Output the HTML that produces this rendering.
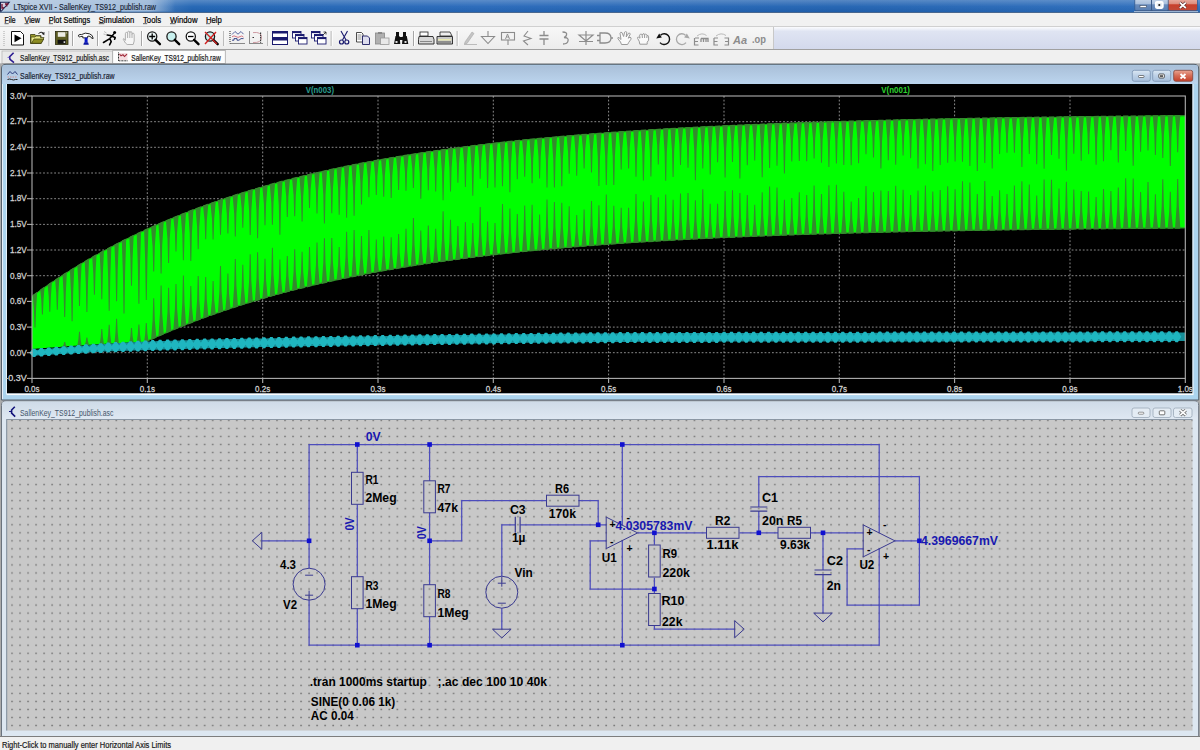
<!DOCTYPE html>
<html><head><meta charset="utf-8"><style>html,body{margin:0;padding:0;width:1200px;height:750px;overflow:hidden;background:#f0f0f0}svg{display:block}</style></head>
<body><svg width="1200" height="750" viewBox="0 0 1200 750" font-family="Liberation Sans, sans-serif">
<defs>
<linearGradient id="tb" x1="0" x2="1" y1="0" y2="0"><stop offset="0" stop-color="#6f98c8"/><stop offset="0.12" stop-color="#4a80c0"/><stop offset="0.16" stop-color="#1e62b2"/><stop offset="0.4" stop-color="#2466b8"/><stop offset="0.7" stop-color="#1e60b0"/><stop offset="1" stop-color="#2a6cbc"/></linearGradient>
<linearGradient id="glow" x1="0" x2="1" y1="0" y2="0"><stop offset="0" stop-color="#c4d4e6" stop-opacity="0.9"/><stop offset="0.85" stop-color="#b8cce2" stop-opacity="0.75"/><stop offset="1" stop-color="#b8cce2" stop-opacity="0"/></linearGradient>
<linearGradient id="tbv" x1="0" x2="0" y1="0" y2="1"><stop offset="0" stop-color="#fff" stop-opacity="0.25"/><stop offset="0.5" stop-color="#fff" stop-opacity="0.05"/><stop offset="1" stop-color="#000" stop-opacity="0.05"/></linearGradient>
<linearGradient id="wt" x1="0" x2="0" y1="0" y2="1"><stop offset="0" stop-color="#a9bfd8"/><stop offset="1" stop-color="#bcd5ee"/></linearGradient>
<linearGradient id="wt2" x1="0" x2="0" y1="0" y2="1"><stop offset="0" stop-color="#cfdbe8"/><stop offset="1" stop-color="#dfe8f2"/></linearGradient>
<linearGradient id="tool" x1="0" x2="0" y1="0" y2="1"><stop offset="0" stop-color="#f7f7f7"/><stop offset="1" stop-color="#ececec"/></linearGradient>
<linearGradient id="toolr" x1="0" x2="0" y1="0" y2="1"><stop offset="0" stop-color="#fbfcfe"/><stop offset="0.2" stop-color="#dfe4f2"/><stop offset="1" stop-color="#d3d9ec"/></linearGradient>
<linearGradient id="redb" x1="0" x2="0" y1="0" y2="1"><stop offset="0" stop-color="#e8a592"/><stop offset="0.5" stop-color="#d56b55"/><stop offset="1" stop-color="#c4402a"/></linearGradient>
<linearGradient id="blueb" x1="0" x2="0" y1="0" y2="1"><stop offset="0" stop-color="#dce8f4"/><stop offset="0.5" stop-color="#bcd0e6"/><stop offset="1" stop-color="#a8c0dc"/></linearGradient>
<pattern id="dots" x="8.285" y="416.385" width="8.03" height="8.03" patternUnits="userSpaceOnUse"><rect x="2.85" y="3.3" width="1.7" height="1.4" fill="#7a7a7a"/></pattern>
<clipPath id="plotclip"><rect x="7" y="84" width="1185.5" height="309.5"/></clipPath>
</defs>
<rect x="0" y="0" width="1200" height="750" fill="#f0f0f0"/>
<rect x="0" y="0" width="1200" height="13" fill="url(#tb)"/>
<rect x="0" y="0" width="1200" height="13" fill="url(#tbv)"/>
<rect x="0" y="0" width="175" height="11.5" fill="url(#glow)"/>
<path d="M0.5,2.3 H9.2 L1.2,11.3 H0.5 Z" fill="#d8d0e0" stroke="#1a2250" stroke-width="1.1"/><path d="M2,4 v4 h2 M5,4 h3.5 M6.8,4 v2.5" stroke="#701030" stroke-width="1.3" fill="none"/>
<text x="13.5" y="9.8" font-size="8.8" fill="#182434" text-anchor="start" textLength="142.5" lengthAdjust="spacingAndGlyphs" stroke="#182434" stroke-width="0.15">LTspice XVII - SallenKey_TS912_publish.raw</text>
<linearGradient id="cb" x1="0" x2="0" y1="0" y2="1"><stop offset="0" stop-color="#c4d4e8"/><stop offset="0.45" stop-color="#a8bedc"/><stop offset="0.5" stop-color="#6a8cbc"/><stop offset="1" stop-color="#5a80b4"/></linearGradient>
<linearGradient id="cr" x1="0" x2="0" y1="0" y2="1"><stop offset="0" stop-color="#eab0a4"/><stop offset="0.45" stop-color="#dc8c7c"/><stop offset="0.5" stop-color="#c8402c"/><stop offset="1" stop-color="#c04a38"/></linearGradient>
<path d="M1134.5,-1 V9 Q1134.5,11 1136.5,11 H1195.7 Q1197.7,11 1197.7,9 V-1 Z" fill="#3a5a88"/>
<rect x="1135.2" y="-1" width="15.8" height="11.3" rx="1" fill="url(#cb)"/>
<rect x="1152" y="-1" width="15.8" height="11.3" rx="1" fill="url(#cb)"/>
<rect x="1168.6" y="-1" width="28.4" height="11.3" rx="1" fill="url(#cr)"/>
<rect x="1140" y="5.6" width="6.2" height="2" fill="#fff" stroke="#2a3a50" stroke-width="0.5"/>
<rect x="1155.8" y="2" width="7" height="6" rx="1.2" fill="#e8eef4" stroke="#fff" stroke-width="1.8"/><circle cx="1159.3" cy="5" r="1.1" fill="#222"/>
<path d="M1179.8,2.6 L1185.8,8 M1185.8,2.6 L1179.8,8" stroke="#4a2020" stroke-width="3"/><path d="M1179.8,2.6 L1185.8,8 M1185.8,2.6 L1179.8,8" stroke="#fff" stroke-width="1.8"/>
<rect x="1134" y="11" width="64" height="1.3" fill="#9ab4d4"/>
<rect x="0" y="12.3" width="1200" height="0.9" fill="#5a6c84"/>
<rect x="0" y="13" width="1200" height="13" fill="#f1f1f1"/>
<text x="4.5" y="22.6" font-size="8.6" fill="#000" text-anchor="start" textLength="11.0" lengthAdjust="spacingAndGlyphs" stroke="#000" stroke-width="0.2">File</text>
<rect x="4.5" y="23.5" width="4.2" height="0.6" fill="#000"/>
<text x="24.5" y="22.6" font-size="8.6" fill="#000" text-anchor="start" textLength="15.5" lengthAdjust="spacingAndGlyphs" stroke="#000" stroke-width="0.2">View</text>
<rect x="24.5" y="23.5" width="4.2" height="0.6" fill="#000"/>
<text x="48.8" y="22.6" font-size="8.6" fill="#000" text-anchor="start" textLength="41.3" lengthAdjust="spacingAndGlyphs" stroke="#000" stroke-width="0.2">Plot Settings</text>
<rect x="48.8" y="23.5" width="4.2" height="0.6" fill="#000"/>
<text x="98.8" y="22.6" font-size="8.6" fill="#000" text-anchor="start" textLength="35.5" lengthAdjust="spacingAndGlyphs" stroke="#000" stroke-width="0.2">Simulation</text>
<rect x="98.8" y="23.5" width="5.5" height="0.6" fill="#000"/>
<text x="143" y="22.6" font-size="8.6" fill="#000" text-anchor="start" textLength="18.0" lengthAdjust="spacingAndGlyphs" stroke="#000" stroke-width="0.2">Tools</text>
<rect x="143" y="23.5" width="4.2" height="0.6" fill="#000"/>
<text x="170" y="22.6" font-size="8.6" fill="#000" text-anchor="start" textLength="27.5" lengthAdjust="spacingAndGlyphs" stroke="#000" stroke-width="0.2">Window</text>
<rect x="170" y="23.5" width="5.5" height="0.6" fill="#000"/>
<text x="206" y="22.6" font-size="8.6" fill="#000" text-anchor="start" textLength="15.8" lengthAdjust="spacingAndGlyphs" stroke="#000" stroke-width="0.2">Help</text>
<rect x="206" y="23.5" width="4.2" height="0.6" fill="#000"/>
<rect x="0" y="26" width="1200" height="0.8" fill="#c8c8c8"/>
<rect x="0" y="27" width="774" height="22" fill="url(#tool)"/>
<rect x="774" y="27" width="426" height="22" fill="url(#toolr)"/>
<rect x="773" y="27" width="1" height="22" fill="#c8c8c8"/>
<rect x="0" y="49" width="1200" height="1" fill="#a0a0a0"/>
<rect x="3.5" y="31" width="1" height="1" fill="#a8a8a8"/>
<rect x="3.5" y="33" width="1" height="1" fill="#a8a8a8"/>
<rect x="3.5" y="35" width="1" height="1" fill="#a8a8a8"/>
<rect x="3.5" y="37" width="1" height="1" fill="#a8a8a8"/>
<rect x="3.5" y="39" width="1" height="1" fill="#a8a8a8"/>
<rect x="3.5" y="41" width="1" height="1" fill="#a8a8a8"/>
<rect x="3.5" y="43" width="1" height="1" fill="#a8a8a8"/>
<rect x="3.5" y="45" width="1" height="1" fill="#a8a8a8"/>
<rect x="48.5" y="31" width="1" height="15" fill="#a6a6a6"/><rect x="49.5" y="31" width="1" height="15" fill="#fff"/>
<rect x="72" y="31" width="1" height="15" fill="#a6a6a6"/><rect x="73" y="31" width="1" height="15" fill="#fff"/>
<rect x="97" y="31" width="1" height="15" fill="#a6a6a6"/><rect x="98" y="31" width="1" height="15" fill="#fff"/>
<rect x="141" y="31" width="1" height="15" fill="#a6a6a6"/><rect x="142" y="31" width="1" height="15" fill="#fff"/>
<rect x="223.3" y="31" width="1" height="15" fill="#a6a6a6"/><rect x="224.3" y="31" width="1" height="15" fill="#fff"/>
<rect x="267.3" y="31" width="1" height="15" fill="#a6a6a6"/><rect x="268.3" y="31" width="1" height="15" fill="#fff"/>
<rect x="330.7" y="31" width="1" height="15" fill="#a6a6a6"/><rect x="331.7" y="31" width="1" height="15" fill="#fff"/>
<rect x="413" y="31" width="1" height="15" fill="#a6a6a6"/><rect x="414" y="31" width="1" height="15" fill="#fff"/>
<rect x="456.7" y="31" width="1" height="15" fill="#a6a6a6"/><rect x="457.7" y="31" width="1" height="15" fill="#fff"/>
<path d="M11.5,31.5 h9 l3,3 v10.5 h-12 z" fill="#fff" stroke="#111" stroke-width="1"/><path d="M14.5,34.5 L21.5,38.3 L14.5,42.3 Z" fill="#000"/>
<path d="M30.5,34.5 h4.5 l1,1.2 h5 v7.8 h-10.5 z" fill="#9a9a2a" stroke="#3a3a10" stroke-width="0.8"/><path d="M31,37 h4 l1,-1 h4.5 v1.5 h3.5 l-2.8,5.8 h-10.2 z" fill="#e8e888" stroke="#3a3a10" stroke-width="0.7"/><path d="M31.5,43.3 l2.5,-4.3 h9.8 l-2.6,4.3 z" fill="#8c8c22" stroke="#3a3a10" stroke-width="0.7"/><path d="M38.5,33.5 q2.5,-2.5 5,-0.5" fill="none" stroke="#222" stroke-width="1"/><path d="M44.5,32 l-0.2,3.2 l-2.6,-1.4 z" fill="#222"/>
<rect x="55.5" y="31.5" width="12.5" height="13" fill="#5e5e24" stroke="#2a2a10" stroke-width="0.8"/><rect x="57.8" y="32.2" width="7.6" height="4.6" fill="#ecece4"/><rect x="57.6" y="39.8" width="8.2" height="4" fill="#111"/><rect x="63.6" y="41.3" width="1.6" height="1.6" fill="#eee"/><rect x="66.2" y="32.4" width="1" height="1" fill="#ddd"/>
<path d="M78.5,35.2 q1.5,-1.2 3,-0.6 q3.5,-2.5 8,-0.8 q3.5,1.3 3.7,4.6 l-1.4,0 q-0.6,-2 -2.8,-2.3 l-1.4,0.2 l0,1.6 l-4.8,0 l0,-1.6 q-2.5,0.3 -3.6,0.6 q-1.2,-0.5 -0.7,-1.7 z" fill="#fff" stroke="#111" stroke-width="0.9"/><rect x="84.6" y="37.6" width="3" height="5.2" fill="#0a18c8"/><path d="M84,42.6 h4.2 l0.6,2.2 h-5.4 z" fill="#0a14a0"/>
<circle cx="114.6" cy="32.6" r="1.5" fill="#000"/><path d="M113.6,34.2 L109.8,38.6 L103.5,42.5 M109.8,38.6 L111.2,41.6 L109.6,44.8 M111.8,36.2 L115.2,37.6 L114.6,39.2 M111.6,35.8 L107.2,35" fill="none" stroke="#000" stroke-width="1.6" stroke-linecap="round" stroke-linejoin="round"/><path d="M104,31.5 l2.5,1.5 M103.5,34 l2.2,0.6" stroke="#999" stroke-width="0.6"/>
<path d="M127.2,44.5 H133.2 L134.2,41 V34.6 Q134.2,33.2 133.1,33.2 Q132,33.2 132,34.6 V33 Q132,31.6 130.9,31.6 Q129.8,31.6 129.8,33 V32.6 Q129.8,31.2 128.7,31.2 Q127.6,31.2 127.6,32.6 V33.6 Q127.6,32.4 126.5,32.4 Q125.4,32.4 125.4,33.6 V40.4 L124.4,39 Q123.4,38 123.2,39.2 L125.4,43 Z M127.6,33.6 V38 M129.8,33 V38 M132,34.6 V38" fill="#f6f6f6" stroke="#a8a8a8" stroke-width="0.9"/>
<circle cx="152.2" cy="36.5" r="4.6" fill="#eef8f8" stroke="#1a1a1a" stroke-width="1.3"/><path d="M155.5,39.8 L159.89999999999998,44.2" stroke="#000" stroke-width="2.4" stroke-linecap="round"/><path d="M149.2,36.5 h6 M152.2,33.5 v6" stroke="#000" stroke-width="1.3"/>
<circle cx="171.5" cy="36.5" r="4.6" fill="#c8f0ee" stroke="#1a1a1a" stroke-width="1.3"/><path d="M174.8,39.8 L179.2,44.2" stroke="#000" stroke-width="2.4" stroke-linecap="round"/>
<circle cx="190.8" cy="36.5" r="4.6" fill="#fff" stroke="#1a1a1a" stroke-width="1.3"/><path d="M194.10000000000002,39.8 L198.5,44.2" stroke="#000" stroke-width="2.4" stroke-linecap="round"/><path d="M188,36.5 h5.5" stroke="#000" stroke-width="1.3"/>
<circle cx="210.0" cy="36.5" r="4.6" fill="#c8f0ee" stroke="#1a1a1a" stroke-width="1.3"/><path d="M213.3,39.8 L217.7,44.2" stroke="#000" stroke-width="2.4" stroke-linecap="round"/><path d="M205,32 L217,44 M216,32 L205,44" stroke="#d02020" stroke-width="1.4"/>
<path d="M230,31 V43.5 H244.5" fill="none" stroke="#222" stroke-width="1" stroke-dasharray="1,1"/><path d="M232,34.5 L235,31.5 L238,34.2 L241,31.5 L243.5,34.2" fill="none" stroke="#4a5a98" stroke-width="0.9"/><path d="M232,36.8 Q234,35 236,36.6 T240,36.6 T243.5,37.2" fill="none" stroke="#d87a86" stroke-width="1"/><path d="M232,40.2 H234 V38.6 H237 V40.2 H239 L241,38.6 H243.5" fill="none" stroke="#2a3a80" stroke-width="0.9"/>
<path d="M249.5,31.5 V43.5 H263.5" fill="none" stroke="#222" stroke-width="1" stroke-dasharray="1,1"/><path d="M253,32.6 Q261.5,31.5 261.5,37.5 Q261.5,43 253,42.5" fill="none" stroke="#c89098" stroke-width="0.9"/><path d="M260.6,32.5 V42.8" stroke="#333" stroke-width="1.1" stroke-dasharray="1.5,0.8"/><path d="M252.5,37.5 h1.5" stroke="#333" stroke-width="1"/>
<rect x="272.5" y="31.5" width="15" height="6" fill="#fff" stroke="#1a1a6e" stroke-width="1"/><rect x="272.5" y="31.5" width="15" height="2" fill="#1a1a6e"/><rect x="272.5" y="38.5" width="15" height="6" fill="#fff" stroke="#1a1a6e" stroke-width="1"/><rect x="272.5" y="38.5" width="15" height="2" fill="#1a1a6e"/>
<rect x="292.5" y="31.5" width="8.5" height="6.5" fill="#fff" stroke="#1a1a6e" stroke-width="0.9"/><rect x="292.5" y="31.5" width="8.5" height="1.6" fill="#1a1a6e"/><rect x="295.5" y="34.5" width="8.5" height="6.5" fill="#fff" stroke="#1a1a6e" stroke-width="0.9"/><rect x="295.5" y="34.5" width="8.5" height="1.6" fill="#1a1a6e"/><rect x="298.5" y="37.5" width="8.5" height="6.5" fill="#fff" stroke="#1a1a6e" stroke-width="0.9"/><rect x="298.5" y="37.5" width="8.5" height="1.6" fill="#1a1a6e"/>
<rect x="311.5" y="31.5" width="8.5" height="6.5" fill="#fff" stroke="#1a1a6e" stroke-width="0.9"/><rect x="311.5" y="31.5" width="8.5" height="1.6" fill="#1a1a6e"/><rect x="314.5" y="34.5" width="8.5" height="6.5" fill="#fff" stroke="#1a1a6e" stroke-width="0.9"/><rect x="314.5" y="34.5" width="8.5" height="1.6" fill="#1a1a6e"/><rect x="317.5" y="37.5" width="8.5" height="6.5" fill="#fff" stroke="#1a1a6e" stroke-width="0.9"/><rect x="317.5" y="37.5" width="8.5" height="1.6" fill="#1a1a6e"/><path d="M323,35 l3,-3 M323.5,32 h2.5 v2.5" fill="none" stroke="#222" stroke-width="0.8"/>
<path d="M341,31 L346,40 M347.5,31 L342.5,40" stroke="#1a1a6e" stroke-width="1.1"/><circle cx="341.5" cy="42" r="2" fill="none" stroke="#1a1a6e" stroke-width="1.2"/><circle cx="346.8" cy="42" r="2" fill="none" stroke="#1a1a6e" stroke-width="1.2"/>
<path d="M356.5,32.5 h5 l1.5,1.5 v8 h-6.5 z" fill="#fff" stroke="#222" stroke-width="0.8"/><path d="M357.5,35 h4 M357.5,37 h4 M357.5,39 h4" stroke="#444" stroke-width="0.6"/><path d="M362.5,36 h5 l2,2 v6.5 h-7 z" fill="#dde" stroke="#1a1a5e" stroke-width="0.9"/>
<rect x="375.5" y="33" width="9" height="11" fill="#b0b0b0" stroke="#888" stroke-width="0.8"/><rect x="378" y="32" width="4" height="2" fill="#888"/><rect x="380.5" y="38" width="8.5" height="6.5" fill="#e8e8e8" stroke="#999" stroke-width="0.8"/>
<path d="M394,44 l1.5,-8 h4 l0.8,8 z M402,44 l0.8,-8 h4 l1.5,8 z" fill="#111"/><rect x="396" y="32" width="3" height="4" fill="#111"/><rect x="403" y="32" width="3" height="4" fill="#111"/><rect x="399" y="37" width="4" height="3" fill="#111"/><rect x="395.5" y="41" width="2" height="2" fill="#ddd"/><rect x="404.5" y="41" width="2" height="2" fill="#ddd"/>
<rect x="420" y="32" width="8" height="4" fill="#fff" stroke="#222" stroke-width="0.8"/><path d="M419,36.5 h14 l1,3 v4.5 h-15.5 v-4.5 z" fill="#d8d8d8" stroke="#222" stroke-width="0.9"/><rect x="420" y="41" width="12" height="1" fill="#888"/>
<path d="M440,32 h10 l2,4 h-12 z" fill="#eee" stroke="#222" stroke-width="0.8"/><path d="M437,36.5 h15.5 v7.5 h-15.5 z" fill="#c8c8c8" stroke="#222" stroke-width="0.9"/><rect x="438" y="39" width="13" height="1.5" fill="#e8e8b0"/><rect x="438" y="41.5" width="13" height="1" fill="#555"/>
<path d="M465,42 L472,32 L474,33.5 L467,43.5 L464.5,44 z" fill="#c4c4c4" stroke="#aaa" stroke-width="0.6"/><path d="M464,44.5 h13" stroke="#bbb" stroke-width="1"/>
<path d="M488,31 v5 M481.5,36.5 h13 l-6.5,7 z" fill="none" stroke="#8c8c8c" stroke-width="1.1"/>
<rect x="501.5" y="32.5" width="13" height="7.5" fill="none" stroke="#8c8c8c" stroke-width="1.1"/><path d="M508,40 v5" stroke="#8c8c8c" stroke-width="1.1"/><path d="M505.5,39 l2,-5 l2,5 M506.3,37 h2.8" fill="none" stroke="#8c8c8c" stroke-width="0.9"/>
<path d="M528,31 L524,36 L531,38.5 L523.5,41 L528,45" fill="none" stroke="#8c8c8c" stroke-width="1.1"/>
<path d="M544,31 v4.5 M539.5,35.5 h9 M539.5,39 h9 M544,39 v6" fill="none" stroke="#8c8c8c" stroke-width="1.3"/>
<path d="M562.5,32 q5,0 4,3 q-0.5,2 -2.5,2.5 q5,0 4,3.5 q-0.5,3 -5,3" fill="none" stroke="#8c8c8c" stroke-width="1.3"/>
<path d="M586,31 v14 M579,35 h14 l-7,6 z M579,41.5 h14" fill="none" stroke="#8c8c8c" stroke-width="1.2"/>
<path d="M600,33 h5 q6,0 6,5 q0,5 -6,5 h-5 z M597,35.5 h3 M597,40.5 h3 M611,38 h2" fill="none" stroke="#8c8c8c" stroke-width="1.3"/>
<path d="M621.5,44.5 L620.5,42 L618,38.8 Q617.3,37.2 619,37.6 L621,39.5 L620,33.2 Q620.6,31.6 622,32.6 L623.6,36.5 L624.6,32.2 Q625.6,31 626.8,32.2 L626.2,37 L628.6,33.2 Q630.2,32.6 630.2,34.2 L628.2,38.2 L630,37.2 Q631.6,37.6 631,39.2 L628.6,42.6 L627.6,44.5 Z" fill="#fafafa" stroke="#9a9a9a" stroke-width="1"/>
<path d="M639.8,44.2 L639.2,41.2 L637.6,38.4 Q637.2,36.8 638.6,37.2 L640,38.2 L639.6,35.2 Q640.2,33.6 641.6,34.2 L642.2,35.2 Q642.8,33.2 644.2,33.8 L644.6,34.8 Q645.6,33.6 646.6,34.6 L647,35.6 Q648.6,35.2 648.6,36.8 L648.6,40.2 L647.2,42.2 L647.2,44.2 Z M642.2,35.2 L642.4,38 M644.6,34.8 L644.6,38 M647,35.6 L646.8,38" fill="#fafafa" stroke="#9a9a9a" stroke-width="1"/>
<path d="M660.5,35.2 A5.4,5.4 0 1 1 660,42.6" fill="none" stroke="#111" stroke-width="1.4"/><path d="M656.2,38.6 L659.2,33.6 L661.8,37.4 Z" fill="#111"/>
<path d="M685.5,35.2 A5.4,5.4 0 1 0 686,42.6" fill="none" stroke="#a8a8a8" stroke-width="1.3"/><path d="M689.8,38.6 L686.8,33.6 L684.2,37.4 Z" fill="#a8a8a8"/>
<path d="M695,38 h4 M694.5,38 v7 h4 M694.5,41.5 h3.5" fill="none" stroke="#8c8c8c" stroke-width="1.2"/><path d="M701,38.5 h7 v3.5 M703.5,38.5 v3.5 M706,38.5 v3.5 M701,38.5 v3.5" fill="none" stroke="#8c8c8c" stroke-width="1.3"/><path d="M697,36 q5,-4 9.5,-0.5" fill="none" stroke="#aaa" stroke-width="0.8"/>
<path d="M714,38 h4 M714,38 v7 h4 M714,41.5 h3.5 M724.5,38 h4 v7 h-4 M725,41.5 h3.5" fill="none" stroke="#8c8c8c" stroke-width="1.2"/><path d="M716,36 q5,-4 10,-0.5" fill="none" stroke="#aaa" stroke-width="0.8"/>
<text x="733" y="44" font-size="10.5" font-weight="bold" fill="#8c8c8c" text-anchor="start" textLength="14" lengthAdjust="spacingAndGlyphs" font-style="italic">Aa</text>
<text x="752" y="42.5" font-size="10" font-weight="bold" fill="#8c8c8c" text-anchor="start" textLength="14" lengthAdjust="spacingAndGlyphs" >.op</text>
<rect x="0" y="50" width="1200" height="14" fill="#f0f0f0"/>
<rect x="2" y="51" width="110.5" height="12.5" fill="#e9e9e9" stroke="#b8b8b8" stroke-width="0.8"/>
<rect x="112.7" y="50.5" width="112.6" height="13" fill="#fdfdfd" stroke="#a8a8a8" stroke-width="0.8"/>
<path d="M13.6,52.8 L9.6,56.8 L10,59.4 L14,62.6" fill="none" stroke="#2a1a90" stroke-width="1.6"/><path d="M7.5,57.5 h2" stroke="#6a5ac8" stroke-width="0.8"/>
<text x="20" y="60.6" font-size="8.6" fill="#1a1a1a" text-anchor="start" textLength="89" lengthAdjust="spacingAndGlyphs" stroke="#1a1a1a" stroke-width="0.2">SallenKey_TS912_publish.asc</text>
<rect x="119" y="53" width="8.5" height="7" fill="#f4dce0"/><path d="M118.5,52.5 V60.8 H127.5" fill="none" stroke="#111" stroke-width="1" stroke-dasharray="0.9,0.6"/><path d="M119.5,54 L121,55.8 L123,54.8 L124.5,56.5 L127,54.2" fill="none" stroke="#a02838" stroke-width="1.1"/>
<text x="131.3" y="60.6" font-size="8.6" fill="#1a1a1a" text-anchor="start" textLength="89.4" lengthAdjust="spacingAndGlyphs" stroke="#1a1a1a" stroke-width="0.2">SallenKey_TS912_publish.raw</text>
<rect x="0" y="63.6" width="1200" height="1" fill="#7a7a7a"/>
<rect x="0" y="64" width="1200" height="673" fill="#ababab"/>
<path d="M1.5,400 V69 Q1.5,64.3 6,64.3 H1194 Q1198.7,64.3 1198.7,69 V400 Z" fill="#acd4ee" stroke="#56606c" stroke-width="1"/>
<rect x="2.5" y="65.3" width="1195.2" height="18.5" fill="url(#wt)"/>
<path d="M2.5,84 V399" stroke="#e6eef8" stroke-width="1"/>
<path d="M7.5,74.5 l2.5,-3 l2.5,2.5 l2.5,-2.5 l2.5,3" fill="none" stroke="#2a3a7a" stroke-width="1"/><path d="M7.5,77 h10" stroke="#d09090" stroke-width="1" stroke-dasharray="1.5,1"/><path d="M7.5,79.5 q2,-1 4,0 q2,1 4,0 l2,0" fill="none" stroke="#222" stroke-width="1"/>
<text x="20" y="79.2" font-size="8.6" fill="#1a2434" text-anchor="start" textLength="94.5" lengthAdjust="spacingAndGlyphs" stroke="#1a2434" stroke-width="0.2">SallenKey_TS912_publish.raw</text>
<rect x="1132.3" y="70.3" width="18" height="11" rx="2" fill="url(#blueb)" stroke="#7890b0" stroke-width="0.8"/>
<rect x="1152.7" y="70.3" width="18" height="11" rx="2" fill="url(#blueb)" stroke="#7890b0" stroke-width="0.8"/>
<rect x="1173.7" y="70.3" width="19" height="11" rx="2" fill="url(#redb)" stroke="#80423a" stroke-width="0.8"/>
<rect x="1138.5" y="75.5" width="5.5" height="2" rx="0.8" fill="#fff" stroke="#333" stroke-width="0.6"/>
<rect x="1158.8" y="74" width="5.5" height="4" rx="0.8" fill="#fff" stroke="#333" stroke-width="0.8"/><rect x="1160" y="75.3" width="3" height="1.5" fill="#333"/>
<path d="M1180.5,74 l5,4.5 M1185.5,74 l-5,4.5" stroke="#fff" stroke-width="1.8"/>
<rect x="7" y="84" width="1185.5" height="309.5" fill="#000"/>
<rect x="6.5" y="393.5" width="1187" height="1.6" fill="#fbfcfd"/>
<rect x="1192.5" y="84" width="1" height="310" fill="#f4f8fc"/>
<rect x="6.2" y="84" width="0.8" height="310" fill="#f4f8fc"/>
<g>
<path d="M32.0,352.7 H1185.3" stroke="#8a8a8a" stroke-width="1" stroke-dasharray="1.8,1.9"/>
<path d="M32.0,327.1 H1185.3" stroke="#8a8a8a" stroke-width="1" stroke-dasharray="1.8,1.9"/>
<path d="M32.0,301.4 H1185.3" stroke="#8a8a8a" stroke-width="1" stroke-dasharray="1.8,1.9"/>
<path d="M32.0,275.7 H1185.3" stroke="#8a8a8a" stroke-width="1" stroke-dasharray="1.8,1.9"/>
<path d="M32.0,250.0 H1185.3" stroke="#8a8a8a" stroke-width="1" stroke-dasharray="1.8,1.9"/>
<path d="M32.0,224.4 H1185.3" stroke="#8a8a8a" stroke-width="1" stroke-dasharray="1.8,1.9"/>
<path d="M32.0,198.7 H1185.3" stroke="#8a8a8a" stroke-width="1" stroke-dasharray="1.8,1.9"/>
<path d="M32.0,173.0 H1185.3" stroke="#8a8a8a" stroke-width="1" stroke-dasharray="1.8,1.9"/>
<path d="M32.0,147.3 H1185.3" stroke="#8a8a8a" stroke-width="1" stroke-dasharray="1.8,1.9"/>
<path d="M32.0,121.7 H1185.3" stroke="#8a8a8a" stroke-width="1" stroke-dasharray="1.8,1.9"/>
<path d="M147.3,96.0 V378.4" stroke="#8a8a8a" stroke-width="1" stroke-dasharray="1.8,1.9"/>
<path d="M262.7,96.0 V378.4" stroke="#8a8a8a" stroke-width="1" stroke-dasharray="1.8,1.9"/>
<path d="M378.0,96.0 V378.4" stroke="#8a8a8a" stroke-width="1" stroke-dasharray="1.8,1.9"/>
<path d="M493.3,96.0 V378.4" stroke="#8a8a8a" stroke-width="1" stroke-dasharray="1.8,1.9"/>
<path d="M608.6,96.0 V378.4" stroke="#8a8a8a" stroke-width="1" stroke-dasharray="1.8,1.9"/>
<path d="M724.0,96.0 V378.4" stroke="#8a8a8a" stroke-width="1" stroke-dasharray="1.8,1.9"/>
<path d="M839.3,96.0 V378.4" stroke="#8a8a8a" stroke-width="1" stroke-dasharray="1.8,1.9"/>
<path d="M954.6,96.0 V378.4" stroke="#8a8a8a" stroke-width="1" stroke-dasharray="1.8,1.9"/>
<path d="M1070.0,96.0 V378.4" stroke="#8a8a8a" stroke-width="1" stroke-dasharray="1.8,1.9"/>
</g>
<polygon points="32.0,296.0 33.0,295.2 34.0,294.5 35.0,293.8 36.0,293.1 37.0,292.4 38.0,291.7 39.0,290.9 40.0,290.2 41.0,289.5 42.0,288.8 43.0,288.1 44.0,287.4 45.0,286.8 46.0,286.1 47.0,285.4 48.0,284.7 49.0,284.0 50.0,283.3 51.0,282.7 52.0,282.0 53.0,281.3 54.0,280.7 55.0,280.0 56.0,279.3 57.0,278.7 58.0,278.0 59.0,277.4 60.0,276.7 61.0,276.1 62.0,275.4 63.0,274.8 64.0,274.1 65.0,273.5 66.0,272.9 67.0,272.2 68.0,271.6 69.0,271.0 70.0,270.3 71.0,269.7 72.0,269.1 73.0,268.5 74.0,267.9 75.0,267.3 76.0,266.6 77.0,266.0 78.0,265.4 79.0,264.8 80.0,264.2 81.0,263.6 82.0,263.0 83.0,262.4 84.0,261.8 85.0,261.3 86.0,260.7 87.0,260.1 88.0,259.5 89.0,258.9 90.0,258.3 91.0,257.8 92.0,257.2 93.0,256.6 94.0,256.1 95.0,255.5 96.0,254.9 97.0,254.4 98.0,253.8 99.0,253.3 100.0,252.7 101.0,252.2 102.0,251.6 103.0,251.1 104.0,250.5 105.0,250.0 106.0,249.4 107.0,248.9 108.0,248.3 109.0,247.8 110.0,247.3 111.0,246.8 112.0,246.2 113.0,245.7 114.0,245.2 115.0,244.6 116.0,244.1 117.0,243.6 118.0,243.1 119.0,242.6 120.0,242.1 121.0,241.6 122.0,241.1 123.0,240.5 124.0,240.0 125.0,239.5 126.0,239.0 127.0,238.5 128.0,238.1 129.0,237.6 130.0,237.1 131.0,236.6 132.0,236.1 133.0,235.6 134.0,235.1 135.0,234.6 136.0,234.2 137.0,233.7 138.0,233.2 139.0,232.7 140.0,232.3 141.0,231.8 142.0,231.3 143.0,230.9 144.0,230.4 145.0,229.9 146.0,229.5 147.0,229.0 148.0,228.6 149.0,228.1 150.0,227.6 151.0,227.2 152.0,226.7 153.0,226.3 154.0,225.8 155.0,225.4 156.0,225.0 157.0,224.5 158.0,224.1 159.0,223.6 160.0,223.2 161.0,222.8 162.0,222.3 163.0,221.9 164.0,221.5 165.0,221.1 166.0,220.6 167.0,220.2 168.0,219.8 169.0,219.4 170.0,218.9 171.0,218.5 172.0,218.1 173.0,217.7 174.0,217.3 175.0,216.9 176.0,216.5 177.0,216.1 178.0,215.7 179.0,215.2 180.0,214.8 181.0,214.4 182.0,214.0 183.0,213.7 184.0,213.3 185.0,212.9 186.0,212.5 187.0,212.1 188.0,211.7 189.0,211.3 190.0,210.9 191.0,210.5 192.0,210.1 193.0,209.8 194.0,209.4 195.0,209.0 196.0,208.6 197.0,208.3 198.0,207.9 199.0,207.5 200.0,207.1 201.0,206.8 202.0,206.4 203.0,206.0 204.0,205.7 205.0,205.3 206.0,204.9 207.0,204.6 208.0,204.2 209.0,203.9 210.0,203.5 211.0,203.1 212.0,202.8 213.0,202.4 214.0,202.1 215.0,201.7 216.0,201.4 217.0,201.0 218.0,200.7 219.0,200.4 220.0,200.0 221.0,199.7 222.0,199.3 223.0,199.0 224.0,198.7 225.0,198.3 226.0,198.0 227.0,197.7 228.0,197.3 229.0,197.0 230.0,196.7 231.0,196.3 232.0,196.0 233.0,195.7 234.0,195.4 235.0,195.0 236.0,194.7 237.0,194.4 238.0,194.1 239.0,193.8 240.0,193.4 241.0,193.1 242.0,192.8 243.0,192.5 244.0,192.2 245.0,191.9 246.0,191.6 247.0,191.3 248.0,191.0 249.0,190.7 250.0,190.4 251.0,190.1 252.0,189.8 253.0,189.4 254.0,189.2 255.0,188.9 256.0,188.6 257.0,188.3 258.0,188.0 259.0,187.7 260.0,187.4 261.0,187.1 262.0,186.8 263.0,186.5 264.0,186.2 265.0,185.9 266.0,185.7 267.0,185.4 268.0,185.1 269.0,184.8 270.0,184.5 271.0,184.2 272.0,184.0 273.0,183.7 274.0,183.4 275.0,183.1 276.0,182.9 277.0,182.6 278.0,182.3 279.0,182.1 280.0,181.8 281.0,181.5 282.0,181.2 283.0,181.0 284.0,180.7 285.0,180.5 286.0,180.2 287.0,179.9 288.0,179.7 289.0,179.4 290.0,179.1 291.0,178.9 292.0,178.6 293.0,178.4 294.0,178.1 295.0,177.9 296.0,177.6 297.0,177.4 298.0,177.1 299.0,176.9 300.0,176.6 301.0,176.4 302.0,176.1 303.0,175.9 304.0,175.6 305.0,175.4 306.0,175.1 307.0,174.9 308.0,174.7 309.0,174.4 310.0,174.2 311.0,173.9 312.0,173.7 313.0,173.5 314.0,173.2 315.0,173.0 316.0,172.8 317.0,172.5 318.0,172.3 319.0,172.1 320.0,171.8 321.0,171.6 322.0,171.4 323.0,171.2 324.0,170.9 325.0,170.7 326.0,170.5 327.0,170.3 328.0,170.0 329.0,169.8 330.0,169.6 331.0,169.4 332.0,169.2 333.0,168.9 334.0,168.7 335.0,168.5 336.0,168.3 337.0,168.1 338.0,167.9 339.0,167.7 340.0,167.4 341.0,167.2 342.0,167.0 343.0,166.8 344.0,166.6 345.0,166.4 346.0,166.2 347.0,166.0 348.0,165.8 349.0,165.6 350.0,165.4 351.0,165.2 352.0,165.0 353.0,164.8 354.0,164.6 355.0,164.4 356.0,164.2 357.0,164.0 358.0,163.8 359.0,163.6 360.0,163.4 361.0,163.2 362.0,163.0 363.0,162.8 364.0,162.6 365.0,162.4 366.0,162.2 367.0,162.0 368.0,161.8 369.0,161.7 370.0,161.5 371.0,161.3 372.0,161.1 373.0,160.9 374.0,160.7 375.0,160.5 376.0,160.3 377.0,160.2 378.0,160.0 379.0,159.8 380.0,159.6 381.0,159.4 382.0,159.3 383.0,159.1 384.0,158.9 385.0,158.7 386.0,158.6 387.0,158.4 388.0,158.2 389.0,158.0 390.0,157.9 391.0,157.7 392.0,157.5 393.0,157.3 394.0,157.2 395.0,157.0 396.0,156.8 397.0,156.7 398.0,156.5 399.0,156.3 400.0,156.2 401.0,156.0 402.0,155.8 403.0,155.7 404.0,155.5 405.0,155.3 406.0,155.2 407.0,155.0 408.0,154.8 409.0,154.7 410.0,154.5 411.0,154.4 412.0,154.2 413.0,154.0 414.0,153.9 415.0,153.7 416.0,153.6 417.0,153.4 418.0,153.3 419.0,153.1 420.0,153.0 421.0,152.8 422.0,152.6 423.0,152.5 424.0,152.3 425.0,152.2 426.0,152.0 427.0,151.9 428.0,151.7 429.0,151.6 430.0,151.4 431.0,151.3 432.0,151.2 433.0,151.0 434.0,150.9 435.0,150.7 436.0,150.6 437.0,150.4 438.0,150.3 439.0,150.1 440.0,150.0 441.0,149.9 442.0,149.7 443.0,149.6 444.0,149.4 445.0,149.3 446.0,149.2 447.0,149.0 448.0,148.9 449.0,148.7 450.0,148.6 451.0,148.5 452.0,148.3 453.0,148.2 454.0,148.1 455.0,147.9 456.0,147.8 457.0,147.7 458.0,147.5 459.0,147.4 460.0,147.3 461.0,147.1 462.0,147.0 463.0,146.9 464.0,146.7 465.0,146.6 466.0,146.5 467.0,146.4 468.0,146.2 469.0,146.1 470.0,146.0 471.0,145.9 472.0,145.7 473.0,145.6 474.0,145.5 475.0,145.4 476.0,145.2 477.0,145.1 478.0,145.0 479.0,144.9 480.0,144.7 481.0,144.6 482.0,144.5 483.0,144.4 484.0,144.3 485.0,144.1 486.0,144.0 487.0,143.9 488.0,143.8 489.0,143.7 490.0,143.6 491.0,143.4 492.0,143.3 493.0,143.2 494.0,143.1 495.0,143.0 496.0,142.9 497.0,142.8 498.0,142.6 499.0,142.5 500.0,142.4 501.0,142.3 502.0,142.2 503.0,142.1 504.0,142.0 505.0,141.9 506.0,141.7 507.0,141.6 508.0,141.5 509.0,141.4 510.0,141.3 511.0,141.2 512.0,141.1 513.0,141.0 514.0,140.9 515.0,140.8 516.0,140.7 517.0,140.6 518.0,140.5 519.0,140.4 520.0,140.3 521.0,140.2 522.0,140.1 523.0,140.0 524.0,139.8 525.0,139.7 526.0,139.6 527.0,139.5 528.0,139.4 529.0,139.3 530.0,139.2 531.0,139.1 532.0,139.0 533.0,138.9 534.0,138.9 535.0,138.8 536.0,138.7 537.0,138.6 538.0,138.5 539.0,138.4 540.0,138.3 541.0,138.2 542.0,138.1 543.0,138.0 544.0,137.9 545.0,137.8 546.0,137.7 547.0,137.6 548.0,137.5 549.0,137.4 550.0,137.3 551.0,137.2 552.0,137.2 553.0,137.1 554.0,137.0 555.0,136.9 556.0,136.8 557.0,136.7 558.0,136.6 559.0,136.5 560.0,136.4 561.0,136.3 562.0,136.3 563.0,136.2 564.0,136.1 565.0,136.0 566.0,135.9 567.0,135.8 568.0,135.7 569.0,135.7 570.0,135.6 571.0,135.5 572.0,135.4 573.0,135.3 574.0,135.2 575.0,135.1 576.0,135.1 577.0,135.0 578.0,134.9 579.0,134.8 580.0,134.7 581.0,134.7 582.0,134.6 583.0,134.5 584.0,134.4 585.0,134.3 586.0,134.2 587.0,134.2 588.0,134.1 589.0,134.0 590.0,133.9 591.0,133.9 592.0,133.8 593.0,133.7 594.0,133.6 595.0,133.5 596.0,133.5 597.0,133.4 598.0,133.3 599.0,133.2 600.0,133.2 601.0,133.1 602.0,133.0 603.0,132.9 604.0,132.9 605.0,132.8 606.0,132.7 607.0,132.6 608.0,132.6 609.0,132.5 610.0,132.4 611.0,132.3 612.0,132.3 613.0,132.2 614.0,132.1 615.0,132.1 616.0,132.0 617.0,131.9 618.0,131.8 619.0,131.8 620.0,131.7 621.0,131.6 622.0,131.6 623.0,131.5 624.0,131.4 625.0,131.4 626.0,131.3 627.0,131.2 628.0,131.2 629.0,131.1 630.0,131.0 631.0,131.0 632.0,130.9 633.0,130.8 634.0,130.8 635.0,130.7 636.0,130.6 637.0,130.6 638.0,130.5 639.0,130.4 640.0,130.4 641.0,130.3 642.0,130.2 643.0,130.2 644.0,130.1 645.0,130.0 646.0,130.0 647.0,129.9 648.0,129.9 649.0,129.8 650.0,129.7 651.0,129.7 652.0,129.6 653.0,129.5 654.0,129.5 655.0,129.4 656.0,129.4 657.0,129.3 658.0,129.2 659.0,129.2 660.0,129.1 661.0,129.1 662.0,129.0 663.0,128.9 664.0,128.9 665.0,128.8 666.0,128.8 667.0,128.7 668.0,128.7 669.0,128.6 670.0,128.5 671.0,128.5 672.0,128.4 673.0,128.4 674.0,128.3 675.0,128.3 676.0,128.2 677.0,128.1 678.0,128.1 679.0,128.0 680.0,128.0 681.0,127.9 682.0,127.9 683.0,127.8 684.0,127.8 685.0,127.7 686.0,127.6 687.0,127.6 688.0,127.5 689.0,127.5 690.0,127.4 691.0,127.4 692.0,127.3 693.0,127.3 694.0,127.2 695.0,127.2 696.0,127.1 697.0,127.1 698.0,127.0 699.0,127.0 700.0,126.9 701.0,126.9 702.0,126.8 703.0,126.8 704.0,126.7 705.0,126.7 706.0,126.6 707.0,126.6 708.0,126.5 709.0,126.5 710.0,126.4 711.0,126.4 712.0,126.3 713.0,126.3 714.0,126.2 715.0,126.2 716.0,126.1 717.0,126.1 718.0,126.0 719.0,126.0 720.0,125.9 721.0,125.9 722.0,125.8 723.0,125.8 724.0,125.7 725.0,125.7 726.0,125.6 727.0,125.6 728.0,125.6 729.0,125.5 730.0,125.5 731.0,125.4 732.0,125.4 733.0,125.3 734.0,125.3 735.0,125.2 736.0,125.2 737.0,125.1 738.0,125.1 739.0,125.1 740.0,125.0 741.0,125.0 742.0,124.9 743.0,124.9 744.0,124.8 745.0,124.8 746.0,124.8 747.0,124.7 748.0,124.7 749.0,124.6 750.0,124.6 751.0,124.5 752.0,124.5 753.0,124.5 754.0,124.4 755.0,124.4 756.0,124.3 757.0,124.3 758.0,124.3 759.0,124.2 760.0,124.2 761.0,124.1 762.0,124.1 763.0,124.0 764.0,124.0 765.0,124.0 766.0,123.9 767.0,123.9 768.0,123.8 769.0,123.8 770.0,123.8 771.0,123.7 772.0,123.7 773.0,123.7 774.0,123.6 775.0,123.6 776.0,123.5 777.0,123.5 778.0,123.5 779.0,123.4 780.0,123.4 781.0,123.4 782.0,123.3 783.0,123.3 784.0,123.2 785.0,123.2 786.0,123.2 787.0,123.1 788.0,123.1 789.0,123.1 790.0,123.0 791.0,123.0 792.0,122.9 793.0,122.9 794.0,122.9 795.0,122.8 796.0,122.8 797.0,122.8 798.0,122.7 799.0,122.7 800.0,122.7 801.0,122.6 802.0,122.6 803.0,122.6 804.0,122.5 805.0,122.5 806.0,122.5 807.0,122.4 808.0,122.4 809.0,122.4 810.0,122.3 811.0,122.3 812.0,122.3 813.0,122.2 814.0,122.2 815.0,122.2 816.0,122.1 817.0,122.1 818.0,122.1 819.0,122.0 820.0,122.0 821.0,122.0 822.0,121.9 823.0,121.9 824.0,121.9 825.0,121.8 826.0,121.8 827.0,121.8 828.0,121.7 829.0,121.7 830.0,121.7 831.0,121.6 832.0,121.6 833.0,121.6 834.0,121.6 835.0,121.5 836.0,121.5 837.0,121.5 838.0,121.4 839.0,121.4 840.0,121.4 841.0,121.3 842.0,121.3 843.0,121.3 844.0,121.2 845.0,121.2 846.0,121.2 847.0,121.2 848.0,121.1 849.0,121.1 850.0,121.1 851.0,121.0 852.0,121.0 853.0,121.0 854.0,121.0 855.0,120.9 856.0,120.9 857.0,120.9 858.0,120.8 859.0,120.8 860.0,120.8 861.0,120.8 862.0,120.7 863.0,120.7 864.0,120.7 865.0,120.7 866.0,120.6 867.0,120.6 868.0,120.6 869.0,120.5 870.0,120.5 871.0,120.5 872.0,120.5 873.0,120.4 874.0,120.4 875.0,120.4 876.0,120.4 877.0,120.3 878.0,120.3 879.0,120.3 880.0,120.3 881.0,120.2 882.0,120.2 883.0,120.2 884.0,120.2 885.0,120.1 886.0,120.1 887.0,120.1 888.0,120.1 889.0,120.0 890.0,120.0 891.0,120.0 892.0,120.0 893.0,119.9 894.0,119.9 895.0,119.9 896.0,119.9 897.0,119.8 898.0,119.8 899.0,119.8 900.0,119.8 901.0,119.7 902.0,119.7 903.0,119.7 904.0,119.7 905.0,119.6 906.0,119.6 907.0,119.6 908.0,119.6 909.0,119.5 910.0,119.5 911.0,119.5 912.0,119.5 913.0,119.5 914.0,119.4 915.0,119.4 916.0,119.4 917.0,119.4 918.0,119.3 919.0,119.3 920.0,119.3 921.0,119.3 922.0,119.2 923.0,119.2 924.0,119.2 925.0,119.2 926.0,119.2 927.0,119.1 928.0,119.1 929.0,119.1 930.0,119.1 931.0,119.1 932.0,119.0 933.0,119.0 934.0,119.0 935.0,119.0 936.0,118.9 937.0,118.9 938.0,118.9 939.0,118.9 940.0,118.9 941.0,118.8 942.0,118.8 943.0,118.8 944.0,118.8 945.0,118.8 946.0,118.7 947.0,118.7 948.0,118.7 949.0,118.7 950.0,118.7 951.0,118.6 952.0,118.6 953.0,118.6 954.0,118.6 955.0,118.6 956.0,118.5 957.0,118.5 958.0,118.5 959.0,118.5 960.0,118.5 961.0,118.4 962.0,118.4 963.0,118.4 964.0,118.4 965.0,118.4 966.0,118.3 967.0,118.3 968.0,118.3 969.0,118.3 970.0,118.3 971.0,118.3 972.0,118.2 973.0,118.2 974.0,118.2 975.0,118.2 976.0,118.2 977.0,118.1 978.0,118.1 979.0,118.1 980.0,118.1 981.0,118.1 982.0,118.1 983.0,118.0 984.0,118.0 985.0,118.0 986.0,118.0 987.0,118.0 988.0,117.9 989.0,117.9 990.0,117.9 991.0,117.9 992.0,117.9 993.0,117.9 994.0,117.8 995.0,117.8 996.0,117.8 997.0,117.8 998.0,117.8 999.0,117.8 1000.0,117.7 1001.0,117.7 1002.0,117.7 1003.0,117.7 1004.0,117.7 1005.0,117.7 1006.0,117.6 1007.0,117.6 1008.0,117.6 1009.0,117.6 1010.0,117.6 1011.0,117.6 1012.0,117.5 1013.0,117.5 1014.0,117.5 1015.0,117.5 1016.0,117.5 1017.0,117.5 1018.0,117.5 1019.0,117.4 1020.0,117.4 1021.0,117.4 1022.0,117.4 1023.0,117.4 1024.0,117.4 1025.0,117.3 1026.0,117.3 1027.0,117.3 1028.0,117.3 1029.0,117.3 1030.0,117.3 1031.0,117.3 1032.0,117.2 1033.0,117.2 1034.0,117.2 1035.0,117.2 1036.0,117.2 1037.0,117.2 1038.0,117.1 1039.0,117.1 1040.0,117.1 1041.0,117.1 1042.0,117.1 1043.0,117.1 1044.0,117.1 1045.0,117.0 1046.0,117.0 1047.0,117.0 1048.0,117.0 1049.0,117.0 1050.0,117.0 1051.0,117.0 1052.0,116.9 1053.0,116.9 1054.0,116.9 1055.0,116.9 1056.0,116.9 1057.0,116.9 1058.0,116.9 1059.0,116.9 1060.0,116.8 1061.0,116.8 1062.0,116.8 1063.0,116.8 1064.0,116.8 1065.0,116.8 1066.0,116.8 1067.0,116.7 1068.0,116.7 1069.0,116.7 1070.0,116.7 1071.0,116.7 1072.0,116.7 1073.0,116.7 1074.0,116.7 1075.0,116.6 1076.0,116.6 1077.0,116.6 1078.0,116.6 1079.0,116.6 1080.0,116.6 1081.0,116.6 1082.0,116.5 1083.0,116.5 1084.0,116.5 1085.0,116.5 1086.0,116.5 1087.0,116.5 1088.0,116.5 1089.0,116.5 1090.0,116.5 1091.0,116.4 1092.0,116.4 1093.0,116.4 1094.0,116.4 1095.0,116.4 1096.0,116.4 1097.0,116.4 1098.0,116.4 1099.0,116.3 1100.0,116.3 1101.0,116.3 1102.0,116.3 1103.0,116.3 1104.0,116.3 1105.0,116.3 1106.0,116.3 1107.0,116.2 1108.0,116.2 1109.0,116.2 1110.0,116.2 1111.0,116.2 1112.0,116.2 1113.0,116.2 1114.0,116.2 1115.0,116.2 1116.0,116.1 1117.0,116.1 1118.0,116.1 1119.0,116.1 1120.0,116.1 1121.0,116.1 1122.0,116.1 1123.0,116.1 1124.0,116.1 1125.0,116.0 1126.0,116.0 1127.0,116.0 1128.0,116.0 1129.0,116.0 1130.0,116.0 1131.0,116.0 1132.0,116.0 1133.0,116.0 1134.0,115.9 1135.0,115.9 1136.0,115.9 1137.0,115.9 1138.0,115.9 1139.0,115.9 1140.0,115.9 1141.0,115.9 1142.0,115.9 1143.0,115.9 1144.0,115.8 1145.0,115.8 1146.0,115.8 1147.0,115.8 1148.0,115.8 1149.0,115.8 1150.0,115.8 1151.0,115.8 1152.0,115.8 1153.0,115.8 1154.0,115.7 1155.0,115.7 1156.0,115.7 1157.0,115.7 1158.0,115.7 1159.0,115.7 1160.0,115.7 1161.0,115.7 1162.0,115.7 1163.0,115.7 1164.0,115.6 1165.0,115.6 1166.0,115.6 1167.0,115.6 1168.0,115.6 1169.0,115.6 1170.0,115.6 1171.0,115.6 1172.0,115.6 1173.0,115.6 1174.0,115.5 1175.0,115.5 1176.0,115.5 1177.0,115.5 1178.0,115.5 1179.0,115.5 1180.0,115.5 1181.0,115.5 1182.0,115.5 1183.0,115.5 1184.0,115.5 1185.0,115.4 1185.3,115.4 1185.3,228.1 1185.0,228.1 1184.0,228.2 1183.0,228.2 1182.0,228.2 1181.0,228.2 1180.0,228.2 1179.0,228.2 1178.0,228.2 1177.0,228.2 1176.0,228.2 1175.0,228.2 1174.0,228.2 1173.0,228.2 1172.0,228.2 1171.0,228.2 1170.0,228.3 1169.0,228.3 1168.0,228.3 1167.0,228.3 1166.0,228.3 1165.0,228.3 1164.0,228.3 1163.0,228.3 1162.0,228.3 1161.0,228.3 1160.0,228.3 1159.0,228.3 1158.0,228.3 1157.0,228.4 1156.0,228.4 1155.0,228.4 1154.0,228.4 1153.0,228.4 1152.0,228.4 1151.0,228.4 1150.0,228.4 1149.0,228.4 1148.0,228.4 1147.0,228.4 1146.0,228.4 1145.0,228.5 1144.0,228.5 1143.0,228.5 1142.0,228.5 1141.0,228.5 1140.0,228.5 1139.0,228.5 1138.0,228.5 1137.0,228.5 1136.0,228.5 1135.0,228.5 1134.0,228.5 1133.0,228.6 1132.0,228.6 1131.0,228.6 1130.0,228.6 1129.0,228.6 1128.0,228.6 1127.0,228.6 1126.0,228.6 1125.0,228.6 1124.0,228.6 1123.0,228.6 1122.0,228.7 1121.0,228.7 1120.0,228.7 1119.0,228.7 1118.0,228.7 1117.0,228.7 1116.0,228.7 1115.0,228.7 1114.0,228.7 1113.0,228.7 1112.0,228.7 1111.0,228.8 1110.0,228.8 1109.0,228.8 1108.0,228.8 1107.0,228.8 1106.0,228.8 1105.0,228.8 1104.0,228.8 1103.0,228.8 1102.0,228.8 1101.0,228.9 1100.0,228.9 1099.0,228.9 1098.0,228.9 1097.0,228.9 1096.0,228.9 1095.0,228.9 1094.0,228.9 1093.0,228.9 1092.0,228.9 1091.0,229.0 1090.0,229.0 1089.0,229.0 1088.0,229.0 1087.0,229.0 1086.0,229.0 1085.0,229.0 1084.0,229.0 1083.0,229.0 1082.0,229.1 1081.0,229.1 1080.0,229.1 1079.0,229.1 1078.0,229.1 1077.0,229.1 1076.0,229.1 1075.0,229.1 1074.0,229.1 1073.0,229.2 1072.0,229.2 1071.0,229.2 1070.0,229.2 1069.0,229.2 1068.0,229.2 1067.0,229.2 1066.0,229.2 1065.0,229.2 1064.0,229.3 1063.0,229.3 1062.0,229.3 1061.0,229.3 1060.0,229.3 1059.0,229.3 1058.0,229.3 1057.0,229.3 1056.0,229.3 1055.0,229.4 1054.0,229.4 1053.0,229.4 1052.0,229.4 1051.0,229.4 1050.0,229.4 1049.0,229.4 1048.0,229.4 1047.0,229.5 1046.0,229.5 1045.0,229.5 1044.0,229.5 1043.0,229.5 1042.0,229.5 1041.0,229.5 1040.0,229.5 1039.0,229.6 1038.0,229.6 1037.0,229.6 1036.0,229.6 1035.0,229.6 1034.0,229.6 1033.0,229.6 1032.0,229.6 1031.0,229.7 1030.0,229.7 1029.0,229.7 1028.0,229.7 1027.0,229.7 1026.0,229.7 1025.0,229.7 1024.0,229.8 1023.0,229.8 1022.0,229.8 1021.0,229.8 1020.0,229.8 1019.0,229.8 1018.0,229.8 1017.0,229.9 1016.0,229.9 1015.0,229.9 1014.0,229.9 1013.0,229.9 1012.0,229.9 1011.0,229.9 1010.0,230.0 1009.0,230.0 1008.0,230.0 1007.0,230.0 1006.0,230.0 1005.0,230.0 1004.0,230.0 1003.0,230.1 1002.0,230.1 1001.0,230.1 1000.0,230.1 999.0,230.1 998.0,230.1 997.0,230.1 996.0,230.2 995.0,230.2 994.0,230.2 993.0,230.2 992.0,230.2 991.0,230.2 990.0,230.2 989.0,230.3 988.0,230.3 987.0,230.3 986.0,230.3 985.0,230.3 984.0,230.3 983.0,230.4 982.0,230.4 981.0,230.4 980.0,230.4 979.0,230.4 978.0,230.4 977.0,230.5 976.0,230.5 975.0,230.5 974.0,230.5 973.0,230.5 972.0,230.5 971.0,230.6 970.0,230.6 969.0,230.6 968.0,230.6 967.0,230.6 966.0,230.6 965.0,230.7 964.0,230.7 963.0,230.7 962.0,230.7 961.0,230.7 960.0,230.7 959.0,230.8 958.0,230.8 957.0,230.8 956.0,230.8 955.0,230.8 954.0,230.9 953.0,230.9 952.0,230.9 951.0,230.9 950.0,230.9 949.0,230.9 948.0,231.0 947.0,231.0 946.0,231.0 945.0,231.0 944.0,231.0 943.0,231.1 942.0,231.1 941.0,231.1 940.0,231.1 939.0,231.1 938.0,231.1 937.0,231.2 936.0,231.2 935.0,231.2 934.0,231.2 933.0,231.2 932.0,231.3 931.0,231.3 930.0,231.3 929.0,231.3 928.0,231.3 927.0,231.4 926.0,231.4 925.0,231.4 924.0,231.4 923.0,231.4 922.0,231.5 921.0,231.5 920.0,231.5 919.0,231.5 918.0,231.5 917.0,231.6 916.0,231.6 915.0,231.6 914.0,231.6 913.0,231.7 912.0,231.7 911.0,231.7 910.0,231.7 909.0,231.7 908.0,231.8 907.0,231.8 906.0,231.8 905.0,231.8 904.0,231.8 903.0,231.9 902.0,231.9 901.0,231.9 900.0,231.9 899.0,232.0 898.0,232.0 897.0,232.0 896.0,232.0 895.0,232.1 894.0,232.1 893.0,232.1 892.0,232.1 891.0,232.1 890.0,232.2 889.0,232.2 888.0,232.2 887.0,232.2 886.0,232.3 885.0,232.3 884.0,232.3 883.0,232.3 882.0,232.4 881.0,232.4 880.0,232.4 879.0,232.4 878.0,232.5 877.0,232.5 876.0,232.5 875.0,232.5 874.0,232.6 873.0,232.6 872.0,232.6 871.0,232.6 870.0,232.7 869.0,232.7 868.0,232.7 867.0,232.7 866.0,232.8 865.0,232.8 864.0,232.8 863.0,232.8 862.0,232.9 861.0,232.9 860.0,232.9 859.0,232.9 858.0,233.0 857.0,233.0 856.0,233.0 855.0,233.0 854.0,233.1 853.0,233.1 852.0,233.1 851.0,233.1 850.0,233.2 849.0,233.2 848.0,233.2 847.0,233.3 846.0,233.3 845.0,233.3 844.0,233.3 843.0,233.4 842.0,233.4 841.0,233.4 840.0,233.5 839.0,233.5 838.0,233.5 837.0,233.5 836.0,233.6 835.0,233.6 834.0,233.6 833.0,233.7 832.0,233.7 831.0,233.7 830.0,233.7 829.0,233.8 828.0,233.8 827.0,233.8 826.0,233.9 825.0,233.9 824.0,233.9 823.0,234.0 822.0,234.0 821.0,234.0 820.0,234.0 819.0,234.1 818.0,234.1 817.0,234.1 816.0,234.2 815.0,234.2 814.0,234.2 813.0,234.3 812.0,234.3 811.0,234.3 810.0,234.4 809.0,234.4 808.0,234.4 807.0,234.5 806.0,234.5 805.0,234.5 804.0,234.6 803.0,234.6 802.0,234.6 801.0,234.7 800.0,234.7 799.0,234.7 798.0,234.8 797.0,234.8 796.0,234.8 795.0,234.9 794.0,234.9 793.0,234.9 792.0,235.0 791.0,235.0 790.0,235.0 789.0,235.1 788.0,235.1 787.0,235.1 786.0,235.2 785.0,235.2 784.0,235.2 783.0,235.3 782.0,235.3 781.0,235.4 780.0,235.4 779.0,235.4 778.0,235.5 777.0,235.5 776.0,235.5 775.0,235.6 774.0,235.6 773.0,235.6 772.0,235.7 771.0,235.7 770.0,235.8 769.0,235.8 768.0,235.8 767.0,235.9 766.0,235.9 765.0,235.9 764.0,236.0 763.0,236.0 762.0,236.1 761.0,236.1 760.0,236.1 759.0,236.2 758.0,236.2 757.0,236.3 756.0,236.3 755.0,236.3 754.0,236.4 753.0,236.4 752.0,236.5 751.0,236.5 750.0,236.5 749.0,236.6 748.0,236.6 747.0,236.7 746.0,236.7 745.0,236.7 744.0,236.8 743.0,236.8 742.0,236.9 741.0,236.9 740.0,237.0 739.0,237.0 738.0,237.0 737.0,237.1 736.0,237.1 735.0,237.2 734.0,237.2 733.0,237.3 732.0,237.3 731.0,237.4 730.0,237.4 729.0,237.4 728.0,237.5 727.0,237.5 726.0,237.6 725.0,237.6 724.0,237.7 723.0,237.7 722.0,237.8 721.0,237.8 720.0,237.8 719.0,237.9 718.0,237.9 717.0,238.0 716.0,238.0 715.0,238.1 714.0,238.1 713.0,238.2 712.0,238.2 711.0,238.3 710.0,238.3 709.0,238.4 708.0,238.4 707.0,238.5 706.0,238.5 705.0,238.6 704.0,238.6 703.0,238.7 702.0,238.7 701.0,238.8 700.0,238.8 699.0,238.9 698.0,238.9 697.0,239.0 696.0,239.0 695.0,239.1 694.0,239.1 693.0,239.2 692.0,239.2 691.0,239.3 690.0,239.3 689.0,239.4 688.0,239.4 687.0,239.5 686.0,239.5 685.0,239.6 684.0,239.6 683.0,239.7 682.0,239.7 681.0,239.8 680.0,239.9 679.0,239.9 678.0,240.0 677.0,240.0 676.0,240.1 675.0,240.1 674.0,240.2 673.0,240.2 672.0,240.3 671.0,240.3 670.0,240.4 669.0,240.5 668.0,240.5 667.0,240.6 666.0,240.6 665.0,240.7 664.0,240.7 663.0,240.8 662.0,240.9 661.0,240.9 660.0,241.0 659.0,241.0 658.0,241.1 657.0,241.2 656.0,241.2 655.0,241.3 654.0,241.3 653.0,241.4 652.0,241.5 651.0,241.5 650.0,241.6 649.0,241.6 648.0,241.7 647.0,241.8 646.0,241.8 645.0,241.9 644.0,242.0 643.0,242.0 642.0,242.1 641.0,242.1 640.0,242.2 639.0,242.3 638.0,242.3 637.0,242.4 636.0,242.5 635.0,242.5 634.0,242.6 633.0,242.7 632.0,242.7 631.0,242.8 630.0,242.9 629.0,242.9 628.0,243.0 627.0,243.1 626.0,243.1 625.0,243.2 624.0,243.3 623.0,243.3 622.0,243.4 621.0,243.5 620.0,243.5 619.0,243.6 618.0,243.7 617.0,243.7 616.0,243.8 615.0,243.9 614.0,244.0 613.0,244.0 612.0,244.1 611.0,244.2 610.0,244.2 609.0,244.3 608.0,244.4 607.0,244.5 606.0,244.5 605.0,244.6 604.0,244.7 603.0,244.7 602.0,244.8 601.0,244.9 600.0,245.0 599.0,245.0 598.0,245.1 597.0,245.2 596.0,245.3 595.0,245.3 594.0,245.4 593.0,245.5 592.0,245.6 591.0,245.7 590.0,245.7 589.0,245.8 588.0,245.9 587.0,246.0 586.0,246.0 585.0,246.1 584.0,246.2 583.0,246.3 582.0,246.4 581.0,246.4 580.0,246.5 579.0,246.6 578.0,246.7 577.0,246.8 576.0,246.9 575.0,246.9 574.0,247.0 573.0,247.1 572.0,247.2 571.0,247.3 570.0,247.4 569.0,247.4 568.0,247.5 567.0,247.6 566.0,247.7 565.0,247.8 564.0,247.9 563.0,248.0 562.0,248.0 561.0,248.1 560.0,248.2 559.0,248.3 558.0,248.4 557.0,248.5 556.0,248.6 555.0,248.7 554.0,248.8 553.0,248.8 552.0,248.9 551.0,249.0 550.0,249.1 549.0,249.2 548.0,249.3 547.0,249.4 546.0,249.5 545.0,249.6 544.0,249.7 543.0,249.8 542.0,249.9 541.0,250.0 540.0,250.0 539.0,250.1 538.0,250.2 537.0,250.3 536.0,250.4 535.0,250.5 534.0,250.6 533.0,250.7 532.0,250.8 531.0,250.9 530.0,251.0 529.0,251.1 528.0,251.2 527.0,251.3 526.0,251.4 525.0,251.5 524.0,251.6 523.0,251.7 522.0,251.8 521.0,251.9 520.0,252.0 519.0,252.1 518.0,252.2 517.0,252.3 516.0,252.4 515.0,252.6 514.0,252.7 513.0,252.8 512.0,252.9 511.0,253.0 510.0,253.1 509.0,253.2 508.0,253.3 507.0,253.4 506.0,253.5 505.0,253.6 504.0,253.7 503.0,253.8 502.0,254.0 501.0,254.1 500.0,254.2 499.0,254.3 498.0,254.4 497.0,254.5 496.0,254.6 495.0,254.7 494.0,254.9 493.0,255.0 492.0,255.1 491.0,255.2 490.0,255.3 489.0,255.4 488.0,255.6 487.0,255.7 486.0,255.8 485.0,255.9 484.0,256.0 483.0,256.2 482.0,256.3 481.0,256.4 480.0,256.5 479.0,256.6 478.0,256.8 477.0,256.9 476.0,257.0 475.0,257.1 474.0,257.2 473.0,257.4 472.0,257.5 471.0,257.6 470.0,257.8 469.0,257.9 468.0,258.0 467.0,258.1 466.0,258.3 465.0,258.4 464.0,258.5 463.0,258.6 462.0,258.8 461.0,258.9 460.0,259.0 459.0,259.2 458.0,259.3 457.0,259.4 456.0,259.6 455.0,259.7 454.0,259.8 453.0,260.0 452.0,260.1 451.0,260.2 450.0,260.4 449.0,260.5 448.0,260.7 447.0,260.8 446.0,260.9 445.0,261.1 444.0,261.2 443.0,261.4 442.0,261.5 441.0,261.6 440.0,261.8 439.0,261.9 438.0,262.1 437.0,262.2 436.0,262.4 435.0,262.5 434.0,262.6 433.0,262.8 432.0,262.9 431.0,263.1 430.0,263.2 429.0,263.4 428.0,263.5 427.0,263.7 426.0,263.8 425.0,264.0 424.0,264.1 423.0,264.3 422.0,264.4 421.0,264.6 420.0,264.7 419.0,264.9 418.0,265.1 417.0,265.2 416.0,265.4 415.0,265.5 414.0,265.7 413.0,265.8 412.0,266.0 411.0,266.2 410.0,266.3 409.0,266.5 408.0,266.6 407.0,266.8 406.0,267.0 405.0,267.1 404.0,267.3 403.0,267.5 402.0,267.6 401.0,267.8 400.0,268.0 399.0,268.1 398.0,268.3 397.0,268.5 396.0,268.6 395.0,268.8 394.0,269.0 393.0,269.2 392.0,269.3 391.0,269.5 390.0,269.7 389.0,269.8 388.0,270.0 387.0,270.2 386.0,270.4 385.0,270.6 384.0,270.7 383.0,270.9 382.0,271.1 381.0,271.3 380.0,271.4 379.0,271.6 378.0,271.8 377.0,272.0 376.0,272.2 375.0,272.4 374.0,272.6 373.0,272.7 372.0,272.9 371.0,273.1 370.0,273.3 369.0,273.5 368.0,273.7 367.0,273.9 366.0,274.1 365.0,274.3 364.0,274.4 363.0,274.6 362.0,274.8 361.0,275.0 360.0,275.2 359.0,275.4 358.0,275.6 357.0,275.8 356.0,276.0 355.0,276.2 354.0,276.4 353.0,276.6 352.0,276.8 351.0,277.0 350.0,277.2 349.0,277.4 348.0,277.6 347.0,277.9 346.0,278.1 345.0,278.3 344.0,278.5 343.0,278.7 342.0,278.9 341.0,279.1 340.0,279.3 339.0,279.5 338.0,279.8 337.0,280.0 336.0,280.2 335.0,280.4 334.0,280.6 333.0,280.8 332.0,281.1 331.0,281.3 330.0,281.5 329.0,281.7 328.0,281.9 327.0,282.2 326.0,282.4 325.0,282.6 324.0,282.8 323.0,283.1 322.0,283.3 321.0,283.5 320.0,283.8 319.0,284.0 318.0,284.2 317.0,284.5 316.0,284.7 315.0,284.9 314.0,285.2 313.0,285.4 312.0,285.6 311.0,285.9 310.0,286.1 309.0,286.4 308.0,286.6 307.0,286.8 306.0,287.1 305.0,287.3 304.0,287.6 303.0,287.8 302.0,288.1 301.0,288.3 300.0,288.6 299.0,288.8 298.0,289.1 297.0,289.3 296.0,289.6 295.0,289.8 294.0,290.1 293.0,290.4 292.0,290.6 291.0,290.9 290.0,291.1 289.0,291.4 288.0,291.7 287.0,291.9 286.0,292.2 285.0,292.4 284.0,292.7 283.0,293.0 282.0,293.2 281.0,293.5 280.0,293.8 279.0,294.1 278.0,294.3 277.0,294.6 276.0,294.9 275.0,295.2 274.0,295.4 273.0,295.7 272.0,296.0 271.0,296.3 270.0,296.6 269.0,296.8 268.0,297.1 267.0,297.4 266.0,297.7 265.0,298.0 264.0,298.3 263.0,298.6 262.0,298.9 261.0,299.1 260.0,299.4 259.0,299.7 258.0,300.0 257.0,300.3 256.0,300.6 255.0,300.9 254.0,301.2 253.0,301.5 252.0,301.8 251.0,302.1 250.0,302.4 249.0,302.8 248.0,303.1 247.0,303.4 246.0,303.7 245.0,304.0 244.0,304.3 243.0,304.6 242.0,304.9 241.0,305.3 240.0,305.6 239.0,305.9 238.0,306.2 237.0,306.5 236.0,306.9 235.0,307.2 234.0,307.5 233.0,307.8 232.0,308.2 231.0,308.5 230.0,308.8 229.0,309.2 228.0,309.5 227.0,309.8 226.0,310.2 225.0,310.5 224.0,310.8 223.0,311.2 222.0,311.5 221.0,311.9 220.0,312.2 219.0,312.6 218.0,312.9 217.0,313.3 216.0,313.6 215.0,314.0 214.0,314.3 213.0,314.7 212.0,315.0 211.0,315.4 210.0,315.7 209.0,316.1 208.0,316.5 207.0,316.8 206.0,317.2 205.0,317.6 204.0,317.9 203.0,318.3 202.0,318.7 201.0,319.0 200.0,319.4 199.0,319.8 198.0,320.2 197.0,320.5 196.0,320.9 195.0,321.3 194.0,321.7 193.0,322.1 192.0,322.5 191.0,322.8 190.0,323.2 189.0,323.6 188.0,324.0 187.0,324.4 186.0,324.8 185.0,325.2 184.0,325.6 183.0,326.0 182.0,326.4 181.0,326.8 180.0,327.2 179.0,327.6 178.0,328.0 177.0,328.4 176.0,328.8 175.0,329.3 174.0,329.7 173.0,330.1 172.0,330.5 171.0,330.9 170.0,331.3 169.0,331.8 168.0,332.2 167.0,332.6 166.0,333.1 165.0,333.5 164.0,333.9 163.0,334.3 162.0,334.8 161.0,335.2 160.0,335.7 159.0,336.1 158.0,336.5 157.0,337.0 156.0,337.4 155.0,337.9 154.0,338.3 153.0,338.8 152.0,339.2 151.0,339.7 150.0,340.1 149.0,340.6 148.0,341.1 147.0,341.8 146.0,341.8 145.0,341.9 144.0,341.9 143.0,342.0 142.0,342.0 141.0,342.0 140.0,342.1 139.0,342.1 138.0,342.2 137.0,342.2 136.0,342.2 135.0,342.3 134.0,342.3 133.0,342.4 132.0,342.4 131.0,342.5 130.0,342.5 129.0,342.6 128.0,342.6 127.0,342.6 126.0,342.7 125.0,342.7 124.0,342.8 123.0,342.8 122.0,342.9 121.0,342.9 120.0,343.0 119.0,343.0 118.0,343.1 117.0,343.2 116.0,343.2 115.0,343.3 114.0,343.3 113.0,343.4 112.0,343.4 111.0,343.5 110.0,343.5 109.0,343.6 108.0,343.7 107.0,343.7 106.0,343.8 105.0,343.8 104.0,343.9 103.0,343.9 102.0,344.0 101.0,344.1 100.0,344.1 99.0,344.2 98.0,344.2 97.0,344.3 96.0,344.4 95.0,344.4 94.0,344.5 93.0,344.6 92.0,344.6 91.0,344.7 90.0,344.8 89.0,344.8 88.0,344.9 87.0,345.0 86.0,345.0 85.0,345.1 84.0,345.2 83.0,345.2 82.0,345.3 81.0,345.4 80.0,345.4 79.0,345.5 78.0,345.6 77.0,345.6 76.0,345.7 75.0,345.8 74.0,345.8 73.0,345.9 72.0,346.0 71.0,346.1 70.0,346.1 69.0,346.2 68.0,346.3 67.0,346.3 66.0,346.4 65.0,346.5 64.0,346.6 63.0,346.6 62.0,346.7 61.0,346.8 60.0,346.9 59.0,346.9 58.0,347.0 57.0,347.1 56.0,347.1 55.0,347.2 54.0,347.3 53.0,347.4 52.0,347.5 51.0,347.5 50.0,347.6 49.0,347.7 48.0,347.8 47.0,347.8 46.0,347.9 45.0,348.0 44.0,348.1 43.0,348.1 42.0,348.2 41.0,348.3 40.0,348.4 39.0,348.5 38.0,348.5 37.0,348.6 36.0,348.7 35.0,348.8 34.0,348.8 33.0,348.9 32.0,349.0" fill="#00ff00"/>
<path d="M32.8,294.9 L37.2,291.7 L36.1,309.0 L35.5,327.6 L34.5,327.6 L33.9,309.0 Z M40.2,289.6 L44.6,286.5 L43.5,300.3 L42.9,314.6 L41.9,314.6 L41.3,300.3 Z M47.6,284.4 L52.0,281.5 L50.9,296.2 L50.3,311.7 L49.3,311.7 L48.7,296.2 Z M55.1,279.5 L59.5,276.6 L58.4,292.6 L57.8,309.8 L56.8,309.8 L56.2,292.6 Z M62.5,274.6 L66.9,271.8 L65.8,293.1 L65.2,316.9 L64.2,316.9 L63.6,293.1 Z M62.5,347.2 L66.9,346.8 L65.8,344.5 L65.2,342.0 L64.2,342.0 L63.6,344.5 Z M69.9,269.9 L74.3,267.2 L73.2,292.5 L72.6,321.2 L71.6,321.2 L71.0,292.5 Z M77.3,265.3 L81.7,262.7 L80.6,283.2 L80.0,306.0 L79.0,306.0 L78.4,283.2 Z M77.3,346.1 L81.7,345.8 L80.6,339.3 L80.0,331.7 L79.0,331.7 L78.4,339.3 Z M84.7,260.9 L89.1,258.3 L88.0,283.5 L87.4,312.0 L86.4,312.0 L85.8,283.5 Z M84.7,345.6 L89.1,345.3 L88.0,341.6 L87.4,337.6 L86.4,337.6 L85.8,341.6 Z M92.2,256.6 L96.6,254.1 L95.5,273.3 L94.9,294.7 L93.9,294.7 L93.3,273.3 Z M99.6,252.4 L104.0,250.0 L102.9,273.1 L102.3,299.2 L101.3,299.2 L100.7,273.1 Z M99.6,344.7 L104.0,344.4 L102.9,337.2 L102.3,328.9 L101.3,328.9 L100.7,337.2 Z M107.0,248.4 L111.4,246.0 L110.3,276.1 L109.7,310.8 L108.7,310.8 L108.1,276.1 Z M107.0,344.2 L111.4,344.0 L110.3,335.1 L109.7,324.8 L108.7,324.8 L108.1,335.1 Z M114.4,244.5 L118.8,242.2 L117.7,269.6 L117.1,301.2 L116.1,301.2 L115.5,269.6 Z M114.4,343.8 L118.8,343.6 L117.7,332.2 L117.1,318.8 L116.1,318.8 L115.5,332.2 Z M121.8,240.6 L126.2,238.4 L125.1,273.0 L124.5,313.4 L123.5,313.4 L122.9,273.0 Z M129.3,236.9 L133.7,234.8 L132.6,258.6 L132.0,285.7 L131.0,285.7 L130.4,258.6 Z M129.3,343.0 L133.7,342.8 L132.6,335.9 L132.0,327.9 L131.0,327.9 L130.4,335.9 Z M136.7,233.3 L141.1,231.3 L140.0,264.7 L139.4,303.8 L138.4,303.8 L137.8,264.7 Z M136.7,342.7 L141.1,342.5 L140.0,334.2 L139.4,324.6 L138.4,324.6 L137.8,334.2 Z M144.1,229.8 L148.5,227.8 L147.4,261.1 L146.8,300.0 L145.8,300.0 L145.2,261.1 Z M144.1,342.4 L148.5,341.3 L147.4,333.4 L146.8,323.1 L145.8,323.1 L145.2,333.4 Z M151.0,226.7 L156.4,224.3 L154.8,246.4 L154.2,271.5 L153.2,271.5 L152.6,246.4 Z M151.0,340.2 L156.4,337.7 L154.8,320.4 L154.2,298.2 L153.2,298.2 L152.6,320.4 Z M158.4,223.4 L163.8,221.0 L162.2,245.5 L161.6,273.4 L160.6,273.4 L160.0,245.5 Z M158.4,336.8 L163.8,334.5 L162.2,312.9 L161.6,285.6 L160.6,285.6 L160.0,312.9 Z M165.9,220.2 L171.3,217.9 L169.7,239.0 L169.1,262.9 L168.1,262.9 L167.5,239.0 Z M165.9,333.6 L171.3,331.3 L169.7,312.1 L169.1,287.8 L168.1,287.8 L167.5,312.1 Z M173.3,217.1 L178.7,214.9 L177.1,232.2 L176.5,251.4 L175.5,251.4 L174.9,232.2 Z M173.3,330.5 L178.7,328.2 L177.1,308.7 L176.5,284.0 L175.5,284.0 L174.9,308.7 Z M180.7,214.1 L186.1,211.9 L184.5,234.5 L183.9,260.3 L182.9,260.3 L182.3,234.5 Z M180.7,327.4 L186.1,325.3 L184.5,303.1 L183.9,275.4 L182.9,275.4 L182.3,303.1 Z M188.1,211.1 L193.5,209.1 L191.9,233.2 L191.3,260.9 L190.3,260.9 L189.7,233.2 Z M188.1,324.5 L193.5,322.4 L191.9,306.3 L191.3,286.0 L190.3,286.0 L189.7,306.3 Z M195.5,208.3 L200.9,206.3 L199.3,226.5 L198.7,249.3 L197.7,249.3 L197.1,226.5 Z M195.5,321.6 L200.9,319.6 L199.3,300.2 L198.7,275.9 L197.7,275.9 L197.1,300.2 Z M203.0,205.5 L208.4,203.6 L206.8,220.4 L206.2,239.2 L205.2,239.2 L204.6,220.4 Z M203.0,318.8 L208.4,316.8 L206.8,299.2 L206.2,277.1 L205.2,277.1 L204.6,299.2 Z M210.4,202.9 L215.8,201.0 L214.2,219.1 L213.6,239.5 L212.6,239.5 L212.0,219.1 Z M210.4,316.1 L215.8,314.2 L214.2,299.5 L213.6,281.0 L212.6,281.0 L212.0,299.5 Z M217.8,200.3 L223.2,198.4 L221.6,215.5 L221.0,234.7 L220.0,234.7 L219.4,215.5 Z M217.8,313.5 L223.2,311.6 L221.6,291.3 L221.0,266.0 L220.0,266.0 L219.4,291.3 Z M225.2,197.8 L230.6,196.0 L229.0,213.7 L228.4,233.6 L227.4,233.6 L226.8,213.7 Z M225.2,310.9 L230.6,309.1 L229.0,293.3 L228.4,273.4 L227.4,273.4 L226.8,293.3 Z M232.6,195.3 L238.0,193.6 L236.4,213.6 L235.8,236.5 L234.8,236.5 L234.2,213.6 Z M232.6,308.5 L238.0,306.7 L236.4,285.5 L235.8,259.1 L234.8,259.1 L234.2,285.5 Z M240.1,192.9 L245.5,191.2 L243.9,208.4 L243.3,227.8 L242.3,227.8 L241.7,208.4 Z M240.1,306.0 L245.5,304.3 L243.9,286.7 L243.3,264.7 L242.3,264.7 L241.7,286.7 Z M247.5,190.6 L252.9,189.0 L251.3,210.4 L250.7,235.0 L249.7,235.0 L249.1,210.4 Z M247.5,303.7 L252.9,302.1 L251.3,280.7 L250.7,254.2 L249.7,254.2 L249.1,280.7 Z M254.9,188.4 L260.3,186.8 L258.7,210.7 L258.1,238.2 L257.1,238.2 L256.5,210.7 Z M254.9,301.5 L260.3,299.9 L258.7,278.6 L258.1,252.3 L257.1,252.3 L256.5,278.6 Z M262.3,186.2 L267.7,184.7 L266.1,203.6 L265.5,225.2 L264.5,225.2 L263.9,203.6 Z M262.3,299.3 L267.7,297.7 L266.1,280.3 L265.5,258.7 L264.5,258.7 L263.9,280.3 Z M269.7,184.1 L275.1,182.6 L273.5,202.2 L272.9,224.7 L271.9,224.7 L271.3,202.2 Z M269.7,297.1 L275.1,295.6 L273.5,274.2 L272.9,247.7 L271.9,247.7 L271.3,274.2 Z M277.2,182.1 L282.6,180.6 L281.0,205.6 L280.4,234.7 L279.4,234.7 L278.8,205.6 Z M277.2,295.1 L282.6,293.6 L281.0,278.4 L280.4,259.6 L279.4,259.6 L278.8,278.4 Z M284.6,180.1 L290.0,178.7 L288.4,196.6 L287.8,217.0 L286.8,217.0 L286.2,196.6 Z M284.6,293.1 L290.0,291.6 L288.4,275.7 L287.8,256.1 L286.8,256.1 L286.2,275.7 Z M292.0,178.1 L297.4,176.8 L295.8,195.2 L295.2,216.2 L294.2,216.2 L293.6,195.2 Z M292.0,291.1 L297.4,289.7 L295.8,271.7 L295.2,249.3 L294.2,249.3 L293.6,271.7 Z M299.4,176.3 L304.8,174.9 L303.2,196.5 L302.6,221.6 L301.6,221.6 L301.0,196.5 Z M299.4,289.2 L304.8,287.9 L303.2,271.7 L302.6,251.7 L301.6,251.7 L301.0,271.7 Z M306.8,174.4 L312.2,173.2 L310.6,189.4 L310.0,208.0 L309.0,208.0 L308.4,189.4 Z M306.8,287.4 L312.2,286.1 L310.6,268.5 L310.0,246.9 L309.0,246.9 L308.4,268.5 Z M314.3,172.7 L319.7,171.4 L318.1,191.0 L317.5,213.6 L316.5,213.6 L315.9,191.0 Z M314.3,285.6 L319.7,284.3 L318.1,265.5 L317.5,242.4 L316.5,242.4 L315.9,265.5 Z M321.7,171.0 L327.1,169.7 L325.5,194.6 L324.9,223.6 L323.9,223.6 L323.3,194.6 Z M321.7,283.9 L327.1,282.7 L325.5,262.7 L324.9,238.3 L323.9,238.3 L323.3,262.7 Z M329.1,169.3 L334.5,168.1 L332.9,189.0 L332.3,213.2 L331.3,213.2 L330.7,189.0 Z M329.1,282.2 L334.5,281.0 L332.9,261.7 L332.3,238.0 L331.3,238.0 L330.7,261.7 Z M336.5,167.7 L341.9,166.5 L340.3,188.8 L339.7,214.8 L338.7,214.8 L338.1,188.8 Z M336.5,280.6 L341.9,279.4 L340.3,264.9 L339.7,247.1 L338.7,247.1 L338.1,264.9 Z M343.9,166.1 L349.3,165.0 L347.7,189.3 L347.1,217.7 L346.1,217.7 L345.5,189.3 Z M343.9,279.0 L349.3,277.9 L347.7,257.2 L347.1,231.8 L346.1,231.8 L345.5,257.2 Z M351.4,164.6 L356.8,163.5 L355.2,187.6 L354.6,215.7 L353.6,215.7 L353.0,187.6 Z M351.4,277.5 L356.8,276.4 L355.2,255.5 L354.6,229.9 L353.6,229.9 L353.0,255.5 Z M358.8,163.1 L364.2,162.1 L362.6,181.7 L362.0,204.5 L361.0,204.5 L360.4,181.7 Z M358.8,276.0 L364.2,274.9 L362.6,257.4 L362.0,236.0 L361.0,236.0 L360.4,257.4 Z M366.2,161.7 L371.6,160.7 L370.0,177.7 L369.4,197.3 L368.4,197.3 L367.8,177.7 Z M366.2,274.5 L371.6,273.5 L370.0,254.0 L369.4,230.1 L368.4,230.1 L367.8,254.0 Z M373.6,160.3 L379.0,159.3 L377.4,176.0 L376.8,195.1 L375.8,195.1 L375.2,176.0 Z M373.6,273.1 L379.0,272.1 L377.4,257.5 L376.8,239.5 L375.8,239.5 L375.2,257.5 Z M381.0,158.9 L386.4,158.0 L384.8,175.9 L384.2,196.7 L383.2,196.7 L382.6,175.9 Z M381.0,271.8 L386.4,270.8 L384.8,255.3 L384.2,236.4 L383.2,236.4 L382.6,255.3 Z M388.5,157.6 L393.9,156.7 L392.3,175.8 L391.7,198.0 L390.7,198.0 L390.1,175.8 Z M388.5,270.4 L393.9,269.5 L392.3,254.9 L391.7,237.2 L390.7,237.2 L390.1,254.9 Z M395.9,156.3 L401.3,155.4 L399.7,171.5 L399.1,189.9 L398.1,189.9 L397.5,171.5 Z M395.9,269.2 L401.3,268.2 L399.7,252.8 L399.1,234.0 L398.1,234.0 L397.5,252.8 Z M403.3,155.1 L408.7,154.2 L407.1,171.2 L406.5,190.8 L405.5,190.8 L404.9,171.2 Z M403.3,267.9 L408.7,267.0 L407.1,249.8 L406.5,228.8 L405.5,228.8 L404.9,249.8 Z M410.7,153.9 L416.1,153.1 L414.5,169.3 L413.9,188.0 L412.9,188.0 L412.3,169.3 Z M410.7,266.7 L416.1,265.8 L414.5,244.2 L413.9,217.9 L412.9,217.9 L412.3,244.2 Z M418.1,152.7 L423.5,151.9 L421.9,173.5 L421.3,198.7 L420.3,198.7 L419.7,173.5 Z M418.1,265.5 L423.5,264.7 L421.9,249.3 L421.3,230.5 L420.3,230.5 L419.7,249.3 Z M425.6,151.6 L431.0,150.8 L429.4,169.1 L428.8,190.3 L427.8,190.3 L427.2,169.1 Z M425.6,264.4 L431.0,263.6 L429.4,246.4 L428.8,225.6 L427.8,225.6 L427.2,246.4 Z M433.0,150.5 L438.4,149.7 L436.8,169.0 L436.2,191.5 L435.2,191.5 L434.6,169.0 Z M433.0,263.3 L438.4,262.5 L436.8,247.3 L436.2,228.8 L435.2,228.8 L434.6,247.3 Z M440.4,149.4 L445.8,148.7 L444.2,172.3 L443.6,200.2 L442.6,200.2 L442.0,172.3 Z M440.4,262.2 L445.8,261.5 L444.2,238.8 L443.6,211.2 L442.6,211.2 L442.0,238.8 Z M447.8,148.4 L453.2,147.7 L451.6,167.8 L451.0,191.4 L450.0,191.4 L449.4,167.8 Z M447.8,261.2 L453.2,260.4 L451.6,242.1 L451.0,219.8 L450.0,219.8 L449.4,242.1 Z M455.2,147.4 L460.6,146.7 L459.0,163.4 L458.4,182.8 L457.4,182.8 L456.8,163.4 Z M455.2,260.2 L460.6,259.5 L459.0,244.4 L458.4,226.1 L457.4,226.1 L456.8,244.4 Z M462.7,146.4 L468.1,145.7 L466.5,164.8 L465.9,187.0 L464.9,187.0 L464.3,164.8 Z M462.7,259.2 L468.1,258.5 L466.5,242.0 L465.9,222.0 L464.9,222.0 L464.3,242.0 Z M470.1,145.5 L475.5,144.8 L473.9,168.2 L473.3,195.8 L472.3,195.8 L471.7,168.2 Z M470.1,258.2 L475.5,257.6 L473.9,241.9 L473.3,223.0 L472.3,223.0 L471.7,241.9 Z M477.5,144.5 L482.9,143.9 L481.3,160.0 L480.7,178.7 L479.7,178.7 L479.1,160.0 Z M477.5,257.3 L482.9,256.7 L481.3,234.3 L480.7,207.1 L479.7,207.1 L479.1,234.3 Z M484.9,143.7 L490.3,143.0 L488.7,163.7 L488.1,188.0 L487.1,188.0 L486.5,163.7 Z M484.9,256.4 L490.3,255.8 L488.7,240.3 L488.1,221.5 L487.1,221.5 L486.5,240.3 Z M492.3,142.8 L497.7,142.2 L496.1,163.0 L495.5,187.4 L494.5,187.4 L493.9,163.0 Z M492.3,255.6 L497.7,254.9 L496.1,240.4 L495.5,222.9 L494.5,222.9 L493.9,240.4 Z M499.8,141.9 L505.2,141.3 L503.6,162.0 L503.0,186.3 L502.0,186.3 L501.4,162.0 Z M499.8,254.7 L505.2,254.1 L503.6,231.5 L503.0,204.0 L502.0,204.0 L501.4,231.5 Z M507.2,141.1 L512.6,140.5 L511.0,164.2 L510.4,192.2 L509.4,192.2 L508.8,164.2 Z M507.2,253.9 L512.6,253.3 L511.0,233.1 L510.4,208.6 L509.4,208.6 L508.8,233.1 Z M514.6,140.3 L520.0,139.8 L518.4,158.0 L517.8,179.3 L516.8,179.3 L516.2,158.0 Z M514.6,253.1 L520.0,252.5 L518.4,235.1 L517.8,214.0 L516.8,214.0 L516.2,235.1 Z M522.0,139.6 L527.4,139.0 L525.8,156.4 L525.2,176.7 L524.2,176.7 L523.6,156.4 Z M522.0,252.3 L527.4,251.8 L525.8,230.9 L525.2,205.6 L524.2,205.6 L523.6,230.9 Z M529.4,138.8 L534.8,138.3 L533.2,158.9 L532.6,183.3 L531.6,183.3 L531.0,158.9 Z M529.4,251.6 L534.8,251.0 L533.2,230.1 L532.6,204.7 L531.6,204.7 L531.0,230.1 Z M536.9,138.1 L542.3,137.6 L540.7,156.4 L540.1,178.5 L539.1,178.5 L538.5,156.4 Z M536.9,250.8 L542.3,250.3 L540.7,234.1 L540.1,214.6 L539.1,214.6 L538.5,234.1 Z M544.3,137.4 L549.7,136.9 L548.1,160.1 L547.5,187.5 L546.5,187.5 L545.9,160.1 Z M544.3,250.1 L549.7,249.6 L548.1,226.9 L547.5,199.4 L546.5,199.4 L545.9,226.9 Z M551.7,136.7 L557.1,136.2 L555.5,159.7 L554.9,187.6 L553.9,187.6 L553.3,159.7 Z M551.7,249.5 L557.1,249.0 L555.5,227.7 L554.9,202.1 L553.9,202.1 L553.3,227.7 Z M559.1,136.0 L564.5,135.5 L562.9,158.8 L562.3,186.3 L561.3,186.3 L560.7,158.8 Z M559.1,248.8 L564.5,248.3 L562.9,227.6 L562.3,202.7 L561.3,202.7 L560.7,227.6 Z M566.5,135.4 L571.9,134.9 L570.3,152.8 L569.7,173.7 L568.7,173.7 L568.1,152.8 Z M566.5,248.1 L571.9,247.7 L570.3,228.9 L569.7,206.3 L568.7,206.3 L568.1,228.9 Z M574.0,134.7 L579.4,134.3 L577.8,153.3 L577.2,175.7 L576.2,175.7 L575.6,153.3 Z M574.0,247.5 L579.4,247.1 L577.8,232.5 L577.2,214.9 L576.2,214.9 L575.6,232.5 Z M581.4,134.1 L586.8,133.7 L585.2,149.7 L584.6,168.5 L583.6,168.5 L583.0,149.7 Z M581.4,246.9 L586.8,246.5 L585.2,229.7 L584.6,209.6 L583.6,209.6 L583.0,229.7 Z M588.8,133.5 L594.2,133.1 L592.6,151.3 L592.0,172.6 L591.0,172.6 L590.4,151.3 Z M588.8,246.3 L594.2,245.9 L592.6,225.6 L592.0,201.1 L591.0,201.1 L590.4,225.6 Z M596.2,132.9 L601.6,132.5 L600.0,157.0 L599.4,186.0 L598.4,186.0 L597.8,157.0 Z M596.2,245.8 L601.6,245.3 L600.0,227.1 L599.4,205.2 L598.4,205.2 L597.8,227.1 Z M603.6,132.4 L609.0,132.0 L607.4,156.3 L606.8,185.1 L605.8,185.1 L605.2,156.3 Z M603.6,245.2 L609.0,244.8 L607.4,222.0 L606.8,194.4 L605.8,194.4 L605.2,222.0 Z M611.1,131.8 L616.5,131.5 L614.9,155.9 L614.3,184.9 L613.3,184.9 L612.7,155.9 Z M611.1,244.7 L616.5,244.3 L614.9,226.8 L614.3,205.7 L613.3,205.7 L612.7,226.8 Z M618.5,131.3 L623.9,130.9 L622.3,148.7 L621.7,169.6 L620.7,169.6 L620.1,148.7 Z M618.5,244.1 L623.9,243.8 L622.3,227.4 L621.7,207.8 L620.7,207.8 L620.1,227.4 Z M625.9,130.8 L631.3,130.4 L629.7,148.0 L629.1,168.6 L628.1,168.6 L627.5,148.0 Z M625.9,243.6 L631.3,243.3 L629.7,227.1 L629.1,207.7 L628.1,207.7 L627.5,227.1 Z M633.3,130.3 L638.7,129.9 L637.1,151.4 L636.5,176.7 L635.5,176.7 L634.9,151.4 Z M633.3,243.1 L638.7,242.8 L637.1,220.7 L636.5,194.0 L635.5,194.0 L634.9,220.7 Z M640.7,129.8 L646.1,129.5 L644.5,152.9 L643.9,180.6 L642.9,180.6 L642.3,152.9 Z M640.7,242.7 L646.1,242.3 L644.5,223.8 L643.9,201.6 L642.9,201.6 L642.3,223.8 Z M648.2,129.3 L653.6,129.0 L652.0,150.7 L651.4,176.4 L650.4,176.4 L649.8,150.7 Z M648.2,242.2 L653.6,241.9 L652.0,220.6 L651.4,195.0 L650.4,195.0 L649.8,220.6 Z M655.6,128.9 L661.0,128.6 L659.4,145.1 L658.8,164.5 L657.8,164.5 L657.2,145.1 Z M655.6,241.7 L661.0,241.4 L659.4,221.3 L658.8,197.2 L657.8,197.2 L657.2,221.3 Z M663.0,128.4 L668.4,128.1 L666.8,152.1 L666.2,180.7 L665.2,180.7 L664.6,152.1 Z M663.0,241.3 L668.4,241.0 L666.8,219.9 L666.2,194.5 L665.2,194.5 L664.6,219.9 Z M670.4,128.0 L675.8,127.7 L674.2,150.3 L673.6,177.0 L672.6,177.0 L672.0,150.3 Z M670.4,240.9 L675.8,240.6 L674.2,222.0 L673.6,199.8 L672.6,199.8 L672.0,222.0 Z M677.8,127.6 L683.2,127.3 L681.6,144.7 L681.0,165.1 L680.0,165.1 L679.4,144.7 Z M677.8,240.5 L683.2,240.2 L681.6,219.0 L681.0,193.5 L680.0,193.5 L679.4,219.0 Z M685.3,127.2 L690.7,126.9 L689.1,145.7 L688.5,167.8 L687.5,167.8 L686.9,145.7 Z M685.3,240.1 L690.7,239.8 L689.1,218.5 L688.5,192.9 L687.5,192.9 L686.9,218.5 Z M692.7,126.8 L698.1,126.5 L696.5,151.1 L695.9,180.3 L694.9,180.3 L694.3,151.1 Z M692.7,239.7 L698.1,239.4 L696.5,221.6 L695.9,200.2 L694.9,200.2 L694.3,221.6 Z M700.1,126.4 L705.5,126.1 L703.9,145.5 L703.3,168.4 L702.3,168.4 L701.7,145.5 Z M700.1,239.3 L705.5,239.0 L703.9,216.5 L703.3,189.3 L702.3,189.3 L701.7,216.5 Z M707.5,126.0 L712.9,125.8 L711.3,148.1 L710.7,174.6 L709.7,174.6 L709.1,148.1 Z M707.5,238.9 L712.9,238.7 L711.3,222.8 L710.7,203.7 L709.7,203.7 L709.1,222.8 Z M714.9,125.7 L720.3,125.4 L718.7,142.3 L718.1,162.2 L717.1,162.2 L716.5,142.3 Z M714.9,238.6 L720.3,238.3 L718.7,222.6 L718.1,203.7 L717.1,203.7 L716.5,222.6 Z M722.4,125.3 L727.8,125.1 L726.2,149.0 L725.6,177.5 L724.6,177.5 L724.0,149.0 Z M722.4,238.2 L727.8,238.0 L726.2,216.6 L725.6,190.9 L724.6,190.9 L724.0,216.6 Z M729.8,125.0 L735.2,124.7 L733.6,141.8 L733.0,161.9 L732.0,161.9 L731.4,141.8 Z M729.8,237.9 L735.2,237.7 L733.6,216.1 L733.0,190.2 L732.0,190.2 L731.4,216.1 Z M737.2,124.6 L742.6,124.4 L741.0,149.0 L740.4,178.4 L739.4,178.4 L738.8,149.0 Z M737.2,237.6 L742.6,237.4 L741.0,217.2 L740.4,193.1 L739.4,193.1 L738.8,217.2 Z M744.6,124.3 L750.0,124.1 L748.4,143.0 L747.8,165.3 L746.8,165.3 L746.2,143.0 Z M744.6,237.3 L750.0,237.0 L748.4,217.8 L747.8,194.9 L746.8,194.9 L746.2,217.8 Z M752.0,124.0 L757.4,123.8 L755.8,140.7 L755.2,160.6 L754.2,160.6 L753.6,140.7 Z M752.0,237.0 L757.4,236.7 L755.8,222.1 L755.2,204.7 L754.2,204.7 L753.6,222.1 Z M759.5,123.7 L764.9,123.5 L763.3,148.0 L762.7,177.2 L761.7,177.2 L761.1,148.0 Z M759.5,236.7 L764.9,236.5 L763.3,216.4 L762.7,192.3 L761.7,192.3 L761.1,216.4 Z M766.9,123.4 L772.3,123.2 L770.7,143.7 L770.1,168.0 L769.1,168.0 L768.5,143.7 Z M766.9,236.4 L772.3,236.2 L770.7,213.7 L770.1,186.6 L769.1,186.6 L768.5,213.7 Z M774.3,123.1 L779.7,122.9 L778.1,142.6 L777.5,165.8 L776.5,165.8 L775.9,142.6 Z M774.3,236.1 L779.7,235.9 L778.1,213.9 L777.5,187.5 L776.5,187.5 L775.9,213.9 Z M781.7,122.8 L787.1,122.6 L785.5,145.8 L784.9,173.5 L783.9,173.5 L783.3,145.8 Z M781.7,235.8 L787.1,235.6 L785.5,219.3 L784.9,199.8 L783.9,199.8 L783.3,219.3 Z M789.1,122.5 L794.5,122.4 L792.9,140.4 L792.3,161.6 L791.3,161.6 L790.7,140.4 Z M789.1,235.6 L794.5,235.4 L792.9,218.3 L792.3,198.0 L791.3,198.0 L790.7,218.3 Z M796.6,122.3 L802.0,122.1 L800.4,140.0 L799.8,161.1 L798.8,161.1 L798.2,140.0 Z M796.6,235.3 L802.0,235.1 L800.4,215.6 L799.8,192.2 L798.8,192.2 L798.2,215.6 Z M804.0,122.0 L809.4,121.8 L807.8,139.9 L807.2,161.3 L806.2,161.3 L805.6,139.9 Z M804.0,235.1 L809.4,234.9 L807.8,216.8 L807.2,195.1 L806.2,195.1 L805.6,216.8 Z M811.4,121.8 L816.8,121.6 L815.2,138.5 L814.6,158.4 L813.6,158.4 L813.0,138.5 Z M811.4,234.8 L816.8,234.6 L815.2,212.3 L814.6,185.5 L813.6,185.5 L813.0,212.3 Z M818.8,121.5 L824.2,121.4 L822.6,140.3 L822.0,162.7 L821.0,162.7 L820.4,140.3 Z M818.8,234.6 L824.2,234.4 L822.6,216.0 L822.0,193.9 L821.0,193.9 L820.4,216.0 Z M826.2,121.3 L831.6,121.1 L830.0,142.1 L829.4,167.1 L828.4,167.1 L827.8,142.1 Z M826.2,234.4 L831.6,234.2 L830.0,211.9 L829.4,185.2 L828.4,185.2 L827.8,211.9 Z M833.7,121.1 L839.1,120.9 L837.5,140.4 L836.9,163.6 L835.9,163.6 L835.3,140.4 Z M833.7,234.1 L839.1,234.0 L837.5,211.6 L836.9,184.7 L835.9,184.7 L835.3,211.6 Z M841.1,120.8 L846.5,120.7 L844.9,140.9 L844.3,165.0 L843.3,165.0 L842.7,140.9 Z M841.1,233.9 L846.5,233.8 L844.9,214.7 L844.3,191.8 L843.3,191.8 L842.7,214.7 Z M848.5,120.6 L853.9,120.5 L852.3,140.9 L851.7,165.2 L850.7,165.2 L850.1,140.9 Z M848.5,233.7 L853.9,233.6 L852.3,218.9 L851.7,201.4 L850.7,201.4 L850.1,218.9 Z M855.9,120.4 L861.3,120.3 L859.7,140.0 L859.1,163.3 L858.1,163.3 L857.5,140.0 Z M855.9,233.5 L861.3,233.4 L859.7,217.2 L859.1,198.1 L858.1,198.1 L857.5,217.2 Z M863.3,120.2 L868.7,120.1 L867.1,135.8 L866.5,154.3 L865.5,154.3 L864.9,135.8 Z M863.3,233.3 L868.7,233.2 L867.1,211.8 L866.5,186.1 L865.5,186.1 L864.9,211.8 Z M870.8,120.0 L876.2,119.9 L874.6,137.1 L874.0,157.5 L873.0,157.5 L872.4,137.1 Z M870.8,233.1 L876.2,233.0 L874.6,214.4 L874.0,192.1 L873.0,192.1 L872.4,214.4 Z M878.2,119.8 L883.6,119.7 L882.0,142.0 L881.4,168.5 L880.4,168.5 L879.8,142.0 Z M878.2,232.9 L883.6,232.8 L882.0,213.5 L881.4,190.4 L880.4,190.4 L879.8,213.5 Z M885.6,119.6 L891.0,119.5 L889.4,138.1 L888.8,160.3 L887.8,160.3 L887.2,138.1 Z M885.6,232.8 L891.0,232.6 L889.4,213.6 L888.8,190.9 L887.8,190.9 L887.2,213.6 Z M893.0,119.4 L898.4,119.3 L896.8,140.0 L896.2,164.7 L895.2,164.7 L894.6,140.0 Z M893.0,232.6 L898.4,232.5 L896.8,211.2 L896.2,185.7 L895.2,185.7 L894.6,211.2 Z M900.4,119.2 L905.8,119.1 L904.2,135.8 L903.6,155.5 L902.6,155.5 L902.0,135.8 Z M900.4,232.4 L905.8,232.3 L904.2,212.9 L903.6,189.8 L902.6,189.8 L902.0,212.9 Z M907.9,119.1 L913.3,118.9 L911.7,136.9 L911.1,158.2 L910.1,158.2 L909.5,136.9 Z M907.9,232.3 L913.3,232.1 L911.7,215.2 L911.1,195.0 L910.1,195.0 L909.5,215.2 Z M915.3,118.9 L920.7,118.8 L919.1,141.5 L918.5,168.6 L917.5,168.6 L916.9,141.5 Z M915.3,232.1 L920.7,232.0 L919.1,213.1 L918.5,190.4 L917.5,190.4 L916.9,213.1 Z M922.7,118.7 L928.1,118.6 L926.5,139.4 L925.9,164.2 L924.9,164.2 L924.3,139.4 Z M922.7,232.0 L928.1,231.8 L926.5,210.7 L925.9,185.5 L924.9,185.5 L924.3,210.7 Z M930.1,118.6 L935.5,118.5 L933.9,142.5 L933.3,171.1 L932.3,171.1 L931.7,142.5 Z M930.1,231.8 L935.5,231.7 L933.9,213.3 L933.3,191.4 L932.3,191.4 L931.7,213.3 Z M937.5,118.4 L942.9,118.3 L941.3,139.6 L940.7,164.9 L939.7,164.9 L939.1,139.6 Z M937.5,231.7 L942.9,231.6 L941.3,212.6 L940.7,190.0 L939.7,190.0 L939.1,212.6 Z M945.0,118.3 L950.4,118.2 L948.8,138.5 L948.2,162.7 L947.2,162.7 L946.6,138.5 Z M945.0,231.5 L950.4,231.4 L948.8,210.9 L948.2,186.3 L947.2,186.3 L946.6,210.9 Z M952.4,118.1 L957.8,118.0 L956.2,137.8 L955.6,161.4 L954.6,161.4 L954.0,137.8 Z M952.4,231.4 L957.8,231.3 L956.2,212.1 L955.6,189.2 L954.6,189.2 L954.0,212.1 Z M959.8,118.0 L965.2,117.9 L963.6,137.9 L963.0,161.8 L962.0,161.8 L961.4,137.9 Z M959.8,231.2 L965.2,231.2 L963.6,208.5 L963.0,181.3 L962.0,181.3 L961.4,208.5 Z M967.2,117.8 L972.6,117.7 L971.0,139.8 L970.4,166.1 L969.4,166.1 L968.8,139.8 Z M967.2,231.1 L972.6,231.0 L971.0,208.9 L970.4,182.4 L969.4,182.4 L968.8,208.9 Z M974.6,117.7 L980.0,117.6 L978.4,141.9 L977.8,170.9 L976.8,170.9 L976.2,141.9 Z M974.6,231.0 L980.0,230.9 L978.4,214.1 L977.8,194.0 L976.8,194.0 L976.2,214.1 Z M982.1,117.6 L987.5,117.5 L985.9,138.3 L985.3,163.0 L984.3,163.0 L983.7,138.3 Z M982.1,230.9 L987.5,230.8 L985.9,208.1 L985.3,180.9 L984.3,180.9 L983.7,208.1 Z M989.5,117.4 L994.9,117.3 L993.3,140.7 L992.7,168.6 L991.7,168.6 L991.1,140.7 Z M989.5,230.8 L994.9,230.7 L993.3,214.9 L992.7,196.1 L991.7,196.1 L991.1,214.9 Z M996.9,117.3 L1002.3,117.2 L1000.7,134.0 L1000.1,153.9 L999.1,153.9 L998.5,134.0 Z M996.9,230.6 L1002.3,230.6 L1000.7,212.1 L1000.1,190.2 L999.1,190.2 L998.5,212.1 Z M1004.3,117.2 L1009.7,117.1 L1008.1,133.5 L1007.5,152.8 L1006.5,152.8 L1005.9,133.5 Z M1004.3,230.5 L1009.7,230.5 L1008.1,213.8 L1007.5,193.9 L1006.5,193.9 L1005.9,213.8 Z M1011.7,117.1 L1017.1,117.0 L1015.5,133.3 L1014.9,152.7 L1013.9,152.7 L1013.3,133.3 Z M1011.7,230.4 L1017.1,230.3 L1015.5,210.0 L1014.9,185.6 L1013.9,185.6 L1013.3,210.0 Z M1019.2,116.9 L1024.6,116.8 L1023.0,139.7 L1022.4,167.0 L1021.4,167.0 L1020.8,139.7 Z M1019.2,230.3 L1024.6,230.2 L1023.0,207.9 L1022.4,181.2 L1021.4,181.2 L1020.8,207.9 Z M1026.6,116.8 L1032.0,116.7 L1030.4,133.9 L1029.8,154.1 L1028.8,154.1 L1028.2,133.9 Z M1026.6,230.2 L1032.0,230.1 L1030.4,209.4 L1029.8,184.5 L1028.8,184.5 L1028.2,209.4 Z M1034.0,116.7 L1039.4,116.6 L1037.8,138.4 L1037.2,164.3 L1036.2,164.3 L1035.6,138.4 Z M1034.0,230.1 L1039.4,230.1 L1037.8,214.2 L1037.2,195.4 L1036.2,195.4 L1035.6,214.2 Z M1041.4,116.6 L1046.8,116.5 L1045.2,140.3 L1044.6,168.7 L1043.6,168.7 L1043.0,140.3 Z M1041.4,230.0 L1046.8,230.0 L1045.2,207.0 L1044.6,179.5 L1043.6,179.5 L1043.0,207.0 Z M1048.8,116.5 L1054.2,116.4 L1052.6,134.1 L1052.0,155.1 L1051.0,155.1 L1050.4,134.1 Z M1048.8,229.9 L1054.2,229.9 L1052.6,207.0 L1052.0,179.7 L1051.0,179.7 L1050.4,207.0 Z M1056.3,116.4 L1061.7,116.3 L1060.1,135.7 L1059.5,158.7 L1058.5,158.7 L1057.9,135.7 Z M1056.3,229.8 L1061.7,229.8 L1060.1,210.9 L1059.5,188.5 L1058.5,188.5 L1057.9,210.9 Z M1063.7,116.3 L1069.1,116.2 L1067.5,141.0 L1066.9,170.5 L1065.9,170.5 L1065.3,141.0 Z M1063.7,229.8 L1069.1,229.7 L1067.5,207.9 L1066.9,181.8 L1065.9,181.8 L1065.3,207.9 Z M1071.1,116.2 L1076.5,116.1 L1074.9,133.3 L1074.3,153.7 L1073.3,153.7 L1072.7,133.3 Z M1071.1,229.7 L1076.5,229.6 L1074.9,211.3 L1074.3,189.4 L1073.3,189.4 L1072.7,211.3 Z M1078.5,116.1 L1083.9,116.0 L1082.3,136.4 L1081.7,160.8 L1080.7,160.8 L1080.1,136.4 Z M1078.5,229.6 L1083.9,229.5 L1082.3,212.0 L1081.7,191.1 L1080.7,191.1 L1080.1,212.0 Z M1085.9,116.0 L1091.3,115.9 L1089.7,133.4 L1089.1,154.2 L1088.1,154.2 L1087.5,133.4 Z M1085.9,229.5 L1091.3,229.5 L1089.7,212.1 L1089.1,191.4 L1088.1,191.4 L1087.5,212.1 Z M1093.4,115.9 L1098.8,115.8 L1097.2,138.2 L1096.6,164.8 L1095.6,164.8 L1095.0,138.2 Z M1093.4,229.4 L1098.8,229.4 L1097.2,214.6 L1096.6,197.0 L1095.6,197.0 L1095.0,214.6 Z M1100.8,115.8 L1106.2,115.8 L1104.6,136.5 L1104.0,161.3 L1103.0,161.3 L1102.4,136.5 Z M1100.8,229.4 L1106.2,229.3 L1104.6,210.9 L1104.0,188.9 L1103.0,188.9 L1102.4,210.9 Z M1108.2,115.7 L1113.6,115.7 L1112.0,131.6 L1111.4,150.3 L1110.4,150.3 L1109.8,131.6 Z M1108.2,229.3 L1113.6,229.2 L1112.0,211.7 L1111.4,190.9 L1110.4,190.9 L1109.8,211.7 Z M1115.6,115.6 L1121.0,115.6 L1119.4,137.0 L1118.8,162.5 L1117.8,162.5 L1117.2,137.0 Z M1115.6,229.2 L1121.0,229.2 L1119.4,210.1 L1118.8,187.4 L1117.8,187.4 L1117.2,210.1 Z M1123.0,115.6 L1128.4,115.5 L1126.8,131.8 L1126.2,151.1 L1125.2,151.1 L1124.6,131.8 Z M1123.0,229.1 L1128.4,229.1 L1126.8,206.0 L1126.2,178.2 L1125.2,178.2 L1124.6,206.0 Z M1130.5,115.5 L1135.9,115.4 L1134.3,138.3 L1133.7,165.7 L1132.7,165.7 L1132.1,138.3 Z M1130.5,229.1 L1135.9,229.0 L1134.3,206.0 L1133.7,178.4 L1132.7,178.4 L1132.1,206.0 Z M1137.9,115.4 L1143.3,115.4 L1141.7,132.0 L1141.1,151.8 L1140.1,151.8 L1139.5,132.0 Z M1137.9,229.0 L1143.3,229.0 L1141.7,212.0 L1141.1,191.9 L1140.1,191.9 L1139.5,212.0 Z M1145.3,115.3 L1150.7,115.3 L1149.1,131.4 L1148.5,150.4 L1147.5,150.4 L1146.9,131.4 Z M1145.3,229.0 L1150.7,228.9 L1149.1,207.5 L1148.5,182.0 L1147.5,182.0 L1146.9,207.5 Z M1152.7,115.3 L1158.1,115.2 L1156.5,133.4 L1155.9,155.0 L1154.9,155.0 L1154.3,133.4 Z M1152.7,228.9 L1158.1,228.8 L1156.5,213.1 L1155.9,194.3 L1154.9,194.3 L1154.3,213.1 Z M1160.1,115.2 L1165.5,115.1 L1163.9,134.7 L1163.3,158.0 L1162.3,158.0 L1161.7,134.7 Z M1160.1,228.8 L1165.5,228.8 L1163.9,206.3 L1163.3,179.3 L1162.3,179.3 L1161.7,206.3 Z M1167.6,115.1 L1173.0,115.1 L1171.4,138.3 L1170.8,166.0 L1169.8,166.0 L1169.2,138.3 Z M1167.6,228.8 L1173.0,228.7 L1171.4,211.8 L1170.8,191.8 L1169.8,191.8 L1169.2,211.8 Z M1175.0,115.0 L1180.4,115.0 L1178.8,132.1 L1178.2,152.3 L1177.2,152.3 L1176.6,132.1 Z M1175.0,228.7 L1180.4,228.7 L1178.8,206.1 L1178.2,179.0 L1177.2,179.0 L1176.6,206.1 Z" fill="#358a2e"/>
<polyline points="32.0,296.4 33.0,295.6 34.0,294.9 35.0,294.2 36.0,293.5 37.0,292.8 38.0,292.1 39.0,291.3 40.0,290.6 41.0,289.9 42.0,289.2 43.0,288.5 44.0,287.8 45.0,287.2 46.0,286.5 47.0,285.8 48.0,285.1 49.0,284.4 50.0,283.7 51.0,283.1 52.0,282.4 53.0,281.7 54.0,281.1 55.0,280.4 56.0,279.7 57.0,279.1 58.0,278.4 59.0,277.8 60.0,277.1 61.0,276.5 62.0,275.8 63.0,275.2 64.0,274.5 65.0,273.9 66.0,273.3 67.0,272.6 68.0,272.0 69.0,271.4 70.0,270.7 71.0,270.1 72.0,269.5 73.0,268.9 74.0,268.3 75.0,267.7 76.0,267.0 77.0,266.4 78.0,265.8 79.0,265.2 80.0,264.6 81.0,264.0 82.0,263.4 83.0,262.8 84.0,262.2 85.0,261.7 86.0,261.1 87.0,260.5 88.0,259.9 89.0,259.3 90.0,258.7 91.0,258.2 92.0,257.6 93.0,257.0 94.0,256.5 95.0,255.9 96.0,255.3 97.0,254.8 98.0,254.2 99.0,253.7 100.0,253.1 101.0,252.6 102.0,252.0 103.0,251.5 104.0,250.9 105.0,250.4 106.0,249.8 107.0,249.3 108.0,248.7 109.0,248.2 110.0,247.7 111.0,247.2 112.0,246.6 113.0,246.1 114.0,245.6 115.0,245.0 116.0,244.5 117.0,244.0 118.0,243.5 119.0,243.0 120.0,242.5 121.0,242.0 122.0,241.5 123.0,240.9 124.0,240.4 125.0,239.9 126.0,239.4 127.0,238.9 128.0,238.5 129.0,238.0 130.0,237.5 131.0,237.0 132.0,236.5 133.0,236.0 134.0,235.5 135.0,235.0 136.0,234.6 137.0,234.1 138.0,233.6 139.0,233.1 140.0,232.7 141.0,232.2 142.0,231.7 143.0,231.3 144.0,230.8 145.0,230.3 146.0,229.9 147.0,229.4 148.0,229.0 149.0,228.5 150.0,228.0 151.0,227.6 152.0,227.1 153.0,226.7 154.0,226.2 155.0,225.8 156.0,225.4 157.0,224.9 158.0,224.5 159.0,224.0 160.0,223.6 161.0,223.2 162.0,222.7 163.0,222.3 164.0,221.9 165.0,221.5 166.0,221.0 167.0,220.6 168.0,220.2 169.0,219.8 170.0,219.3 171.0,218.9 172.0,218.5 173.0,218.1 174.0,217.7 175.0,217.3 176.0,216.9 177.0,216.5 178.0,216.1 179.0,215.6 180.0,215.2 181.0,214.8 182.0,214.4 183.0,214.1 184.0,213.7 185.0,213.3 186.0,212.9 187.0,212.5 188.0,212.1 189.0,211.7 190.0,211.3 191.0,210.9 192.0,210.5 193.0,210.2 194.0,209.8 195.0,209.4 196.0,209.0 197.0,208.7 198.0,208.3 199.0,207.9 200.0,207.5 201.0,207.2 202.0,206.8 203.0,206.4 204.0,206.1 205.0,205.7 206.0,205.3 207.0,205.0 208.0,204.6 209.0,204.3 210.0,203.9 211.0,203.5 212.0,203.2 213.0,202.8 214.0,202.5 215.0,202.1 216.0,201.8 217.0,201.4 218.0,201.1 219.0,200.8 220.0,200.4 221.0,200.1 222.0,199.7 223.0,199.4 224.0,199.1 225.0,198.7 226.0,198.4 227.0,198.1 228.0,197.7 229.0,197.4 230.0,197.1 231.0,196.7 232.0,196.4 233.0,196.1 234.0,195.8 235.0,195.4 236.0,195.1 237.0,194.8 238.0,194.5 239.0,194.2 240.0,193.8 241.0,193.5 242.0,193.2 243.0,192.9 244.0,192.6 245.0,192.3 246.0,192.0 247.0,191.7 248.0,191.4 249.0,191.1 250.0,190.8 251.0,190.5 252.0,190.2 253.0,189.8 254.0,189.6 255.0,189.3 256.0,189.0 257.0,188.7 258.0,188.4 259.0,188.1 260.0,187.8 261.0,187.5 262.0,187.2 263.0,186.9 264.0,186.6 265.0,186.3 266.0,186.1 267.0,185.8 268.0,185.5 269.0,185.2 270.0,184.9 271.0,184.6 272.0,184.4 273.0,184.1 274.0,183.8 275.0,183.5 276.0,183.3 277.0,183.0 278.0,182.7 279.0,182.5 280.0,182.2 281.0,181.9 282.0,181.6 283.0,181.4 284.0,181.1 285.0,180.9 286.0,180.6 287.0,180.3 288.0,180.1 289.0,179.8 290.0,179.5 291.0,179.3 292.0,179.0 293.0,178.8 294.0,178.5 295.0,178.3 296.0,178.0 297.0,177.8 298.0,177.5 299.0,177.3 300.0,177.0 301.0,176.8 302.0,176.5 303.0,176.3 304.0,176.0 305.0,175.8 306.0,175.5 307.0,175.3 308.0,175.1 309.0,174.8 310.0,174.6 311.0,174.3 312.0,174.1 313.0,173.9 314.0,173.6 315.0,173.4 316.0,173.2 317.0,172.9 318.0,172.7 319.0,172.5 320.0,172.2 321.0,172.0 322.0,171.8 323.0,171.6 324.0,171.3 325.0,171.1 326.0,170.9 327.0,170.7 328.0,170.4 329.0,170.2 330.0,170.0 331.0,169.8 332.0,169.6 333.0,169.3 334.0,169.1 335.0,168.9 336.0,168.7 337.0,168.5 338.0,168.3 339.0,168.1 340.0,167.8 341.0,167.6 342.0,167.4 343.0,167.2 344.0,167.0 345.0,166.8 346.0,166.6 347.0,166.4 348.0,166.2 349.0,166.0 350.0,165.8 351.0,165.6 352.0,165.4 353.0,165.2 354.0,165.0 355.0,164.8 356.0,164.6 357.0,164.4 358.0,164.2 359.0,164.0 360.0,163.8 361.0,163.6 362.0,163.4 363.0,163.2 364.0,163.0 365.0,162.8 366.0,162.6 367.0,162.4 368.0,162.2 369.0,162.1 370.0,161.9 371.0,161.7 372.0,161.5 373.0,161.3 374.0,161.1 375.0,160.9 376.0,160.7 377.0,160.6 378.0,160.4 379.0,160.2 380.0,160.0 381.0,159.8 382.0,159.7 383.0,159.5 384.0,159.3 385.0,159.1 386.0,159.0 387.0,158.8 388.0,158.6 389.0,158.4 390.0,158.3 391.0,158.1 392.0,157.9 393.0,157.7 394.0,157.6 395.0,157.4 396.0,157.2 397.0,157.1 398.0,156.9 399.0,156.7 400.0,156.6 401.0,156.4 402.0,156.2 403.0,156.1 404.0,155.9 405.0,155.7 406.0,155.6 407.0,155.4 408.0,155.2 409.0,155.1 410.0,154.9 411.0,154.8 412.0,154.6 413.0,154.4 414.0,154.3 415.0,154.1 416.0,154.0 417.0,153.8 418.0,153.7 419.0,153.5 420.0,153.4 421.0,153.2 422.0,153.0 423.0,152.9 424.0,152.7 425.0,152.6 426.0,152.4 427.0,152.3 428.0,152.1 429.0,152.0 430.0,151.8 431.0,151.7 432.0,151.6 433.0,151.4 434.0,151.3 435.0,151.1 436.0,151.0 437.0,150.8 438.0,150.7 439.0,150.5 440.0,150.4 441.0,150.3 442.0,150.1 443.0,150.0 444.0,149.8 445.0,149.7 446.0,149.6 447.0,149.4 448.0,149.3 449.0,149.1 450.0,149.0 451.0,148.9 452.0,148.7 453.0,148.6 454.0,148.5 455.0,148.3 456.0,148.2 457.0,148.1 458.0,147.9 459.0,147.8 460.0,147.7 461.0,147.5 462.0,147.4 463.0,147.3 464.0,147.1 465.0,147.0 466.0,146.9 467.0,146.8 468.0,146.6 469.0,146.5 470.0,146.4 471.0,146.3 472.0,146.1 473.0,146.0 474.0,145.9 475.0,145.8 476.0,145.6 477.0,145.5 478.0,145.4 479.0,145.3 480.0,145.1 481.0,145.0 482.0,144.9 483.0,144.8 484.0,144.7 485.0,144.5 486.0,144.4 487.0,144.3 488.0,144.2 489.0,144.1 490.0,144.0 491.0,143.8 492.0,143.7 493.0,143.6 494.0,143.5 495.0,143.4 496.0,143.3 497.0,143.2 498.0,143.0 499.0,142.9 500.0,142.8 501.0,142.7 502.0,142.6 503.0,142.5 504.0,142.4 505.0,142.3 506.0,142.1 507.0,142.0 508.0,141.9 509.0,141.8 510.0,141.7 511.0,141.6 512.0,141.5 513.0,141.4 514.0,141.3 515.0,141.2 516.0,141.1 517.0,141.0 518.0,140.9 519.0,140.8 520.0,140.7 521.0,140.6 522.0,140.5 523.0,140.4 524.0,140.2 525.0,140.1 526.0,140.0 527.0,139.9 528.0,139.8 529.0,139.7 530.0,139.6 531.0,139.5 532.0,139.4 533.0,139.3 534.0,139.3 535.0,139.2 536.0,139.1 537.0,139.0 538.0,138.9 539.0,138.8 540.0,138.7 541.0,138.6 542.0,138.5 543.0,138.4 544.0,138.3 545.0,138.2 546.0,138.1 547.0,138.0 548.0,137.9 549.0,137.8 550.0,137.7 551.0,137.6 552.0,137.6 553.0,137.5 554.0,137.4 555.0,137.3 556.0,137.2 557.0,137.1 558.0,137.0 559.0,136.9 560.0,136.8 561.0,136.7 562.0,136.7 563.0,136.6 564.0,136.5 565.0,136.4 566.0,136.3 567.0,136.2 568.0,136.1 569.0,136.1 570.0,136.0 571.0,135.9 572.0,135.8 573.0,135.7 574.0,135.6 575.0,135.5 576.0,135.5 577.0,135.4 578.0,135.3 579.0,135.2 580.0,135.1 581.0,135.1 582.0,135.0 583.0,134.9 584.0,134.8 585.0,134.7 586.0,134.6 587.0,134.6 588.0,134.5 589.0,134.4 590.0,134.3 591.0,134.3 592.0,134.2 593.0,134.1 594.0,134.0 595.0,133.9 596.0,133.9 597.0,133.8 598.0,133.7 599.0,133.6 600.0,133.6 601.0,133.5 602.0,133.4 603.0,133.3 604.0,133.3 605.0,133.2 606.0,133.1 607.0,133.0 608.0,133.0 609.0,132.9 610.0,132.8 611.0,132.7 612.0,132.7 613.0,132.6 614.0,132.5 615.0,132.5 616.0,132.4 617.0,132.3 618.0,132.2 619.0,132.2 620.0,132.1 621.0,132.0 622.0,132.0 623.0,131.9 624.0,131.8 625.0,131.8 626.0,131.7 627.0,131.6 628.0,131.6 629.0,131.5 630.0,131.4 631.0,131.4 632.0,131.3 633.0,131.2 634.0,131.2 635.0,131.1 636.0,131.0 637.0,131.0 638.0,130.9 639.0,130.8 640.0,130.8 641.0,130.7 642.0,130.6 643.0,130.6 644.0,130.5 645.0,130.4 646.0,130.4 647.0,130.3 648.0,130.3 649.0,130.2 650.0,130.1 651.0,130.1 652.0,130.0 653.0,129.9 654.0,129.9 655.0,129.8 656.0,129.8 657.0,129.7 658.0,129.6 659.0,129.6 660.0,129.5 661.0,129.5 662.0,129.4 663.0,129.3 664.0,129.3 665.0,129.2 666.0,129.2 667.0,129.1 668.0,129.1 669.0,129.0 670.0,128.9 671.0,128.9 672.0,128.8 673.0,128.8 674.0,128.7 675.0,128.7 676.0,128.6 677.0,128.5 678.0,128.5 679.0,128.4 680.0,128.4 681.0,128.3 682.0,128.3 683.0,128.2 684.0,128.2 685.0,128.1 686.0,128.0 687.0,128.0 688.0,127.9 689.0,127.9 690.0,127.8 691.0,127.8 692.0,127.7 693.0,127.7 694.0,127.6 695.0,127.6 696.0,127.5 697.0,127.5 698.0,127.4 699.0,127.4 700.0,127.3 701.0,127.3 702.0,127.2 703.0,127.2 704.0,127.1 705.0,127.1 706.0,127.0 707.0,127.0 708.0,126.9 709.0,126.9 710.0,126.8 711.0,126.8 712.0,126.7 713.0,126.7 714.0,126.6 715.0,126.6 716.0,126.5 717.0,126.5 718.0,126.4 719.0,126.4 720.0,126.3 721.0,126.3 722.0,126.2 723.0,126.2 724.0,126.1 725.0,126.1 726.0,126.0 727.0,126.0 728.0,126.0 729.0,125.9 730.0,125.9 731.0,125.8 732.0,125.8 733.0,125.7 734.0,125.7 735.0,125.6 736.0,125.6 737.0,125.5 738.0,125.5 739.0,125.5 740.0,125.4 741.0,125.4 742.0,125.3 743.0,125.3 744.0,125.2 745.0,125.2 746.0,125.2 747.0,125.1 748.0,125.1 749.0,125.0 750.0,125.0 751.0,124.9 752.0,124.9 753.0,124.9 754.0,124.8 755.0,124.8 756.0,124.7 757.0,124.7 758.0,124.7 759.0,124.6 760.0,124.6 761.0,124.5 762.0,124.5 763.0,124.4 764.0,124.4 765.0,124.4 766.0,124.3 767.0,124.3 768.0,124.2 769.0,124.2 770.0,124.2 771.0,124.1 772.0,124.1 773.0,124.1 774.0,124.0 775.0,124.0 776.0,123.9 777.0,123.9 778.0,123.9 779.0,123.8 780.0,123.8 781.0,123.8 782.0,123.7 783.0,123.7 784.0,123.6 785.0,123.6 786.0,123.6 787.0,123.5 788.0,123.5 789.0,123.5 790.0,123.4 791.0,123.4 792.0,123.3 793.0,123.3 794.0,123.3 795.0,123.2 796.0,123.2 797.0,123.2 798.0,123.1 799.0,123.1 800.0,123.1 801.0,123.0 802.0,123.0 803.0,123.0 804.0,122.9 805.0,122.9 806.0,122.9 807.0,122.8 808.0,122.8 809.0,122.8 810.0,122.7 811.0,122.7 812.0,122.7 813.0,122.6 814.0,122.6 815.0,122.6 816.0,122.5 817.0,122.5 818.0,122.5 819.0,122.4 820.0,122.4 821.0,122.4 822.0,122.3 823.0,122.3 824.0,122.3 825.0,122.2 826.0,122.2 827.0,122.2 828.0,122.1 829.0,122.1 830.0,122.1 831.0,122.0 832.0,122.0 833.0,122.0 834.0,122.0 835.0,121.9 836.0,121.9 837.0,121.9 838.0,121.8 839.0,121.8 840.0,121.8 841.0,121.7 842.0,121.7 843.0,121.7 844.0,121.6 845.0,121.6 846.0,121.6 847.0,121.6 848.0,121.5 849.0,121.5 850.0,121.5 851.0,121.4 852.0,121.4 853.0,121.4 854.0,121.4 855.0,121.3 856.0,121.3 857.0,121.3 858.0,121.2 859.0,121.2 860.0,121.2 861.0,121.2 862.0,121.1 863.0,121.1 864.0,121.1 865.0,121.1 866.0,121.0 867.0,121.0 868.0,121.0 869.0,120.9 870.0,120.9 871.0,120.9 872.0,120.9 873.0,120.8 874.0,120.8 875.0,120.8 876.0,120.8 877.0,120.7 878.0,120.7 879.0,120.7 880.0,120.7 881.0,120.6 882.0,120.6 883.0,120.6 884.0,120.6 885.0,120.5 886.0,120.5 887.0,120.5 888.0,120.5 889.0,120.4 890.0,120.4 891.0,120.4 892.0,120.4 893.0,120.3 894.0,120.3 895.0,120.3 896.0,120.3 897.0,120.2 898.0,120.2 899.0,120.2 900.0,120.2 901.0,120.1 902.0,120.1 903.0,120.1 904.0,120.1 905.0,120.0 906.0,120.0 907.0,120.0 908.0,120.0 909.0,119.9 910.0,119.9 911.0,119.9 912.0,119.9 913.0,119.9 914.0,119.8 915.0,119.8 916.0,119.8 917.0,119.8 918.0,119.7 919.0,119.7 920.0,119.7 921.0,119.7 922.0,119.6 923.0,119.6 924.0,119.6 925.0,119.6 926.0,119.6 927.0,119.5 928.0,119.5 929.0,119.5 930.0,119.5 931.0,119.5 932.0,119.4 933.0,119.4 934.0,119.4 935.0,119.4 936.0,119.3 937.0,119.3 938.0,119.3 939.0,119.3 940.0,119.3 941.0,119.2 942.0,119.2 943.0,119.2 944.0,119.2 945.0,119.2 946.0,119.1 947.0,119.1 948.0,119.1 949.0,119.1 950.0,119.1 951.0,119.0 952.0,119.0 953.0,119.0 954.0,119.0 955.0,119.0 956.0,118.9 957.0,118.9 958.0,118.9 959.0,118.9 960.0,118.9 961.0,118.8 962.0,118.8 963.0,118.8 964.0,118.8 965.0,118.8 966.0,118.7 967.0,118.7 968.0,118.7 969.0,118.7 970.0,118.7 971.0,118.7 972.0,118.6 973.0,118.6 974.0,118.6 975.0,118.6 976.0,118.6 977.0,118.5 978.0,118.5 979.0,118.5 980.0,118.5 981.0,118.5 982.0,118.5 983.0,118.4 984.0,118.4 985.0,118.4 986.0,118.4 987.0,118.4 988.0,118.3 989.0,118.3 990.0,118.3 991.0,118.3 992.0,118.3 993.0,118.3 994.0,118.2 995.0,118.2 996.0,118.2 997.0,118.2 998.0,118.2 999.0,118.2 1000.0,118.1 1001.0,118.1 1002.0,118.1 1003.0,118.1 1004.0,118.1 1005.0,118.1 1006.0,118.0 1007.0,118.0 1008.0,118.0 1009.0,118.0 1010.0,118.0 1011.0,118.0 1012.0,117.9 1013.0,117.9 1014.0,117.9 1015.0,117.9 1016.0,117.9 1017.0,117.9 1018.0,117.9 1019.0,117.8 1020.0,117.8 1021.0,117.8 1022.0,117.8 1023.0,117.8 1024.0,117.8 1025.0,117.7 1026.0,117.7 1027.0,117.7 1028.0,117.7 1029.0,117.7 1030.0,117.7 1031.0,117.7 1032.0,117.6 1033.0,117.6 1034.0,117.6 1035.0,117.6 1036.0,117.6 1037.0,117.6 1038.0,117.5 1039.0,117.5 1040.0,117.5 1041.0,117.5 1042.0,117.5 1043.0,117.5 1044.0,117.5 1045.0,117.4 1046.0,117.4 1047.0,117.4 1048.0,117.4 1049.0,117.4 1050.0,117.4 1051.0,117.4 1052.0,117.3 1053.0,117.3 1054.0,117.3 1055.0,117.3 1056.0,117.3 1057.0,117.3 1058.0,117.3 1059.0,117.3 1060.0,117.2 1061.0,117.2 1062.0,117.2 1063.0,117.2 1064.0,117.2 1065.0,117.2 1066.0,117.2 1067.0,117.1 1068.0,117.1 1069.0,117.1 1070.0,117.1 1071.0,117.1 1072.0,117.1 1073.0,117.1 1074.0,117.1 1075.0,117.0 1076.0,117.0 1077.0,117.0 1078.0,117.0 1079.0,117.0 1080.0,117.0 1081.0,117.0 1082.0,116.9 1083.0,116.9 1084.0,116.9 1085.0,116.9 1086.0,116.9 1087.0,116.9 1088.0,116.9 1089.0,116.9 1090.0,116.9 1091.0,116.8 1092.0,116.8 1093.0,116.8 1094.0,116.8 1095.0,116.8 1096.0,116.8 1097.0,116.8 1098.0,116.8 1099.0,116.7 1100.0,116.7 1101.0,116.7 1102.0,116.7 1103.0,116.7 1104.0,116.7 1105.0,116.7 1106.0,116.7 1107.0,116.6 1108.0,116.6 1109.0,116.6 1110.0,116.6 1111.0,116.6 1112.0,116.6 1113.0,116.6 1114.0,116.6 1115.0,116.6 1116.0,116.5 1117.0,116.5 1118.0,116.5 1119.0,116.5 1120.0,116.5 1121.0,116.5 1122.0,116.5 1123.0,116.5 1124.0,116.5 1125.0,116.4 1126.0,116.4 1127.0,116.4 1128.0,116.4 1129.0,116.4 1130.0,116.4 1131.0,116.4 1132.0,116.4 1133.0,116.4 1134.0,116.3 1135.0,116.3 1136.0,116.3 1137.0,116.3 1138.0,116.3 1139.0,116.3 1140.0,116.3 1141.0,116.3 1142.0,116.3 1143.0,116.3 1144.0,116.2 1145.0,116.2 1146.0,116.2 1147.0,116.2 1148.0,116.2 1149.0,116.2 1150.0,116.2 1151.0,116.2 1152.0,116.2 1153.0,116.2 1154.0,116.1 1155.0,116.1 1156.0,116.1 1157.0,116.1 1158.0,116.1 1159.0,116.1 1160.0,116.1 1161.0,116.1 1162.0,116.1 1163.0,116.1 1164.0,116.0 1165.0,116.0 1166.0,116.0 1167.0,116.0 1168.0,116.0 1169.0,116.0 1170.0,116.0 1171.0,116.0 1172.0,116.0 1173.0,116.0 1174.0,115.9 1175.0,115.9 1176.0,115.9 1177.0,115.9 1178.0,115.9 1179.0,115.9 1180.0,115.9 1181.0,115.9 1182.0,115.9 1183.0,115.9 1184.0,115.9 1185.0,115.8 1185.3,115.8" fill="none" stroke="#358a2e" stroke-width="1"/>
<polyline points="147.0,341.4 148.0,340.7 149.0,340.2 150.0,339.7 151.0,339.3 152.0,338.8 153.0,338.4 154.0,337.9 155.0,337.5 156.0,337.0 157.0,336.6 158.0,336.1 159.0,335.7 160.0,335.3 161.0,334.8 162.0,334.4 163.0,333.9 164.0,333.5 165.0,333.1 166.0,332.7 167.0,332.2 168.0,331.8 169.0,331.4 170.0,330.9 171.0,330.5 172.0,330.1 173.0,329.7 174.0,329.3 175.0,328.9 176.0,328.4 177.0,328.0 178.0,327.6 179.0,327.2 180.0,326.8 181.0,326.4 182.0,326.0 183.0,325.6 184.0,325.2 185.0,324.8 186.0,324.4 187.0,324.0 188.0,323.6 189.0,323.2 190.0,322.8 191.0,322.4 192.0,322.1 193.0,321.7 194.0,321.3 195.0,320.9 196.0,320.5 197.0,320.1 198.0,319.8 199.0,319.4 200.0,319.0 201.0,318.6 202.0,318.3 203.0,317.9 204.0,317.5 205.0,317.2 206.0,316.8 207.0,316.4 208.0,316.1 209.0,315.7 210.0,315.3 211.0,315.0 212.0,314.6 213.0,314.3 214.0,313.9 215.0,313.6 216.0,313.2 217.0,312.9 218.0,312.5 219.0,312.2 220.0,311.8 221.0,311.5 222.0,311.1 223.0,310.8 224.0,310.4 225.0,310.1 226.0,309.8 227.0,309.4 228.0,309.1 229.0,308.8 230.0,308.4 231.0,308.1 232.0,307.8 233.0,307.4 234.0,307.1 235.0,306.8 236.0,306.5 237.0,306.1 238.0,305.8 239.0,305.5 240.0,305.2 241.0,304.9 242.0,304.5 243.0,304.2 244.0,303.9 245.0,303.6 246.0,303.3 247.0,303.0 248.0,302.7 249.0,302.4 250.0,302.0 251.0,301.7 252.0,301.4 253.0,301.1 254.0,300.8 255.0,300.5 256.0,300.2 257.0,299.9 258.0,299.6 259.0,299.3 260.0,299.0 261.0,298.7 262.0,298.5 263.0,298.2 264.0,297.9 265.0,297.6 266.0,297.3 267.0,297.0 268.0,296.7 269.0,296.4 270.0,296.2 271.0,295.9 272.0,295.6 273.0,295.3 274.0,295.0 275.0,294.8 276.0,294.5 277.0,294.2 278.0,293.9 279.0,293.7 280.0,293.4 281.0,293.1 282.0,292.8 283.0,292.6 284.0,292.3 285.0,292.0 286.0,291.8 287.0,291.5 288.0,291.3 289.0,291.0 290.0,290.7 291.0,290.5 292.0,290.2 293.0,290.0 294.0,289.7 295.0,289.4 296.0,289.2 297.0,288.9 298.0,288.7 299.0,288.4 300.0,288.2 301.0,287.9 302.0,287.7 303.0,287.4 304.0,287.2 305.0,286.9 306.0,286.7 307.0,286.4 308.0,286.2 309.0,286.0 310.0,285.7 311.0,285.5 312.0,285.2 313.0,285.0 314.0,284.8 315.0,284.5 316.0,284.3 317.0,284.1 318.0,283.8 319.0,283.6 320.0,283.4 321.0,283.1 322.0,282.9 323.0,282.7 324.0,282.4 325.0,282.2 326.0,282.0 327.0,281.8 328.0,281.5 329.0,281.3 330.0,281.1 331.0,280.9 332.0,280.7 333.0,280.4 334.0,280.2 335.0,280.0 336.0,279.8 337.0,279.6 338.0,279.4 339.0,279.1 340.0,278.9 341.0,278.7 342.0,278.5 343.0,278.3 344.0,278.1 345.0,277.9 346.0,277.7 347.0,277.5 348.0,277.2 349.0,277.0 350.0,276.8 351.0,276.6 352.0,276.4 353.0,276.2 354.0,276.0 355.0,275.8 356.0,275.6 357.0,275.4 358.0,275.2 359.0,275.0 360.0,274.8 361.0,274.6 362.0,274.4 363.0,274.2 364.0,274.0 365.0,273.9 366.0,273.7 367.0,273.5 368.0,273.3 369.0,273.1 370.0,272.9 371.0,272.7 372.0,272.5 373.0,272.3 374.0,272.2 375.0,272.0 376.0,271.8 377.0,271.6 378.0,271.4 379.0,271.2 380.0,271.0 381.0,270.9 382.0,270.7 383.0,270.5 384.0,270.3 385.0,270.2 386.0,270.0 387.0,269.8 388.0,269.6 389.0,269.4 390.0,269.3 391.0,269.1 392.0,268.9 393.0,268.8 394.0,268.6 395.0,268.4 396.0,268.2 397.0,268.1 398.0,267.9 399.0,267.7 400.0,267.6 401.0,267.4 402.0,267.2 403.0,267.1 404.0,266.9 405.0,266.7 406.0,266.6 407.0,266.4 408.0,266.2 409.0,266.1 410.0,265.9 411.0,265.8 412.0,265.6 413.0,265.4 414.0,265.3 415.0,265.1 416.0,265.0 417.0,264.8 418.0,264.7 419.0,264.5 420.0,264.3 421.0,264.2 422.0,264.0 423.0,263.9 424.0,263.7 425.0,263.6 426.0,263.4 427.0,263.3 428.0,263.1 429.0,263.0 430.0,262.8 431.0,262.7 432.0,262.5 433.0,262.4 434.0,262.2 435.0,262.1 436.0,262.0 437.0,261.8 438.0,261.7 439.0,261.5 440.0,261.4 441.0,261.2 442.0,261.1 443.0,261.0 444.0,260.8 445.0,260.7 446.0,260.5 447.0,260.4 448.0,260.3 449.0,260.1 450.0,260.0 451.0,259.8 452.0,259.7 453.0,259.6 454.0,259.4 455.0,259.3 456.0,259.2 457.0,259.0 458.0,258.9 459.0,258.8 460.0,258.6 461.0,258.5 462.0,258.4 463.0,258.2 464.0,258.1 465.0,258.0 466.0,257.9 467.0,257.7 468.0,257.6 469.0,257.5 470.0,257.4 471.0,257.2 472.0,257.1 473.0,257.0 474.0,256.8 475.0,256.7 476.0,256.6 477.0,256.5 478.0,256.4 479.0,256.2 480.0,256.1 481.0,256.0 482.0,255.9 483.0,255.8 484.0,255.6 485.0,255.5 486.0,255.4 487.0,255.3 488.0,255.2 489.0,255.0 490.0,254.9 491.0,254.8 492.0,254.7 493.0,254.6 494.0,254.5 495.0,254.3 496.0,254.2 497.0,254.1 498.0,254.0 499.0,253.9 500.0,253.8 501.0,253.7 502.0,253.6 503.0,253.4 504.0,253.3 505.0,253.2 506.0,253.1 507.0,253.0 508.0,252.9 509.0,252.8 510.0,252.7 511.0,252.6 512.0,252.5 513.0,252.4 514.0,252.3 515.0,252.2 516.0,252.0 517.0,251.9 518.0,251.8 519.0,251.7 520.0,251.6 521.0,251.5 522.0,251.4 523.0,251.3 524.0,251.2 525.0,251.1 526.0,251.0 527.0,250.9 528.0,250.8 529.0,250.7 530.0,250.6 531.0,250.5 532.0,250.4 533.0,250.3 534.0,250.2 535.0,250.1 536.0,250.0 537.0,249.9 538.0,249.8 539.0,249.7 540.0,249.6 541.0,249.6 542.0,249.5 543.0,249.4 544.0,249.3 545.0,249.2 546.0,249.1 547.0,249.0 548.0,248.9 549.0,248.8 550.0,248.7 551.0,248.6 552.0,248.5 553.0,248.4 554.0,248.4 555.0,248.3 556.0,248.2 557.0,248.1 558.0,248.0 559.0,247.9 560.0,247.8 561.0,247.7 562.0,247.6 563.0,247.6 564.0,247.5 565.0,247.4 566.0,247.3 567.0,247.2 568.0,247.1 569.0,247.0 570.0,247.0 571.0,246.9 572.0,246.8 573.0,246.7 574.0,246.6 575.0,246.5 576.0,246.5 577.0,246.4 578.0,246.3 579.0,246.2 580.0,246.1 581.0,246.0 582.0,246.0 583.0,245.9 584.0,245.8 585.0,245.7 586.0,245.6 587.0,245.6 588.0,245.5 589.0,245.4 590.0,245.3 591.0,245.3 592.0,245.2 593.0,245.1 594.0,245.0 595.0,244.9 596.0,244.9 597.0,244.8 598.0,244.7 599.0,244.6 600.0,244.6 601.0,244.5 602.0,244.4 603.0,244.3 604.0,244.3 605.0,244.2 606.0,244.1 607.0,244.1 608.0,244.0 609.0,243.9 610.0,243.8 611.0,243.8 612.0,243.7 613.0,243.6 614.0,243.6 615.0,243.5 616.0,243.4 617.0,243.3 618.0,243.3 619.0,243.2 620.0,243.1 621.0,243.1 622.0,243.0 623.0,242.9 624.0,242.9 625.0,242.8 626.0,242.7 627.0,242.7 628.0,242.6 629.0,242.5 630.0,242.5 631.0,242.4 632.0,242.3 633.0,242.3 634.0,242.2 635.0,242.1 636.0,242.1 637.0,242.0 638.0,241.9 639.0,241.9 640.0,241.8 641.0,241.7 642.0,241.7 643.0,241.6 644.0,241.6 645.0,241.5 646.0,241.4 647.0,241.4 648.0,241.3 649.0,241.2 650.0,241.2 651.0,241.1 652.0,241.1 653.0,241.0 654.0,240.9 655.0,240.9 656.0,240.8 657.0,240.8 658.0,240.7 659.0,240.6 660.0,240.6 661.0,240.5 662.0,240.5 663.0,240.4 664.0,240.3 665.0,240.3 666.0,240.2 667.0,240.2 668.0,240.1 669.0,240.1 670.0,240.0 671.0,239.9 672.0,239.9 673.0,239.8 674.0,239.8 675.0,239.7 676.0,239.7 677.0,239.6 678.0,239.6 679.0,239.5 680.0,239.5 681.0,239.4 682.0,239.3 683.0,239.3 684.0,239.2 685.0,239.2 686.0,239.1 687.0,239.1 688.0,239.0 689.0,239.0 690.0,238.9 691.0,238.9 692.0,238.8 693.0,238.8 694.0,238.7 695.0,238.7 696.0,238.6 697.0,238.6 698.0,238.5 699.0,238.5 700.0,238.4 701.0,238.4 702.0,238.3 703.0,238.3 704.0,238.2 705.0,238.2 706.0,238.1 707.0,238.1 708.0,238.0 709.0,238.0 710.0,237.9 711.0,237.9 712.0,237.8 713.0,237.8 714.0,237.7 715.0,237.7 716.0,237.6 717.0,237.6 718.0,237.5 719.0,237.5 720.0,237.4 721.0,237.4 722.0,237.4 723.0,237.3 724.0,237.3 725.0,237.2 726.0,237.2 727.0,237.1 728.0,237.1 729.0,237.0 730.0,237.0 731.0,237.0 732.0,236.9 733.0,236.9 734.0,236.8 735.0,236.8 736.0,236.7 737.0,236.7 738.0,236.6 739.0,236.6 740.0,236.6 741.0,236.5 742.0,236.5 743.0,236.4 744.0,236.4 745.0,236.3 746.0,236.3 747.0,236.3 748.0,236.2 749.0,236.2 750.0,236.1 751.0,236.1 752.0,236.1 753.0,236.0 754.0,236.0 755.0,235.9 756.0,235.9 757.0,235.9 758.0,235.8 759.0,235.8 760.0,235.7 761.0,235.7 762.0,235.7 763.0,235.6 764.0,235.6 765.0,235.5 766.0,235.5 767.0,235.5 768.0,235.4 769.0,235.4 770.0,235.4 771.0,235.3 772.0,235.3 773.0,235.2 774.0,235.2 775.0,235.2 776.0,235.1 777.0,235.1 778.0,235.1 779.0,235.0 780.0,235.0 781.0,235.0 782.0,234.9 783.0,234.9 784.0,234.8 785.0,234.8 786.0,234.8 787.0,234.7 788.0,234.7 789.0,234.7 790.0,234.6 791.0,234.6 792.0,234.6 793.0,234.5 794.0,234.5 795.0,234.5 796.0,234.4 797.0,234.4 798.0,234.4 799.0,234.3 800.0,234.3 801.0,234.3 802.0,234.2 803.0,234.2 804.0,234.2 805.0,234.1 806.0,234.1 807.0,234.1 808.0,234.0 809.0,234.0 810.0,234.0 811.0,233.9 812.0,233.9 813.0,233.9 814.0,233.8 815.0,233.8 816.0,233.8 817.0,233.7 818.0,233.7 819.0,233.7 820.0,233.6 821.0,233.6 822.0,233.6 823.0,233.6 824.0,233.5 825.0,233.5 826.0,233.5 827.0,233.4 828.0,233.4 829.0,233.4 830.0,233.3 831.0,233.3 832.0,233.3 833.0,233.3 834.0,233.2 835.0,233.2 836.0,233.2 837.0,233.1 838.0,233.1 839.0,233.1 840.0,233.1 841.0,233.0 842.0,233.0 843.0,233.0 844.0,232.9 845.0,232.9 846.0,232.9 847.0,232.9 848.0,232.8 849.0,232.8 850.0,232.8 851.0,232.7 852.0,232.7 853.0,232.7 854.0,232.7 855.0,232.6 856.0,232.6 857.0,232.6 858.0,232.6 859.0,232.5 860.0,232.5 861.0,232.5 862.0,232.5 863.0,232.4 864.0,232.4 865.0,232.4 866.0,232.4 867.0,232.3 868.0,232.3 869.0,232.3 870.0,232.3 871.0,232.2 872.0,232.2 873.0,232.2 874.0,232.2 875.0,232.1 876.0,232.1 877.0,232.1 878.0,232.1 879.0,232.0 880.0,232.0 881.0,232.0 882.0,232.0 883.0,231.9 884.0,231.9 885.0,231.9 886.0,231.9 887.0,231.8 888.0,231.8 889.0,231.8 890.0,231.8 891.0,231.7 892.0,231.7 893.0,231.7 894.0,231.7 895.0,231.7 896.0,231.6 897.0,231.6 898.0,231.6 899.0,231.6 900.0,231.5 901.0,231.5 902.0,231.5 903.0,231.5 904.0,231.4 905.0,231.4 906.0,231.4 907.0,231.4 908.0,231.4 909.0,231.3 910.0,231.3 911.0,231.3 912.0,231.3 913.0,231.3 914.0,231.2 915.0,231.2 916.0,231.2 917.0,231.2 918.0,231.1 919.0,231.1 920.0,231.1 921.0,231.1 922.0,231.1 923.0,231.0 924.0,231.0 925.0,231.0 926.0,231.0 927.0,231.0 928.0,230.9 929.0,230.9 930.0,230.9 931.0,230.9 932.0,230.9 933.0,230.8 934.0,230.8 935.0,230.8 936.0,230.8 937.0,230.8 938.0,230.7 939.0,230.7 940.0,230.7 941.0,230.7 942.0,230.7 943.0,230.7 944.0,230.6 945.0,230.6 946.0,230.6 947.0,230.6 948.0,230.6 949.0,230.5 950.0,230.5 951.0,230.5 952.0,230.5 953.0,230.5 954.0,230.5 955.0,230.4 956.0,230.4 957.0,230.4 958.0,230.4 959.0,230.4 960.0,230.3 961.0,230.3 962.0,230.3 963.0,230.3 964.0,230.3 965.0,230.3 966.0,230.2 967.0,230.2 968.0,230.2 969.0,230.2 970.0,230.2 971.0,230.2 972.0,230.1 973.0,230.1 974.0,230.1 975.0,230.1 976.0,230.1 977.0,230.1 978.0,230.0 979.0,230.0 980.0,230.0 981.0,230.0 982.0,230.0 983.0,230.0 984.0,229.9 985.0,229.9 986.0,229.9 987.0,229.9 988.0,229.9 989.0,229.9 990.0,229.8 991.0,229.8 992.0,229.8 993.0,229.8 994.0,229.8 995.0,229.8 996.0,229.8 997.0,229.7 998.0,229.7 999.0,229.7 1000.0,229.7 1001.0,229.7 1002.0,229.7 1003.0,229.7 1004.0,229.6 1005.0,229.6 1006.0,229.6 1007.0,229.6 1008.0,229.6 1009.0,229.6 1010.0,229.6 1011.0,229.5 1012.0,229.5 1013.0,229.5 1014.0,229.5 1015.0,229.5 1016.0,229.5 1017.0,229.5 1018.0,229.4 1019.0,229.4 1020.0,229.4 1021.0,229.4 1022.0,229.4 1023.0,229.4 1024.0,229.4 1025.0,229.3 1026.0,229.3 1027.0,229.3 1028.0,229.3 1029.0,229.3 1030.0,229.3 1031.0,229.3 1032.0,229.2 1033.0,229.2 1034.0,229.2 1035.0,229.2 1036.0,229.2 1037.0,229.2 1038.0,229.2 1039.0,229.2 1040.0,229.1 1041.0,229.1 1042.0,229.1 1043.0,229.1 1044.0,229.1 1045.0,229.1 1046.0,229.1 1047.0,229.1 1048.0,229.0 1049.0,229.0 1050.0,229.0 1051.0,229.0 1052.0,229.0 1053.0,229.0 1054.0,229.0 1055.0,229.0 1056.0,228.9 1057.0,228.9 1058.0,228.9 1059.0,228.9 1060.0,228.9 1061.0,228.9 1062.0,228.9 1063.0,228.9 1064.0,228.9 1065.0,228.8 1066.0,228.8 1067.0,228.8 1068.0,228.8 1069.0,228.8 1070.0,228.8 1071.0,228.8 1072.0,228.8 1073.0,228.8 1074.0,228.7 1075.0,228.7 1076.0,228.7 1077.0,228.7 1078.0,228.7 1079.0,228.7 1080.0,228.7 1081.0,228.7 1082.0,228.7 1083.0,228.6 1084.0,228.6 1085.0,228.6 1086.0,228.6 1087.0,228.6 1088.0,228.6 1089.0,228.6 1090.0,228.6 1091.0,228.6 1092.0,228.5 1093.0,228.5 1094.0,228.5 1095.0,228.5 1096.0,228.5 1097.0,228.5 1098.0,228.5 1099.0,228.5 1100.0,228.5 1101.0,228.5 1102.0,228.4 1103.0,228.4 1104.0,228.4 1105.0,228.4 1106.0,228.4 1107.0,228.4 1108.0,228.4 1109.0,228.4 1110.0,228.4 1111.0,228.4 1112.0,228.3 1113.0,228.3 1114.0,228.3 1115.0,228.3 1116.0,228.3 1117.0,228.3 1118.0,228.3 1119.0,228.3 1120.0,228.3 1121.0,228.3 1122.0,228.3 1123.0,228.2 1124.0,228.2 1125.0,228.2 1126.0,228.2 1127.0,228.2 1128.0,228.2 1129.0,228.2 1130.0,228.2 1131.0,228.2 1132.0,228.2 1133.0,228.2 1134.0,228.1 1135.0,228.1 1136.0,228.1 1137.0,228.1 1138.0,228.1 1139.0,228.1 1140.0,228.1 1141.0,228.1 1142.0,228.1 1143.0,228.1 1144.0,228.1 1145.0,228.1 1146.0,228.0 1147.0,228.0 1148.0,228.0 1149.0,228.0 1150.0,228.0 1151.0,228.0 1152.0,228.0 1153.0,228.0 1154.0,228.0 1155.0,228.0 1156.0,228.0 1157.0,228.0 1158.0,227.9 1159.0,227.9 1160.0,227.9 1161.0,227.9 1162.0,227.9 1163.0,227.9 1164.0,227.9 1165.0,227.9 1166.0,227.9 1167.0,227.9 1168.0,227.9 1169.0,227.9 1170.0,227.9 1171.0,227.8 1172.0,227.8 1173.0,227.8 1174.0,227.8 1175.0,227.8 1176.0,227.8 1177.0,227.8 1178.0,227.8 1179.0,227.8 1180.0,227.8 1181.0,227.8 1182.0,227.8 1183.0,227.8 1184.0,227.8 1185.0,227.7 1185.3,227.7" fill="none" stroke="#358a2e" stroke-width="1"/>
<polygon points="32.0,350.2 33.0,350.1 34.0,350.0 35.0,349.9 36.0,349.8 37.0,349.7 38.0,349.7 39.0,349.6 40.0,349.5 41.0,349.4 42.0,349.3 43.0,349.2 44.0,349.1 45.0,349.0 46.0,348.9 47.0,348.8 48.0,348.7 49.0,348.7 50.0,348.6 51.0,348.5 52.0,348.4 53.0,348.3 54.0,348.2 55.0,348.1 56.0,348.0 57.0,347.9 58.0,347.9 59.0,347.8 60.0,347.7 61.0,347.6 62.0,347.5 63.0,347.4 64.0,347.3 65.0,347.3 66.0,347.2 67.0,347.1 68.0,347.0 69.0,346.9 70.0,346.8 71.0,346.7 72.0,346.7 73.0,346.6 74.0,346.5 75.0,346.4 76.0,346.3 77.0,346.2 78.0,346.2 79.0,346.1 80.0,346.0 81.0,345.9 82.0,345.8 83.0,345.8 84.0,345.7 85.0,345.6 86.0,345.5 87.0,345.4 88.0,345.4 89.0,345.3 90.0,345.2 91.0,345.1 92.0,345.0 93.0,345.0 94.0,344.9 95.0,344.8 96.0,344.7 97.0,344.7 98.0,344.6 99.0,344.5 100.0,344.4 101.0,344.4 102.0,344.3 103.0,344.2 104.0,344.1 105.0,344.1 106.0,344.0 107.0,343.9 108.0,343.9 109.0,343.8 110.0,343.7 111.0,343.7 112.0,343.6 113.0,343.5 114.0,343.4 115.0,343.4 116.0,343.3 117.0,343.2 118.0,343.2 119.0,343.1 120.0,343.0 121.0,343.0 122.0,342.9 123.0,342.9 124.0,342.8 125.0,342.7 126.0,342.7 127.0,342.6 128.0,342.5 129.0,342.5 130.0,342.4 131.0,342.4 132.0,342.3 133.0,342.3 134.0,342.2 135.0,342.1 136.0,342.1 137.0,342.0 138.0,342.0 139.0,341.9 140.0,341.9 141.0,341.8 142.0,341.8 143.0,341.7 144.0,341.7 145.0,341.6 146.0,341.5 147.0,341.5 148.0,341.5 149.0,341.4 150.0,341.4 151.0,341.4 152.0,341.3 153.0,341.3 154.0,341.3 155.0,341.2 156.0,341.2 157.0,341.1 158.0,341.1 159.0,341.1 160.0,341.0 161.0,341.0 162.0,341.0 163.0,340.9 164.0,340.9 165.0,340.9 166.0,340.9 167.0,340.8 168.0,340.8 169.0,340.8 170.0,340.7 171.0,340.7 172.0,340.7 173.0,340.6 174.0,340.6 175.0,340.6 176.0,340.5 177.0,340.5 178.0,340.5 179.0,340.5 180.0,340.4 181.0,340.4 182.0,340.4 183.0,340.3 184.0,340.3 185.0,340.3 186.0,340.3 187.0,340.2 188.0,340.2 189.0,340.2 190.0,340.1 191.0,340.1 192.0,340.1 193.0,340.1 194.0,340.0 195.0,340.0 196.0,340.0 197.0,339.9 198.0,339.9 199.0,339.9 200.0,339.9 201.0,339.8 202.0,339.8 203.0,339.8 204.0,339.8 205.0,339.7 206.0,339.7 207.0,339.7 208.0,339.7 209.0,339.6 210.0,339.6 211.0,339.6 212.0,339.6 213.0,339.5 214.0,339.5 215.0,339.5 216.0,339.5 217.0,339.4 218.0,339.4 219.0,339.4 220.0,339.4 221.0,339.4 222.0,339.3 223.0,339.3 224.0,339.3 225.0,339.3 226.0,339.2 227.0,339.2 228.0,339.2 229.0,339.2 230.0,339.1 231.0,339.1 232.0,339.1 233.0,339.1 234.0,339.1 235.0,339.0 236.0,339.0 237.0,339.0 238.0,339.0 239.0,338.9 240.0,338.9 241.0,338.9 242.0,338.9 243.0,338.9 244.0,338.8 245.0,338.8 246.0,338.8 247.0,338.8 248.0,338.8 249.0,338.7 250.0,338.7 251.0,338.7 252.0,338.7 253.0,338.7 254.0,338.6 255.0,338.6 256.0,338.6 257.0,338.6 258.0,338.5 259.0,338.5 260.0,338.5 261.0,338.5 262.0,338.5 263.0,338.4 264.0,338.4 265.0,338.4 266.0,338.4 267.0,338.4 268.0,338.3 269.0,338.3 270.0,338.3 271.0,338.3 272.0,338.3 273.0,338.2 274.0,338.2 275.0,338.2 276.0,338.2 277.0,338.2 278.0,338.1 279.0,338.1 280.0,338.1 281.0,338.1 282.0,338.1 283.0,338.0 284.0,338.0 285.0,338.0 286.0,338.0 287.0,338.0 288.0,337.9 289.0,337.9 290.0,337.9 291.0,337.9 292.0,337.9 293.0,337.8 294.0,337.8 295.0,337.8 296.0,337.8 297.0,337.8 298.0,337.7 299.0,337.7 300.0,337.7 301.0,337.7 302.0,337.7 303.0,337.6 304.0,337.6 305.0,337.6 306.0,337.6 307.0,337.6 308.0,337.5 309.0,337.5 310.0,337.5 311.0,337.5 312.0,337.5 313.0,337.4 314.0,337.4 315.0,337.4 316.0,337.4 317.0,337.4 318.0,337.3 319.0,337.3 320.0,337.3 321.0,337.3 322.0,337.3 323.0,337.2 324.0,337.2 325.0,337.2 326.0,337.2 327.0,337.2 328.0,337.1 329.0,337.1 330.0,337.1 331.0,337.1 332.0,337.1 333.0,337.0 334.0,337.0 335.0,337.0 336.0,337.0 337.0,337.0 338.0,336.9 339.0,336.9 340.0,336.9 341.0,336.9 342.0,336.9 343.0,336.8 344.0,336.8 345.0,336.8 346.0,336.8 347.0,336.8 348.0,336.7 349.0,336.7 350.0,336.7 351.0,336.7 352.0,336.7 353.0,336.7 354.0,336.6 355.0,336.6 356.0,336.6 357.0,336.6 358.0,336.6 359.0,336.5 360.0,336.5 361.0,336.5 362.0,336.5 363.0,336.5 364.0,336.4 365.0,336.4 366.0,336.4 367.0,336.4 368.0,336.4 369.0,336.4 370.0,336.3 371.0,336.3 372.0,336.3 373.0,336.3 374.0,336.3 375.0,336.3 376.0,336.2 377.0,336.2 378.0,336.2 379.0,336.2 380.0,336.2 381.0,336.1 382.0,336.1 383.0,336.1 384.0,336.1 385.0,336.1 386.0,336.1 387.0,336.0 388.0,336.0 389.0,336.0 390.0,336.0 391.0,336.0 392.0,336.0 393.0,335.9 394.0,335.9 395.0,335.9 396.0,335.9 397.0,335.9 398.0,335.9 399.0,335.8 400.0,335.8 401.0,335.8 402.0,335.8 403.0,335.8 404.0,335.8 405.0,335.7 406.0,335.7 407.0,335.7 408.0,335.7 409.0,335.7 410.0,335.7 411.0,335.6 412.0,335.6 413.0,335.6 414.0,335.6 415.0,335.6 416.0,335.6 417.0,335.6 418.0,335.5 419.0,335.5 420.0,335.5 421.0,335.5 422.0,335.5 423.0,335.5 424.0,335.5 425.0,335.4 426.0,335.4 427.0,335.4 428.0,335.4 429.0,335.4 430.0,335.4 431.0,335.4 432.0,335.3 433.0,335.3 434.0,335.3 435.0,335.3 436.0,335.3 437.0,335.3 438.0,335.3 439.0,335.2 440.0,335.2 441.0,335.2 442.0,335.2 443.0,335.2 444.0,335.2 445.0,335.2 446.0,335.2 447.0,335.1 448.0,335.1 449.0,335.1 450.0,335.1 451.0,335.1 452.0,335.1 453.0,335.1 454.0,335.1 455.0,335.0 456.0,335.0 457.0,335.0 458.0,335.0 459.0,335.0 460.0,335.0 461.0,335.0 462.0,335.0 463.0,334.9 464.0,334.9 465.0,334.9 466.0,334.9 467.0,334.9 468.0,334.9 469.0,334.9 470.0,334.8 471.0,334.8 472.0,334.8 473.0,334.8 474.0,334.8 475.0,334.8 476.0,334.8 477.0,334.8 478.0,334.7 479.0,334.7 480.0,334.7 481.0,334.7 482.0,334.7 483.0,334.7 484.0,334.7 485.0,334.7 486.0,334.7 487.0,334.6 488.0,334.6 489.0,334.6 490.0,334.6 491.0,334.6 492.0,334.6 493.0,334.6 494.0,334.6 495.0,334.5 496.0,334.5 497.0,334.5 498.0,334.5 499.0,334.5 500.0,334.5 501.0,334.5 502.0,334.5 503.0,334.4 504.0,334.4 505.0,334.4 506.0,334.4 507.0,334.4 508.0,334.4 509.0,334.4 510.0,334.4 511.0,334.3 512.0,334.3 513.0,334.3 514.0,334.3 515.0,334.3 516.0,334.3 517.0,334.3 518.0,334.3 519.0,334.3 520.0,334.2 521.0,334.2 522.0,334.2 523.0,334.2 524.0,334.2 525.0,334.2 526.0,334.2 527.0,334.2 528.0,334.1 529.0,334.1 530.0,334.1 531.0,334.1 532.0,334.1 533.0,334.1 534.0,334.1 535.0,334.1 536.0,334.1 537.0,334.0 538.0,334.0 539.0,334.0 540.0,334.0 541.0,334.0 542.0,334.0 543.0,334.0 544.0,334.0 545.0,334.0 546.0,333.9 547.0,333.9 548.0,333.9 549.0,333.9 550.0,333.9 551.0,333.9 552.0,333.9 553.0,333.9 554.0,333.9 555.0,333.9 556.0,333.8 557.0,333.8 558.0,333.8 559.0,333.8 560.0,333.8 561.0,333.8 562.0,333.8 563.0,333.8 564.0,333.8 565.0,333.8 566.0,333.7 567.0,333.7 568.0,333.7 569.0,333.7 570.0,333.7 571.0,333.7 572.0,333.7 573.0,333.7 574.0,333.7 575.0,333.7 576.0,333.7 577.0,333.6 578.0,333.6 579.0,333.6 580.0,333.6 581.0,333.6 582.0,333.6 583.0,333.6 584.0,333.6 585.0,333.6 586.0,333.6 587.0,333.6 588.0,333.5 589.0,333.5 590.0,333.5 591.0,333.5 592.0,333.5 593.0,333.5 594.0,333.5 595.0,333.5 596.0,333.5 597.0,333.5 598.0,333.5 599.0,333.5 600.0,333.5 601.0,333.4 602.0,333.4 603.0,333.4 604.0,333.4 605.0,333.4 606.0,333.4 607.0,333.4 608.0,333.4 609.0,333.4 610.0,333.4 611.0,333.4 612.0,333.4 613.0,333.4 614.0,333.4 615.0,333.4 616.0,333.3 617.0,333.3 618.0,333.3 619.0,333.3 620.0,333.3 621.0,333.3 622.0,333.3 623.0,333.3 624.0,333.3 625.0,333.3 626.0,333.3 627.0,333.3 628.0,333.3 629.0,333.3 630.0,333.3 631.0,333.3 632.0,333.3 633.0,333.3 634.0,333.3 635.0,333.3 636.0,333.2 637.0,333.2 638.0,333.2 639.0,333.2 640.0,333.2 641.0,333.2 642.0,333.2 643.0,333.2 644.0,333.2 645.0,333.2 646.0,333.2 647.0,333.2 648.0,333.2 649.0,333.2 650.0,333.2 651.0,333.2 652.0,333.2 653.0,333.2 654.0,333.2 655.0,333.2 656.0,333.2 657.0,333.2 658.0,333.2 659.0,333.2 660.0,333.2 661.0,333.2 662.0,333.2 663.0,333.2 664.0,333.2 665.0,333.2 666.0,333.2 667.0,333.2 668.0,333.2 669.0,333.2 670.0,333.1 671.0,333.1 672.0,333.1 673.0,333.1 674.0,333.1 675.0,333.1 676.0,333.1 677.0,333.1 678.0,333.1 679.0,333.1 680.0,333.1 681.0,333.1 682.0,333.1 683.0,333.1 684.0,333.1 685.0,333.1 686.0,333.1 687.0,333.1 688.0,333.1 689.0,333.1 690.0,333.1 691.0,333.1 692.0,333.1 693.0,333.1 694.0,333.1 695.0,333.1 696.0,333.1 697.0,333.1 698.0,333.1 699.0,333.1 700.0,333.1 701.0,333.1 702.0,333.1 703.0,333.1 704.0,333.1 705.0,333.1 706.0,333.1 707.0,333.1 708.0,333.1 709.0,333.1 710.0,333.1 711.0,333.1 712.0,333.1 713.0,333.1 714.0,333.1 715.0,333.1 716.0,333.1 717.0,333.1 718.0,333.0 719.0,333.0 720.0,333.0 721.0,333.0 722.0,333.0 723.0,333.0 724.0,333.0 725.0,333.0 726.0,333.0 727.0,333.0 728.0,333.0 729.0,333.0 730.0,333.0 731.0,333.0 732.0,333.0 733.0,333.0 734.0,333.0 735.0,333.0 736.0,333.0 737.0,333.0 738.0,333.0 739.0,333.0 740.0,333.0 741.0,333.0 742.0,333.0 743.0,333.0 744.0,333.0 745.0,333.0 746.0,333.0 747.0,333.0 748.0,333.0 749.0,333.0 750.0,333.0 751.0,333.0 752.0,333.0 753.0,333.0 754.0,333.0 755.0,333.0 756.0,333.0 757.0,333.0 758.0,333.0 759.0,333.0 760.0,333.0 761.0,333.0 762.0,333.0 763.0,333.0 764.0,333.0 765.0,333.0 766.0,333.0 767.0,333.0 768.0,333.0 769.0,333.0 770.0,333.0 771.0,333.0 772.0,333.0 773.0,333.0 774.0,333.0 775.0,333.0 776.0,333.0 777.0,333.0 778.0,333.0 779.0,333.0 780.0,333.0 781.0,333.0 782.0,333.0 783.0,333.0 784.0,332.9 785.0,332.9 786.0,332.9 787.0,332.9 788.0,332.9 789.0,332.9 790.0,332.9 791.0,332.9 792.0,332.9 793.0,332.9 794.0,332.9 795.0,332.9 796.0,332.9 797.0,332.9 798.0,332.9 799.0,332.9 800.0,332.9 801.0,332.9 802.0,332.9 803.0,332.9 804.0,332.9 805.0,332.9 806.0,332.9 807.0,332.9 808.0,332.9 809.0,332.9 810.0,332.9 811.0,332.9 812.0,332.9 813.0,332.9 814.0,332.9 815.0,332.9 816.0,332.9 817.0,332.9 818.0,332.9 819.0,332.9 820.0,332.9 821.0,332.9 822.0,332.9 823.0,332.9 824.0,332.9 825.0,332.9 826.0,332.9 827.0,332.9 828.0,332.9 829.0,332.9 830.0,332.9 831.0,332.9 832.0,332.9 833.0,332.9 834.0,332.9 835.0,332.9 836.0,332.9 837.0,332.9 838.0,332.9 839.0,332.9 840.0,332.9 841.0,332.9 842.0,332.9 843.0,332.9 844.0,332.9 845.0,332.9 846.0,332.9 847.0,332.9 848.0,332.9 849.0,332.9 850.0,332.9 851.0,332.9 852.0,332.9 853.0,332.9 854.0,332.9 855.0,332.9 856.0,332.9 857.0,332.9 858.0,332.9 859.0,332.9 860.0,332.9 861.0,332.9 862.0,332.9 863.0,332.9 864.0,332.9 865.0,332.9 866.0,332.9 867.0,332.9 868.0,332.9 869.0,332.9 870.0,332.9 871.0,332.9 872.0,332.9 873.0,332.9 874.0,332.8 875.0,332.8 876.0,332.8 877.0,332.8 878.0,332.8 879.0,332.8 880.0,332.8 881.0,332.8 882.0,332.8 883.0,332.8 884.0,332.8 885.0,332.8 886.0,332.8 887.0,332.8 888.0,332.8 889.0,332.8 890.0,332.8 891.0,332.8 892.0,332.8 893.0,332.8 894.0,332.8 895.0,332.8 896.0,332.8 897.0,332.8 898.0,332.8 899.0,332.8 900.0,332.8 901.0,332.8 902.0,332.8 903.0,332.8 904.0,332.8 905.0,332.8 906.0,332.8 907.0,332.8 908.0,332.8 909.0,332.8 910.0,332.8 911.0,332.8 912.0,332.8 913.0,332.8 914.0,332.8 915.0,332.8 916.0,332.8 917.0,332.8 918.0,332.8 919.0,332.8 920.0,332.8 921.0,332.8 922.0,332.8 923.0,332.8 924.0,332.8 925.0,332.8 926.0,332.8 927.0,332.8 928.0,332.8 929.0,332.8 930.0,332.8 931.0,332.8 932.0,332.8 933.0,332.8 934.0,332.8 935.0,332.8 936.0,332.8 937.0,332.8 938.0,332.8 939.0,332.8 940.0,332.8 941.0,332.8 942.0,332.8 943.0,332.8 944.0,332.8 945.0,332.8 946.0,332.8 947.0,332.8 948.0,332.8 949.0,332.8 950.0,332.8 951.0,332.8 952.0,332.8 953.0,332.8 954.0,332.8 955.0,332.8 956.0,332.8 957.0,332.8 958.0,332.8 959.0,332.8 960.0,332.8 961.0,332.8 962.0,332.8 963.0,332.8 964.0,332.8 965.0,332.7 966.0,332.7 967.0,332.7 968.0,332.7 969.0,332.7 970.0,332.7 971.0,332.7 972.0,332.7 973.0,332.7 974.0,332.7 975.0,332.7 976.0,332.7 977.0,332.7 978.0,332.7 979.0,332.7 980.0,332.7 981.0,332.7 982.0,332.7 983.0,332.7 984.0,332.7 985.0,332.7 986.0,332.7 987.0,332.7 988.0,332.7 989.0,332.7 990.0,332.7 991.0,332.7 992.0,332.7 993.0,332.7 994.0,332.7 995.0,332.7 996.0,332.7 997.0,332.7 998.0,332.7 999.0,332.7 1000.0,332.7 1001.0,332.7 1002.0,332.7 1003.0,332.7 1004.0,332.7 1005.0,332.7 1006.0,332.7 1007.0,332.7 1008.0,332.7 1009.0,332.7 1010.0,332.7 1011.0,332.7 1012.0,332.7 1013.0,332.7 1014.0,332.7 1015.0,332.7 1016.0,332.7 1017.0,332.7 1018.0,332.7 1019.0,332.7 1020.0,332.7 1021.0,332.7 1022.0,332.7 1023.0,332.7 1024.0,332.7 1025.0,332.7 1026.0,332.7 1027.0,332.7 1028.0,332.7 1029.0,332.7 1030.0,332.7 1031.0,332.7 1032.0,332.7 1033.0,332.6 1034.0,332.6 1035.0,332.6 1036.0,332.6 1037.0,332.6 1038.0,332.6 1039.0,332.6 1040.0,332.6 1041.0,332.6 1042.0,332.6 1043.0,332.6 1044.0,332.6 1045.0,332.6 1046.0,332.6 1047.0,332.6 1048.0,332.6 1049.0,332.6 1050.0,332.6 1051.0,332.6 1052.0,332.6 1053.0,332.6 1054.0,332.6 1055.0,332.6 1056.0,332.6 1057.0,332.6 1058.0,332.6 1059.0,332.6 1060.0,332.6 1061.0,332.6 1062.0,332.6 1063.0,332.6 1064.0,332.6 1065.0,332.6 1066.0,332.6 1067.0,332.6 1068.0,332.6 1069.0,332.6 1070.0,332.6 1071.0,332.6 1072.0,332.6 1073.0,332.6 1074.0,332.6 1075.0,332.6 1076.0,332.6 1077.0,332.6 1078.0,332.6 1079.0,332.6 1080.0,332.6 1081.0,332.6 1082.0,332.6 1083.0,332.6 1084.0,332.6 1085.0,332.6 1086.0,332.6 1087.0,332.6 1088.0,332.6 1089.0,332.6 1090.0,332.6 1091.0,332.6 1092.0,332.6 1093.0,332.6 1094.0,332.6 1095.0,332.5 1096.0,332.5 1097.0,332.5 1098.0,332.5 1099.0,332.5 1100.0,332.5 1101.0,332.5 1102.0,332.5 1103.0,332.5 1104.0,332.5 1105.0,332.5 1106.0,332.5 1107.0,332.5 1108.0,332.5 1109.0,332.5 1110.0,332.5 1111.0,332.5 1112.0,332.5 1113.0,332.5 1114.0,332.5 1115.0,332.5 1116.0,332.5 1117.0,332.5 1118.0,332.5 1119.0,332.5 1120.0,332.5 1121.0,332.5 1122.0,332.5 1123.0,332.5 1124.0,332.5 1125.0,332.5 1126.0,332.5 1127.0,332.5 1128.0,332.5 1129.0,332.5 1130.0,332.5 1131.0,332.5 1132.0,332.5 1133.0,332.5 1134.0,332.5 1135.0,332.5 1136.0,332.5 1137.0,332.5 1138.0,332.5 1139.0,332.5 1140.0,332.5 1141.0,332.5 1142.0,332.5 1143.0,332.5 1144.0,332.5 1145.0,332.5 1146.0,332.5 1147.0,332.5 1148.0,332.5 1149.0,332.5 1150.0,332.5 1151.0,332.5 1152.0,332.5 1153.0,332.5 1154.0,332.5 1155.0,332.5 1156.0,332.4 1157.0,332.4 1158.0,332.4 1159.0,332.4 1160.0,332.4 1161.0,332.4 1162.0,332.4 1163.0,332.4 1164.0,332.4 1165.0,332.4 1166.0,332.4 1167.0,332.4 1168.0,332.4 1169.0,332.4 1170.0,332.4 1171.0,332.4 1172.0,332.4 1173.0,332.4 1174.0,332.4 1175.0,332.4 1176.0,332.4 1177.0,332.4 1178.0,332.4 1179.0,332.4 1180.0,332.4 1181.0,332.4 1182.0,332.4 1183.0,332.4 1184.0,332.4 1185.0,332.4 1185.3,332.4 1185.3,341.0 1185.0,341.0 1184.0,341.0 1183.0,341.0 1182.0,341.0 1181.0,341.0 1180.0,341.0 1179.0,341.0 1178.0,341.0 1177.0,341.0 1176.0,341.0 1175.0,341.0 1174.0,341.0 1173.0,341.0 1172.0,341.0 1171.0,341.0 1170.0,341.0 1169.0,341.0 1168.0,341.0 1167.0,341.0 1166.0,341.0 1165.0,341.0 1164.0,341.0 1163.0,341.0 1162.0,341.0 1161.0,341.0 1160.0,341.0 1159.0,341.0 1158.0,341.0 1157.0,341.0 1156.0,341.0 1155.0,341.1 1154.0,341.1 1153.0,341.1 1152.0,341.1 1151.0,341.1 1150.0,341.1 1149.0,341.1 1148.0,341.1 1147.0,341.1 1146.0,341.1 1145.0,341.1 1144.0,341.1 1143.0,341.1 1142.0,341.1 1141.0,341.1 1140.0,341.1 1139.0,341.1 1138.0,341.1 1137.0,341.1 1136.0,341.1 1135.0,341.1 1134.0,341.1 1133.0,341.1 1132.0,341.1 1131.0,341.1 1130.0,341.1 1129.0,341.1 1128.0,341.1 1127.0,341.1 1126.0,341.1 1125.0,341.1 1124.0,341.1 1123.0,341.1 1122.0,341.1 1121.0,341.1 1120.0,341.1 1119.0,341.1 1118.0,341.1 1117.0,341.1 1116.0,341.1 1115.0,341.1 1114.0,341.1 1113.0,341.1 1112.0,341.1 1111.0,341.1 1110.0,341.1 1109.0,341.1 1108.0,341.1 1107.0,341.1 1106.0,341.1 1105.0,341.1 1104.0,341.1 1103.0,341.1 1102.0,341.1 1101.0,341.1 1100.0,341.1 1099.0,341.1 1098.0,341.1 1097.0,341.1 1096.0,341.1 1095.0,341.1 1094.0,341.2 1093.0,341.2 1092.0,341.2 1091.0,341.2 1090.0,341.2 1089.0,341.2 1088.0,341.2 1087.0,341.2 1086.0,341.2 1085.0,341.2 1084.0,341.2 1083.0,341.2 1082.0,341.2 1081.0,341.2 1080.0,341.2 1079.0,341.2 1078.0,341.2 1077.0,341.2 1076.0,341.2 1075.0,341.2 1074.0,341.2 1073.0,341.2 1072.0,341.2 1071.0,341.2 1070.0,341.2 1069.0,341.2 1068.0,341.2 1067.0,341.2 1066.0,341.2 1065.0,341.2 1064.0,341.2 1063.0,341.2 1062.0,341.2 1061.0,341.2 1060.0,341.2 1059.0,341.2 1058.0,341.2 1057.0,341.2 1056.0,341.2 1055.0,341.2 1054.0,341.2 1053.0,341.2 1052.0,341.2 1051.0,341.2 1050.0,341.2 1049.0,341.2 1048.0,341.2 1047.0,341.2 1046.0,341.2 1045.0,341.2 1044.0,341.2 1043.0,341.2 1042.0,341.2 1041.0,341.2 1040.0,341.2 1039.0,341.2 1038.0,341.2 1037.0,341.2 1036.0,341.2 1035.0,341.2 1034.0,341.2 1033.0,341.2 1032.0,341.3 1031.0,341.3 1030.0,341.3 1029.0,341.3 1028.0,341.3 1027.0,341.3 1026.0,341.3 1025.0,341.3 1024.0,341.3 1023.0,341.3 1022.0,341.3 1021.0,341.3 1020.0,341.3 1019.0,341.3 1018.0,341.3 1017.0,341.3 1016.0,341.3 1015.0,341.3 1014.0,341.3 1013.0,341.3 1012.0,341.3 1011.0,341.3 1010.0,341.3 1009.0,341.3 1008.0,341.3 1007.0,341.3 1006.0,341.3 1005.0,341.3 1004.0,341.3 1003.0,341.3 1002.0,341.3 1001.0,341.3 1000.0,341.3 999.0,341.3 998.0,341.3 997.0,341.3 996.0,341.3 995.0,341.3 994.0,341.3 993.0,341.3 992.0,341.3 991.0,341.3 990.0,341.3 989.0,341.3 988.0,341.3 987.0,341.3 986.0,341.3 985.0,341.3 984.0,341.3 983.0,341.3 982.0,341.3 981.0,341.3 980.0,341.3 979.0,341.3 978.0,341.3 977.0,341.3 976.0,341.3 975.0,341.3 974.0,341.3 973.0,341.3 972.0,341.3 971.0,341.3 970.0,341.3 969.0,341.3 968.0,341.3 967.0,341.3 966.0,341.3 965.0,341.3 964.0,341.4 963.0,341.4 962.0,341.4 961.0,341.4 960.0,341.4 959.0,341.4 958.0,341.4 957.0,341.4 956.0,341.4 955.0,341.4 954.0,341.4 953.0,341.4 952.0,341.4 951.0,341.4 950.0,341.4 949.0,341.4 948.0,341.4 947.0,341.4 946.0,341.4 945.0,341.4 944.0,341.4 943.0,341.4 942.0,341.4 941.0,341.4 940.0,341.4 939.0,341.4 938.0,341.4 937.0,341.4 936.0,341.4 935.0,341.4 934.0,341.4 933.0,341.4 932.0,341.4 931.0,341.4 930.0,341.4 929.0,341.4 928.0,341.4 927.0,341.4 926.0,341.4 925.0,341.4 924.0,341.4 923.0,341.4 922.0,341.4 921.0,341.4 920.0,341.4 919.0,341.4 918.0,341.4 917.0,341.4 916.0,341.4 915.0,341.4 914.0,341.4 913.0,341.4 912.0,341.4 911.0,341.4 910.0,341.4 909.0,341.4 908.0,341.4 907.0,341.4 906.0,341.4 905.0,341.4 904.0,341.4 903.0,341.4 902.0,341.4 901.0,341.4 900.0,341.4 899.0,341.4 898.0,341.4 897.0,341.4 896.0,341.4 895.0,341.4 894.0,341.4 893.0,341.4 892.0,341.4 891.0,341.4 890.0,341.4 889.0,341.4 888.0,341.4 887.0,341.4 886.0,341.4 885.0,341.4 884.0,341.4 883.0,341.4 882.0,341.4 881.0,341.4 880.0,341.4 879.0,341.4 878.0,341.4 877.0,341.4 876.0,341.4 875.0,341.4 874.0,341.4 873.0,341.5 872.0,341.5 871.0,341.5 870.0,341.5 869.0,341.5 868.0,341.5 867.0,341.5 866.0,341.5 865.0,341.5 864.0,341.5 863.0,341.5 862.0,341.5 861.0,341.5 860.0,341.5 859.0,341.5 858.0,341.5 857.0,341.5 856.0,341.5 855.0,341.5 854.0,341.5 853.0,341.5 852.0,341.5 851.0,341.5 850.0,341.5 849.0,341.5 848.0,341.5 847.0,341.5 846.0,341.5 845.0,341.5 844.0,341.5 843.0,341.5 842.0,341.5 841.0,341.5 840.0,341.5 839.0,341.5 838.0,341.5 837.0,341.5 836.0,341.5 835.0,341.5 834.0,341.5 833.0,341.5 832.0,341.5 831.0,341.5 830.0,341.5 829.0,341.5 828.0,341.5 827.0,341.5 826.0,341.5 825.0,341.5 824.0,341.5 823.0,341.5 822.0,341.5 821.0,341.5 820.0,341.5 819.0,341.5 818.0,341.5 817.0,341.5 816.0,341.5 815.0,341.5 814.0,341.5 813.0,341.5 812.0,341.5 811.0,341.5 810.0,341.5 809.0,341.5 808.0,341.5 807.0,341.5 806.0,341.5 805.0,341.5 804.0,341.5 803.0,341.5 802.0,341.5 801.0,341.5 800.0,341.5 799.0,341.5 798.0,341.5 797.0,341.5 796.0,341.5 795.0,341.5 794.0,341.5 793.0,341.5 792.0,341.5 791.0,341.5 790.0,341.5 789.0,341.5 788.0,341.5 787.0,341.5 786.0,341.5 785.0,341.5 784.0,341.5 783.0,341.6 782.0,341.6 781.0,341.6 780.0,341.6 779.0,341.6 778.0,341.6 777.0,341.6 776.0,341.6 775.0,341.6 774.0,341.6 773.0,341.6 772.0,341.6 771.0,341.6 770.0,341.6 769.0,341.6 768.0,341.6 767.0,341.6 766.0,341.6 765.0,341.6 764.0,341.6 763.0,341.6 762.0,341.6 761.0,341.6 760.0,341.6 759.0,341.6 758.0,341.6 757.0,341.6 756.0,341.6 755.0,341.6 754.0,341.6 753.0,341.6 752.0,341.6 751.0,341.6 750.0,341.6 749.0,341.6 748.0,341.6 747.0,341.6 746.0,341.6 745.0,341.6 744.0,341.6 743.0,341.6 742.0,341.6 741.0,341.6 740.0,341.6 739.0,341.6 738.0,341.6 737.0,341.6 736.0,341.6 735.0,341.6 734.0,341.6 733.0,341.6 732.0,341.6 731.0,341.6 730.0,341.6 729.0,341.6 728.0,341.6 727.0,341.6 726.0,341.6 725.0,341.6 724.0,341.6 723.0,341.6 722.0,341.6 721.0,341.6 720.0,341.6 719.0,341.6 718.0,341.6 717.0,341.7 716.0,341.7 715.0,341.7 714.0,341.7 713.0,341.7 712.0,341.7 711.0,341.7 710.0,341.7 709.0,341.7 708.0,341.7 707.0,341.7 706.0,341.7 705.0,341.7 704.0,341.7 703.0,341.7 702.0,341.7 701.0,341.7 700.0,341.7 699.0,341.7 698.0,341.7 697.0,341.7 696.0,341.7 695.0,341.7 694.0,341.7 693.0,341.7 692.0,341.7 691.0,341.7 690.0,341.7 689.0,341.7 688.0,341.7 687.0,341.7 686.0,341.7 685.0,341.7 684.0,341.7 683.0,341.7 682.0,341.7 681.0,341.7 680.0,341.7 679.0,341.7 678.0,341.7 677.0,341.7 676.0,341.7 675.0,341.7 674.0,341.7 673.0,341.7 672.0,341.7 671.0,341.7 670.0,341.7 669.0,341.8 668.0,341.8 667.0,341.8 666.0,341.8 665.0,341.8 664.0,341.8 663.0,341.8 662.0,341.8 661.0,341.8 660.0,341.8 659.0,341.8 658.0,341.8 657.0,341.8 656.0,341.8 655.0,341.8 654.0,341.8 653.0,341.8 652.0,341.8 651.0,341.8 650.0,341.8 649.0,341.8 648.0,341.8 647.0,341.8 646.0,341.8 645.0,341.8 644.0,341.8 643.0,341.8 642.0,341.8 641.0,341.8 640.0,341.8 639.0,341.8 638.0,341.8 637.0,341.8 636.0,341.8 635.0,341.9 634.0,341.9 633.0,341.9 632.0,341.9 631.0,341.9 630.0,341.9 629.0,341.9 628.0,341.9 627.0,341.9 626.0,341.9 625.0,341.9 624.0,341.9 623.0,341.9 622.0,341.9 621.0,341.9 620.0,341.9 619.0,341.9 618.0,341.9 617.0,341.9 616.0,341.9 615.0,342.0 614.0,342.0 613.0,342.0 612.0,342.0 611.0,342.0 610.0,342.0 609.0,342.0 608.0,342.0 607.0,342.0 606.0,342.0 605.0,342.0 604.0,342.0 603.0,342.0 602.0,342.0 601.0,342.0 600.0,342.1 599.0,342.1 598.0,342.1 597.0,342.1 596.0,342.1 595.0,342.1 594.0,342.1 593.0,342.1 592.0,342.1 591.0,342.1 590.0,342.1 589.0,342.1 588.0,342.1 587.0,342.2 586.0,342.2 585.0,342.2 584.0,342.2 583.0,342.2 582.0,342.2 581.0,342.2 580.0,342.2 579.0,342.2 578.0,342.2 577.0,342.2 576.0,342.3 575.0,342.3 574.0,342.3 573.0,342.3 572.0,342.3 571.0,342.3 570.0,342.3 569.0,342.3 568.0,342.3 567.0,342.3 566.0,342.3 565.0,342.4 564.0,342.4 563.0,342.4 562.0,342.4 561.0,342.4 560.0,342.4 559.0,342.4 558.0,342.4 557.0,342.4 556.0,342.4 555.0,342.5 554.0,342.5 553.0,342.5 552.0,342.5 551.0,342.5 550.0,342.5 549.0,342.5 548.0,342.5 547.0,342.5 546.0,342.5 545.0,342.6 544.0,342.6 543.0,342.6 542.0,342.6 541.0,342.6 540.0,342.6 539.0,342.6 538.0,342.6 537.0,342.6 536.0,342.7 535.0,342.7 534.0,342.7 533.0,342.7 532.0,342.7 531.0,342.7 530.0,342.7 529.0,342.7 528.0,342.7 527.0,342.8 526.0,342.8 525.0,342.8 524.0,342.8 523.0,342.8 522.0,342.8 521.0,342.8 520.0,342.8 519.0,342.9 518.0,342.9 517.0,342.9 516.0,342.9 515.0,342.9 514.0,342.9 513.0,342.9 512.0,342.9 511.0,342.9 510.0,343.0 509.0,343.0 508.0,343.0 507.0,343.0 506.0,343.0 505.0,343.0 504.0,343.0 503.0,343.0 502.0,343.1 501.0,343.1 500.0,343.1 499.0,343.1 498.0,343.1 497.0,343.1 496.0,343.1 495.0,343.1 494.0,343.2 493.0,343.2 492.0,343.2 491.0,343.2 490.0,343.2 489.0,343.2 488.0,343.2 487.0,343.2 486.0,343.3 485.0,343.3 484.0,343.3 483.0,343.3 482.0,343.3 481.0,343.3 480.0,343.3 479.0,343.3 478.0,343.3 477.0,343.4 476.0,343.4 475.0,343.4 474.0,343.4 473.0,343.4 472.0,343.4 471.0,343.4 470.0,343.4 469.0,343.5 468.0,343.5 467.0,343.5 466.0,343.5 465.0,343.5 464.0,343.5 463.0,343.5 462.0,343.6 461.0,343.6 460.0,343.6 459.0,343.6 458.0,343.6 457.0,343.6 456.0,343.6 455.0,343.6 454.0,343.7 453.0,343.7 452.0,343.7 451.0,343.7 450.0,343.7 449.0,343.7 448.0,343.7 447.0,343.7 446.0,343.8 445.0,343.8 444.0,343.8 443.0,343.8 442.0,343.8 441.0,343.8 440.0,343.8 439.0,343.8 438.0,343.9 437.0,343.9 436.0,343.9 435.0,343.9 434.0,343.9 433.0,343.9 432.0,343.9 431.0,344.0 430.0,344.0 429.0,344.0 428.0,344.0 427.0,344.0 426.0,344.0 425.0,344.0 424.0,344.1 423.0,344.1 422.0,344.1 421.0,344.1 420.0,344.1 419.0,344.1 418.0,344.1 417.0,344.2 416.0,344.2 415.0,344.2 414.0,344.2 413.0,344.2 412.0,344.2 411.0,344.2 410.0,344.3 409.0,344.3 408.0,344.3 407.0,344.3 406.0,344.3 405.0,344.3 404.0,344.4 403.0,344.4 402.0,344.4 401.0,344.4 400.0,344.4 399.0,344.4 398.0,344.5 397.0,344.5 396.0,344.5 395.0,344.5 394.0,344.5 393.0,344.5 392.0,344.6 391.0,344.6 390.0,344.6 389.0,344.6 388.0,344.6 387.0,344.6 386.0,344.7 385.0,344.7 384.0,344.7 383.0,344.7 382.0,344.7 381.0,344.7 380.0,344.8 379.0,344.8 378.0,344.8 377.0,344.8 376.0,344.8 375.0,344.9 374.0,344.9 373.0,344.9 372.0,344.9 371.0,344.9 370.0,344.9 369.0,345.0 368.0,345.0 367.0,345.0 366.0,345.0 365.0,345.0 364.0,345.0 363.0,345.1 362.0,345.1 361.0,345.1 360.0,345.1 359.0,345.1 358.0,345.2 357.0,345.2 356.0,345.2 355.0,345.2 354.0,345.2 353.0,345.3 352.0,345.3 351.0,345.3 350.0,345.3 349.0,345.3 348.0,345.3 347.0,345.4 346.0,345.4 345.0,345.4 344.0,345.4 343.0,345.4 342.0,345.5 341.0,345.5 340.0,345.5 339.0,345.5 338.0,345.5 337.0,345.6 336.0,345.6 335.0,345.6 334.0,345.6 333.0,345.6 332.0,345.7 331.0,345.7 330.0,345.7 329.0,345.7 328.0,345.7 327.0,345.8 326.0,345.8 325.0,345.8 324.0,345.8 323.0,345.8 322.0,345.9 321.0,345.9 320.0,345.9 319.0,345.9 318.0,345.9 317.0,346.0 316.0,346.0 315.0,346.0 314.0,346.0 313.0,346.0 312.0,346.1 311.0,346.1 310.0,346.1 309.0,346.1 308.0,346.1 307.0,346.2 306.0,346.2 305.0,346.2 304.0,346.2 303.0,346.2 302.0,346.3 301.0,346.3 300.0,346.3 299.0,346.3 298.0,346.3 297.0,346.4 296.0,346.4 295.0,346.4 294.0,346.4 293.0,346.4 292.0,346.5 291.0,346.5 290.0,346.5 289.0,346.5 288.0,346.5 287.0,346.6 286.0,346.6 285.0,346.6 284.0,346.6 283.0,346.6 282.0,346.7 281.0,346.7 280.0,346.7 279.0,346.7 278.0,346.7 277.0,346.8 276.0,346.8 275.0,346.8 274.0,346.8 273.0,346.8 272.0,346.9 271.0,346.9 270.0,346.9 269.0,346.9 268.0,346.9 267.0,347.0 266.0,347.0 265.0,347.0 264.0,347.0 263.0,347.0 262.0,347.1 261.0,347.1 260.0,347.1 259.0,347.1 258.0,347.1 257.0,347.2 256.0,347.2 255.0,347.2 254.0,347.2 253.0,347.3 252.0,347.3 251.0,347.3 250.0,347.3 249.0,347.3 248.0,347.4 247.0,347.4 246.0,347.4 245.0,347.4 244.0,347.4 243.0,347.5 242.0,347.5 241.0,347.5 240.0,347.5 239.0,347.5 238.0,347.6 237.0,347.6 236.0,347.6 235.0,347.6 234.0,347.7 233.0,347.7 232.0,347.7 231.0,347.7 230.0,347.7 229.0,347.8 228.0,347.8 227.0,347.8 226.0,347.8 225.0,347.9 224.0,347.9 223.0,347.9 222.0,347.9 221.0,348.0 220.0,348.0 219.0,348.0 218.0,348.0 217.0,348.0 216.0,348.1 215.0,348.1 214.0,348.1 213.0,348.1 212.0,348.2 211.0,348.2 210.0,348.2 209.0,348.2 208.0,348.3 207.0,348.3 206.0,348.3 205.0,348.3 204.0,348.4 203.0,348.4 202.0,348.4 201.0,348.4 200.0,348.5 199.0,348.5 198.0,348.5 197.0,348.5 196.0,348.6 195.0,348.6 194.0,348.6 193.0,348.7 192.0,348.7 191.0,348.7 190.0,348.7 189.0,348.8 188.0,348.8 187.0,348.8 186.0,348.9 185.0,348.9 184.0,348.9 183.0,348.9 182.0,349.0 181.0,349.0 180.0,349.0 179.0,349.1 178.0,349.1 177.0,349.1 176.0,349.1 175.0,349.2 174.0,349.2 173.0,349.2 172.0,349.3 171.0,349.3 170.0,349.3 169.0,349.4 168.0,349.4 167.0,349.4 166.0,349.5 165.0,349.5 164.0,349.5 163.0,349.5 162.0,349.6 161.0,349.6 160.0,349.6 159.0,349.7 158.0,349.7 157.0,349.7 156.0,349.8 155.0,349.8 154.0,349.9 153.0,349.9 152.0,349.9 151.0,350.0 150.0,350.0 149.0,350.0 148.0,350.1 147.0,350.1 146.0,350.1 145.0,350.1 144.0,350.2 143.0,350.2 142.0,350.2 141.0,350.3 140.0,350.3 139.0,350.3 138.0,350.3 137.0,350.4 136.0,350.4 135.0,350.4 134.0,350.5 133.0,350.5 132.0,350.5 131.0,350.6 130.0,350.6 129.0,350.6 128.0,350.7 127.0,350.7 126.0,350.7 125.0,350.8 124.0,350.8 123.0,350.8 122.0,350.9 121.0,350.9 120.0,350.9 119.0,351.0 118.0,351.0 117.0,351.1 116.0,351.1 115.0,351.1 114.0,351.2 113.0,351.2 112.0,351.3 111.0,351.3 110.0,351.4 109.0,351.4 108.0,351.4 107.0,351.5 106.0,351.5 105.0,351.6 104.0,351.6 103.0,351.7 102.0,351.7 101.0,351.8 100.0,351.8 99.0,351.9 98.0,351.9 97.0,352.0 96.0,352.0 95.0,352.1 94.0,352.1 93.0,352.2 92.0,352.2 91.0,352.3 90.0,352.3 89.0,352.4 88.0,352.4 87.0,352.5 86.0,352.5 85.0,352.6 84.0,352.6 83.0,352.7 82.0,352.7 81.0,352.8 80.0,352.8 79.0,352.9 78.0,353.0 77.0,353.0 76.0,353.1 75.0,353.1 74.0,353.2 73.0,353.2 72.0,353.3 71.0,353.4 70.0,353.4 69.0,353.5 68.0,353.5 67.0,353.6 66.0,353.7 65.0,353.7 64.0,353.8 63.0,353.8 62.0,353.9 61.0,354.0 60.0,354.0 59.0,354.1 58.0,354.1 57.0,354.2 56.0,354.3 55.0,354.3 54.0,354.4 53.0,354.4 52.0,354.5 51.0,354.6 50.0,354.6 49.0,354.7 48.0,354.8 47.0,354.8 46.0,354.9 45.0,355.0 44.0,355.0 43.0,355.1 42.0,355.1 41.0,355.2 40.0,355.3 39.0,355.3 38.0,355.4 37.0,355.5 36.0,355.5 35.0,355.6 34.0,355.7 33.0,355.7 32.0,355.8" fill="#178e98"/>
<path d="M29.4,352.8 L32.8,348.8 L35.2,348.8 L38.6,352.8 L35.2,356.9 L32.8,356.9 Z M36.8,352.3 L40.2,348.1 L42.6,348.1 L46.0,352.3 L42.6,356.4 L40.2,356.4 Z M44.2,351.7 L47.6,347.5 L50.0,347.5 L53.4,351.7 L50.0,355.9 L47.6,355.9 Z M51.7,351.1 L55.1,346.8 L57.5,346.8 L60.9,351.1 L57.5,355.4 L55.1,355.4 Z M59.1,350.6 L62.5,346.2 L64.9,346.2 L68.3,350.6 L64.9,355.0 L62.5,355.0 Z M66.5,350.0 L69.9,345.5 L72.3,345.5 L75.7,350.0 L72.3,354.6 L69.9,354.6 Z M73.9,349.5 L77.3,344.9 L79.7,344.9 L83.1,349.5 L79.7,354.1 L77.3,354.1 Z M81.3,349.0 L84.7,344.3 L87.1,344.3 L90.5,349.0 L87.1,353.7 L84.7,353.7 Z M88.8,348.5 L92.2,343.7 L94.6,343.7 L98.0,348.5 L94.6,353.3 L92.2,353.3 Z M96.2,348.1 L99.6,343.2 L102.0,343.2 L105.4,348.1 L102.0,353.0 L99.6,353.0 Z M103.6,347.6 L107.0,342.6 L109.4,342.6 L112.8,347.6 L109.4,352.6 L107.0,352.6 Z M111.0,347.2 L114.4,342.1 L116.8,342.1 L120.2,347.2 L116.8,352.3 L114.4,352.3 Z M118.4,346.8 L121.8,341.7 L124.2,341.7 L127.6,346.8 L124.2,352.0 L121.8,352.0 Z M125.9,346.5 L129.3,341.2 L131.7,341.2 L135.1,346.5 L131.7,351.8 L129.3,351.8 Z M133.3,346.2 L136.7,340.8 L139.1,340.8 L142.5,346.2 L139.1,351.5 L136.7,351.5 Z M140.7,345.9 L144.1,340.4 L146.5,340.4 L149.9,345.9 L146.5,351.3 L144.1,351.3 Z M148.1,345.6 L151.5,340.1 L153.9,340.1 L157.3,345.6 L153.9,351.1 L151.5,351.1 Z M155.5,345.3 L158.9,339.8 L161.3,339.8 L164.7,345.3 L161.3,350.8 L158.9,350.8 Z M163.0,345.1 L166.4,339.6 L168.8,339.6 L172.2,345.1 L168.8,350.6 L166.4,350.6 Z M170.4,344.9 L173.8,339.4 L176.2,339.4 L179.6,344.9 L176.2,350.4 L173.8,350.4 Z M177.8,344.7 L181.2,339.2 L183.6,339.2 L187.0,344.7 L183.6,350.2 L181.2,350.2 Z M185.2,344.4 L188.6,338.9 L191.0,338.9 L194.4,344.4 L191.0,349.9 L188.6,349.9 Z M192.6,344.2 L196.0,338.7 L198.4,338.7 L201.8,344.2 L198.4,349.7 L196.0,349.7 Z M200.1,344.1 L203.5,338.6 L205.9,338.6 L209.3,344.1 L205.9,349.6 L203.5,349.6 Z M207.5,343.9 L210.9,338.4 L213.3,338.4 L216.7,343.9 L213.3,349.4 L210.9,349.4 Z M214.9,343.7 L218.3,338.2 L220.7,338.2 L224.1,343.7 L220.7,349.2 L218.3,349.2 Z M222.3,343.5 L225.7,338.0 L228.1,338.0 L231.5,343.5 L228.1,349.0 L225.7,349.0 Z M229.7,343.4 L233.1,337.9 L235.5,337.9 L238.9,343.4 L235.5,348.9 L233.1,348.9 Z M237.2,343.2 L240.6,337.7 L243.0,337.7 L246.4,343.2 L243.0,348.7 L240.6,348.7 Z M244.6,343.0 L248.0,337.5 L250.4,337.5 L253.8,343.0 L250.4,348.5 L248.0,348.5 Z M252.0,342.9 L255.4,337.4 L257.8,337.4 L261.2,342.9 L257.8,348.4 L255.4,348.4 Z M259.4,342.7 L262.8,337.2 L265.2,337.2 L268.6,342.7 L265.2,348.2 L262.8,348.2 Z M266.8,342.6 L270.2,337.1 L272.6,337.1 L276.0,342.6 L272.6,348.1 L270.2,348.1 Z M274.3,342.4 L277.7,336.9 L280.1,336.9 L283.5,342.4 L280.1,347.9 L277.7,347.9 Z M281.7,342.3 L285.1,336.8 L287.5,336.8 L290.9,342.3 L287.5,347.8 L285.1,347.8 Z M289.1,342.1 L292.5,336.6 L294.9,336.6 L298.3,342.1 L294.9,347.6 L292.5,347.6 Z M296.5,342.0 L299.9,336.5 L302.3,336.5 L305.7,342.0 L302.3,347.5 L299.9,347.5 Z M303.9,341.8 L307.3,336.3 L309.7,336.3 L313.1,341.8 L309.7,347.3 L307.3,347.3 Z M311.4,341.7 L314.8,336.2 L317.2,336.2 L320.6,341.7 L317.2,347.2 L314.8,347.2 Z M318.8,341.5 L322.2,336.0 L324.6,336.0 L328.0,341.5 L324.6,347.0 L322.2,347.0 Z M326.2,341.4 L329.6,335.9 L332.0,335.9 L335.4,341.4 L332.0,346.9 L329.6,346.9 Z M333.6,341.2 L337.0,335.7 L339.4,335.7 L342.8,341.2 L339.4,346.7 L337.0,346.7 Z M341.0,341.1 L344.4,335.6 L346.8,335.6 L350.2,341.1 L346.8,346.6 L344.4,346.6 Z M348.5,341.0 L351.9,335.5 L354.3,335.5 L357.7,341.0 L354.3,346.5 L351.9,346.5 Z M355.9,340.8 L359.3,335.3 L361.7,335.3 L365.1,340.8 L361.7,346.3 L359.3,346.3 Z M363.3,340.7 L366.7,335.2 L369.1,335.2 L372.5,340.7 L369.1,346.2 L366.7,346.2 Z M370.7,340.5 L374.1,335.0 L376.5,335.0 L379.9,340.5 L376.5,346.0 L374.1,346.0 Z M378.1,340.4 L381.5,334.9 L383.9,334.9 L387.3,340.4 L383.9,345.9 L381.5,345.9 Z M385.6,340.3 L389.0,334.8 L391.4,334.8 L394.8,340.3 L391.4,345.8 L389.0,345.8 Z M393.0,340.2 L396.4,334.7 L398.8,334.7 L402.2,340.2 L398.8,345.7 L396.4,345.7 Z M400.4,340.0 L403.8,334.5 L406.2,334.5 L409.6,340.0 L406.2,345.5 L403.8,345.5 Z M407.8,339.9 L411.2,334.4 L413.6,334.4 L417.0,339.9 L413.6,345.4 L411.2,345.4 Z M415.2,339.8 L418.6,334.3 L421.0,334.3 L424.4,339.8 L421.0,345.3 L418.6,345.3 Z M422.7,339.7 L426.1,334.2 L428.5,334.2 L431.9,339.7 L428.5,345.2 L426.1,345.2 Z M430.1,339.6 L433.5,334.1 L435.9,334.1 L439.3,339.6 L435.9,345.1 L433.5,345.1 Z M437.5,339.5 L440.9,334.0 L443.3,334.0 L446.7,339.5 L443.3,345.0 L440.9,345.0 Z M444.9,339.4 L448.3,333.9 L450.7,333.9 L454.1,339.4 L450.7,344.9 L448.3,344.9 Z M452.3,339.3 L455.7,333.8 L458.1,333.8 L461.5,339.3 L458.1,344.8 L455.7,344.8 Z M459.8,339.2 L463.2,333.7 L465.6,333.7 L469.0,339.2 L465.6,344.7 L463.2,344.7 Z M467.2,339.1 L470.6,333.6 L473.0,333.6 L476.4,339.1 L473.0,344.6 L470.6,344.6 Z M474.6,339.0 L478.0,333.5 L480.4,333.5 L483.8,339.0 L480.4,344.5 L478.0,344.5 Z M482.0,338.9 L485.4,333.4 L487.8,333.4 L491.2,338.9 L487.8,344.4 L485.4,344.4 Z M489.4,338.9 L492.8,333.4 L495.2,333.4 L498.6,338.9 L495.2,344.4 L492.8,344.4 Z M496.9,338.8 L500.3,333.3 L502.7,333.3 L506.1,338.8 L502.7,344.3 L500.3,344.3 Z M504.3,338.7 L507.7,333.2 L510.1,333.2 L513.5,338.7 L510.1,344.2 L507.7,344.2 Z M511.7,338.6 L515.1,333.1 L517.5,333.1 L520.9,338.6 L517.5,344.1 L515.1,344.1 Z M519.1,338.5 L522.5,333.0 L524.9,333.0 L528.3,338.5 L524.9,344.0 L522.5,344.0 Z M526.5,338.4 L529.9,332.9 L532.3,332.9 L535.7,338.4 L532.3,343.9 L529.9,343.9 Z M534.0,338.3 L537.4,332.8 L539.8,332.8 L543.2,338.3 L539.8,343.8 L537.4,343.8 Z M541.4,338.2 L544.8,332.7 L547.2,332.7 L550.6,338.2 L547.2,343.7 L544.8,343.7 Z M548.8,338.2 L552.2,332.7 L554.6,332.7 L558.0,338.2 L554.6,343.7 L552.2,343.7 Z M556.2,338.1 L559.6,332.6 L562.0,332.6 L565.4,338.1 L562.0,343.6 L559.6,343.6 Z M563.6,338.0 L567.0,332.5 L569.4,332.5 L572.8,338.0 L569.4,343.5 L567.0,343.5 Z M571.1,338.0 L574.5,332.5 L576.9,332.5 L580.3,338.0 L576.9,343.5 L574.5,343.5 Z M578.5,337.9 L581.9,332.4 L584.3,332.4 L587.7,337.9 L584.3,343.4 L581.9,343.4 Z M585.9,337.8 L589.3,332.3 L591.7,332.3 L595.1,337.8 L591.7,343.3 L589.3,343.3 Z M593.3,337.8 L596.7,332.3 L599.1,332.3 L602.5,337.8 L599.1,343.3 L596.7,343.3 Z M600.7,337.7 L604.1,332.2 L606.5,332.2 L609.9,337.7 L606.5,343.2 L604.1,343.2 Z M608.2,337.7 L611.6,332.2 L614.0,332.2 L617.4,337.7 L614.0,343.2 L611.6,343.2 Z M615.6,337.6 L619.0,332.1 L621.4,332.1 L624.8,337.6 L621.4,343.1 L619.0,343.1 Z M623.0,337.6 L626.4,332.1 L628.8,332.1 L632.2,337.6 L628.8,343.1 L626.4,343.1 Z M630.4,337.6 L633.8,332.1 L636.2,332.1 L639.6,337.6 L636.2,343.1 L633.8,343.1 Z M637.8,337.5 L641.2,332.0 L643.6,332.0 L647.0,337.5 L643.6,343.0 L641.2,343.0 Z M645.3,337.5 L648.7,332.0 L651.1,332.0 L654.5,337.5 L651.1,343.0 L648.7,343.0 Z M652.7,337.5 L656.1,332.0 L658.5,332.0 L661.9,337.5 L658.5,343.0 L656.1,343.0 Z M660.1,337.5 L663.5,332.0 L665.9,332.0 L669.3,337.5 L665.9,343.0 L663.5,343.0 Z M667.5,337.4 L670.9,331.9 L673.3,331.9 L676.7,337.4 L673.3,342.9 L670.9,342.9 Z M674.9,337.4 L678.3,331.9 L680.7,331.9 L684.1,337.4 L680.7,342.9 L678.3,342.9 Z M682.4,337.4 L685.8,331.9 L688.2,331.9 L691.6,337.4 L688.2,342.9 L685.8,342.9 Z M689.8,337.4 L693.2,331.9 L695.6,331.9 L699.0,337.4 L695.6,342.9 L693.2,342.9 Z M697.2,337.4 L700.6,331.9 L703.0,331.9 L706.4,337.4 L703.0,342.9 L700.6,342.9 Z M704.6,337.4 L708.0,331.9 L710.4,331.9 L713.8,337.4 L710.4,342.9 L708.0,342.9 Z M712.0,337.4 L715.4,331.9 L717.8,331.9 L721.2,337.4 L717.8,342.9 L715.4,342.9 Z M719.5,337.3 L722.9,331.8 L725.3,331.8 L728.7,337.3 L725.3,342.8 L722.9,342.8 Z M726.9,337.3 L730.3,331.8 L732.7,331.8 L736.1,337.3 L732.7,342.8 L730.3,342.8 Z M734.3,337.3 L737.7,331.8 L740.1,331.8 L743.5,337.3 L740.1,342.8 L737.7,342.8 Z M741.7,337.3 L745.1,331.8 L747.5,331.8 L750.9,337.3 L747.5,342.8 L745.1,342.8 Z M749.1,337.3 L752.5,331.8 L754.9,331.8 L758.3,337.3 L754.9,342.8 L752.5,342.8 Z M756.6,337.3 L760.0,331.8 L762.4,331.8 L765.8,337.3 L762.4,342.8 L760.0,342.8 Z M764.0,337.3 L767.4,331.8 L769.8,331.8 L773.2,337.3 L769.8,342.8 L767.4,342.8 Z M771.4,337.3 L774.8,331.8 L777.2,331.8 L780.6,337.3 L777.2,342.8 L774.8,342.8 Z M778.8,337.2 L782.2,331.7 L784.6,331.7 L788.0,337.2 L784.6,342.7 L782.2,342.7 Z M786.2,337.2 L789.6,331.7 L792.0,331.7 L795.4,337.2 L792.0,342.7 L789.6,342.7 Z M793.7,337.2 L797.1,331.7 L799.5,331.7 L802.9,337.2 L799.5,342.7 L797.1,342.7 Z M801.1,337.2 L804.5,331.7 L806.9,331.7 L810.3,337.2 L806.9,342.7 L804.5,342.7 Z M808.5,337.2 L811.9,331.7 L814.3,331.7 L817.7,337.2 L814.3,342.7 L811.9,342.7 Z M815.9,337.2 L819.3,331.7 L821.7,331.7 L825.1,337.2 L821.7,342.7 L819.3,342.7 Z M823.3,337.2 L826.7,331.7 L829.1,331.7 L832.5,337.2 L829.1,342.7 L826.7,342.7 Z M830.8,337.2 L834.2,331.7 L836.6,331.7 L840.0,337.2 L836.6,342.7 L834.2,342.7 Z M838.2,337.2 L841.6,331.7 L844.0,331.7 L847.4,337.2 L844.0,342.7 L841.6,342.7 Z M845.6,337.2 L849.0,331.7 L851.4,331.7 L854.8,337.2 L851.4,342.7 L849.0,342.7 Z M853.0,337.2 L856.4,331.7 L858.8,331.7 L862.2,337.2 L858.8,342.7 L856.4,342.7 Z M860.4,337.2 L863.8,331.7 L866.2,331.7 L869.6,337.2 L866.2,342.7 L863.8,342.7 Z M867.9,337.2 L871.3,331.7 L873.7,331.7 L877.1,337.2 L873.7,342.7 L871.3,342.7 Z M875.3,337.1 L878.7,331.6 L881.1,331.6 L884.5,337.1 L881.1,342.6 L878.7,342.6 Z M882.7,337.1 L886.1,331.6 L888.5,331.6 L891.9,337.1 L888.5,342.6 L886.1,342.6 Z M890.1,337.1 L893.5,331.6 L895.9,331.6 L899.3,337.1 L895.9,342.6 L893.5,342.6 Z M897.5,337.1 L900.9,331.6 L903.3,331.6 L906.7,337.1 L903.3,342.6 L900.9,342.6 Z M905.0,337.1 L908.4,331.6 L910.8,331.6 L914.2,337.1 L910.8,342.6 L908.4,342.6 Z M912.4,337.1 L915.8,331.6 L918.2,331.6 L921.6,337.1 L918.2,342.6 L915.8,342.6 Z M919.8,337.1 L923.2,331.6 L925.6,331.6 L929.0,337.1 L925.6,342.6 L923.2,342.6 Z M927.2,337.1 L930.6,331.6 L933.0,331.6 L936.4,337.1 L933.0,342.6 L930.6,342.6 Z M934.6,337.1 L938.0,331.6 L940.4,331.6 L943.8,337.1 L940.4,342.6 L938.0,342.6 Z M942.1,337.1 L945.5,331.6 L947.9,331.6 L951.3,337.1 L947.9,342.6 L945.5,342.6 Z M949.5,337.1 L952.9,331.6 L955.3,331.6 L958.7,337.1 L955.3,342.6 L952.9,342.6 Z M956.9,337.1 L960.3,331.6 L962.7,331.6 L966.1,337.1 L962.7,342.6 L960.3,342.6 Z M964.3,337.0 L967.7,331.5 L970.1,331.5 L973.5,337.0 L970.1,342.5 L967.7,342.5 Z M971.7,337.0 L975.1,331.5 L977.5,331.5 L980.9,337.0 L977.5,342.5 L975.1,342.5 Z M979.2,337.0 L982.6,331.5 L985.0,331.5 L988.4,337.0 L985.0,342.5 L982.6,342.5 Z M986.6,337.0 L990.0,331.5 L992.4,331.5 L995.8,337.0 L992.4,342.5 L990.0,342.5 Z M994.0,337.0 L997.4,331.5 L999.8,331.5 L1003.2,337.0 L999.8,342.5 L997.4,342.5 Z M1001.4,337.0 L1004.8,331.5 L1007.2,331.5 L1010.6,337.0 L1007.2,342.5 L1004.8,342.5 Z M1008.8,337.0 L1012.2,331.5 L1014.6,331.5 L1018.0,337.0 L1014.6,342.5 L1012.2,342.5 Z M1016.3,337.0 L1019.7,331.5 L1022.1,331.5 L1025.5,337.0 L1022.1,342.5 L1019.7,342.5 Z M1023.7,337.0 L1027.1,331.5 L1029.5,331.5 L1032.9,337.0 L1029.5,342.5 L1027.1,342.5 Z M1031.1,336.9 L1034.5,331.4 L1036.9,331.4 L1040.3,336.9 L1036.9,342.4 L1034.5,342.4 Z M1038.5,336.9 L1041.9,331.4 L1044.3,331.4 L1047.7,336.9 L1044.3,342.4 L1041.9,342.4 Z M1045.9,336.9 L1049.3,331.4 L1051.7,331.4 L1055.1,336.9 L1051.7,342.4 L1049.3,342.4 Z M1053.4,336.9 L1056.8,331.4 L1059.2,331.4 L1062.6,336.9 L1059.2,342.4 L1056.8,342.4 Z M1060.8,336.9 L1064.2,331.4 L1066.6,331.4 L1070.0,336.9 L1066.6,342.4 L1064.2,342.4 Z M1068.2,336.9 L1071.6,331.4 L1074.0,331.4 L1077.4,336.9 L1074.0,342.4 L1071.6,342.4 Z M1075.6,336.9 L1079.0,331.4 L1081.4,331.4 L1084.8,336.9 L1081.4,342.4 L1079.0,342.4 Z M1083.0,336.9 L1086.4,331.4 L1088.8,331.4 L1092.2,336.9 L1088.8,342.4 L1086.4,342.4 Z M1090.5,336.8 L1093.9,331.3 L1096.3,331.3 L1099.7,336.8 L1096.3,342.3 L1093.9,342.3 Z M1097.9,336.8 L1101.3,331.3 L1103.7,331.3 L1107.1,336.8 L1103.7,342.3 L1101.3,342.3 Z M1105.3,336.8 L1108.7,331.3 L1111.1,331.3 L1114.5,336.8 L1111.1,342.3 L1108.7,342.3 Z M1112.7,336.8 L1116.1,331.3 L1118.5,331.3 L1121.9,336.8 L1118.5,342.3 L1116.1,342.3 Z M1120.1,336.8 L1123.5,331.3 L1125.9,331.3 L1129.3,336.8 L1125.9,342.3 L1123.5,342.3 Z M1127.6,336.8 L1131.0,331.3 L1133.4,331.3 L1136.8,336.8 L1133.4,342.3 L1131.0,342.3 Z M1135.0,336.8 L1138.4,331.3 L1140.8,331.3 L1144.2,336.8 L1140.8,342.3 L1138.4,342.3 Z M1142.4,336.8 L1145.8,331.3 L1148.2,331.3 L1151.6,336.8 L1148.2,342.3 L1145.8,342.3 Z M1149.8,336.8 L1153.2,331.3 L1155.6,331.3 L1159.0,336.8 L1155.6,342.3 L1153.2,342.3 Z M1157.2,336.7 L1160.6,331.2 L1163.0,331.2 L1166.4,336.7 L1163.0,342.2 L1160.6,342.2 Z M1164.7,336.7 L1168.1,331.2 L1170.5,331.2 L1173.9,336.7 L1170.5,342.2 L1168.1,342.2 Z M1172.1,336.7 L1175.5,331.2 L1177.9,331.2 L1181.3,336.7 L1177.9,342.2 L1175.5,342.2 Z" fill="#1fb6c0"/>
<rect x="32.0" y="96.0" width="1153.3" height="282.4" fill="none" stroke="#b0b0b0" stroke-width="1.1"/>
<path d="M27.0,378.4 H32.0" stroke="#b0b0b0" stroke-width="1.1"/>
<text x="26.8" y="381.2" font-size="9.6" fill="#d0d0d0" text-anchor="end" textLength="21.5" lengthAdjust="spacingAndGlyphs" stroke="#d0d0d0" stroke-width="0.3">-0.3V</text>
<path d="M27.0,352.7 H32.0" stroke="#b0b0b0" stroke-width="1.1"/>
<text x="26.8" y="355.5272727272727" font-size="9.6" fill="#d0d0d0" text-anchor="end" textLength="16.8" lengthAdjust="spacingAndGlyphs" stroke="#d0d0d0" stroke-width="0.3">0.0V</text>
<path d="M27.0,327.1 H32.0" stroke="#b0b0b0" stroke-width="1.1"/>
<text x="26.8" y="329.8545454545455" font-size="9.6" fill="#d0d0d0" text-anchor="end" textLength="16.8" lengthAdjust="spacingAndGlyphs" stroke="#d0d0d0" stroke-width="0.3">0.3V</text>
<path d="M27.0,301.4 H32.0" stroke="#b0b0b0" stroke-width="1.1"/>
<text x="26.8" y="304.1818181818182" font-size="9.6" fill="#d0d0d0" text-anchor="end" textLength="16.8" lengthAdjust="spacingAndGlyphs" stroke="#d0d0d0" stroke-width="0.3">0.6V</text>
<path d="M27.0,275.7 H32.0" stroke="#b0b0b0" stroke-width="1.1"/>
<text x="26.8" y="278.5090909090909" font-size="9.6" fill="#d0d0d0" text-anchor="end" textLength="16.8" lengthAdjust="spacingAndGlyphs" stroke="#d0d0d0" stroke-width="0.3">0.9V</text>
<path d="M27.0,250.0 H32.0" stroke="#b0b0b0" stroke-width="1.1"/>
<text x="26.8" y="252.83636363636361" font-size="9.6" fill="#d0d0d0" text-anchor="end" textLength="16.8" lengthAdjust="spacingAndGlyphs" stroke="#d0d0d0" stroke-width="0.3">1.2V</text>
<path d="M27.0,224.4 H32.0" stroke="#b0b0b0" stroke-width="1.1"/>
<text x="26.8" y="227.16363636363636" font-size="9.6" fill="#d0d0d0" text-anchor="end" textLength="16.8" lengthAdjust="spacingAndGlyphs" stroke="#d0d0d0" stroke-width="0.3">1.5V</text>
<path d="M27.0,198.7 H32.0" stroke="#b0b0b0" stroke-width="1.1"/>
<text x="26.8" y="201.49090909090907" font-size="9.6" fill="#d0d0d0" text-anchor="end" textLength="16.8" lengthAdjust="spacingAndGlyphs" stroke="#d0d0d0" stroke-width="0.3">1.8V</text>
<path d="M27.0,173.0 H32.0" stroke="#b0b0b0" stroke-width="1.1"/>
<text x="26.8" y="175.81818181818184" font-size="9.6" fill="#d0d0d0" text-anchor="end" textLength="16.8" lengthAdjust="spacingAndGlyphs" stroke="#d0d0d0" stroke-width="0.3">2.1V</text>
<path d="M27.0,147.3 H32.0" stroke="#b0b0b0" stroke-width="1.1"/>
<text x="26.8" y="150.14545454545456" font-size="9.6" fill="#d0d0d0" text-anchor="end" textLength="16.8" lengthAdjust="spacingAndGlyphs" stroke="#d0d0d0" stroke-width="0.3">2.4V</text>
<path d="M27.0,121.7 H32.0" stroke="#b0b0b0" stroke-width="1.1"/>
<text x="26.8" y="124.47272727272723" font-size="9.6" fill="#d0d0d0" text-anchor="end" textLength="16.8" lengthAdjust="spacingAndGlyphs" stroke="#d0d0d0" stroke-width="0.3">2.7V</text>
<path d="M27.0,96.0 H32.0" stroke="#b0b0b0" stroke-width="1.1"/>
<text x="26.8" y="98.8" font-size="9.6" fill="#d0d0d0" text-anchor="end" textLength="16.8" lengthAdjust="spacingAndGlyphs" stroke="#d0d0d0" stroke-width="0.3">3.0V</text>
<path d="M32.0,378.4 V383.0" stroke="#b0b0b0" stroke-width="1.1"/>
<text x="32.0" y="391.6" font-size="9.6" fill="#d0d0d0" text-anchor="middle" textLength="15.2" lengthAdjust="spacingAndGlyphs" stroke="#d0d0d0" stroke-width="0.3" clip-path="url(#plotclip)">0.0s</text>
<path d="M147.3,378.4 V383.0" stroke="#b0b0b0" stroke-width="1.1"/>
<text x="147.32999999999998" y="391.6" font-size="9.6" fill="#d0d0d0" text-anchor="middle" textLength="15.2" lengthAdjust="spacingAndGlyphs" stroke="#d0d0d0" stroke-width="0.3" clip-path="url(#plotclip)">0.1s</text>
<path d="M262.7,378.4 V383.0" stroke="#b0b0b0" stroke-width="1.1"/>
<text x="262.65999999999997" y="391.6" font-size="9.6" fill="#d0d0d0" text-anchor="middle" textLength="15.2" lengthAdjust="spacingAndGlyphs" stroke="#d0d0d0" stroke-width="0.3" clip-path="url(#plotclip)">0.2s</text>
<path d="M378.0,378.4 V383.0" stroke="#b0b0b0" stroke-width="1.1"/>
<text x="377.98999999999995" y="391.6" font-size="9.6" fill="#d0d0d0" text-anchor="middle" textLength="15.2" lengthAdjust="spacingAndGlyphs" stroke="#d0d0d0" stroke-width="0.3" clip-path="url(#plotclip)">0.3s</text>
<path d="M493.3,378.4 V383.0" stroke="#b0b0b0" stroke-width="1.1"/>
<text x="493.32" y="391.6" font-size="9.6" fill="#d0d0d0" text-anchor="middle" textLength="15.2" lengthAdjust="spacingAndGlyphs" stroke="#d0d0d0" stroke-width="0.3" clip-path="url(#plotclip)">0.4s</text>
<path d="M608.6,378.4 V383.0" stroke="#b0b0b0" stroke-width="1.1"/>
<text x="608.65" y="391.6" font-size="9.6" fill="#d0d0d0" text-anchor="middle" textLength="15.2" lengthAdjust="spacingAndGlyphs" stroke="#d0d0d0" stroke-width="0.3" clip-path="url(#plotclip)">0.5s</text>
<path d="M724.0,378.4 V383.0" stroke="#b0b0b0" stroke-width="1.1"/>
<text x="723.9799999999999" y="391.6" font-size="9.6" fill="#d0d0d0" text-anchor="middle" textLength="15.2" lengthAdjust="spacingAndGlyphs" stroke="#d0d0d0" stroke-width="0.3" clip-path="url(#plotclip)">0.6s</text>
<path d="M839.3,378.4 V383.0" stroke="#b0b0b0" stroke-width="1.1"/>
<text x="839.31" y="391.6" font-size="9.6" fill="#d0d0d0" text-anchor="middle" textLength="15.2" lengthAdjust="spacingAndGlyphs" stroke="#d0d0d0" stroke-width="0.3" clip-path="url(#plotclip)">0.7s</text>
<path d="M954.6,378.4 V383.0" stroke="#b0b0b0" stroke-width="1.1"/>
<text x="954.64" y="391.6" font-size="9.6" fill="#d0d0d0" text-anchor="middle" textLength="15.2" lengthAdjust="spacingAndGlyphs" stroke="#d0d0d0" stroke-width="0.3" clip-path="url(#plotclip)">0.8s</text>
<path d="M1070.0,378.4 V383.0" stroke="#b0b0b0" stroke-width="1.1"/>
<text x="1069.97" y="391.6" font-size="9.6" fill="#d0d0d0" text-anchor="middle" textLength="15.2" lengthAdjust="spacingAndGlyphs" stroke="#d0d0d0" stroke-width="0.3" clip-path="url(#plotclip)">0.9s</text>
<path d="M1185.3,378.4 V383.0" stroke="#b0b0b0" stroke-width="1.1"/>
<text x="1185.3" y="391.6" font-size="9.6" fill="#d0d0d0" text-anchor="middle" textLength="15.2" lengthAdjust="spacingAndGlyphs" stroke="#d0d0d0" stroke-width="0.3" clip-path="url(#plotclip)">1.0s</text>
<text x="305.8" y="93.3" font-size="9.6" font-weight="bold" fill="#2a9c8c" text-anchor="start" textLength="28.2" lengthAdjust="spacingAndGlyphs" >V(n003)</text>
<text x="881.2" y="93.3" font-size="9.6" font-weight="bold" fill="#2ed02e" text-anchor="start" textLength="28.8" lengthAdjust="spacingAndGlyphs" >V(n001)</text>
<path d="M1.5,737 V405.5 Q1.5,400.8 6,400.8 H1194 Q1198.7,400.8 1198.7,405.5 V737 Z" fill="#dde7f1" stroke="#6a737e" stroke-width="1"/>
<rect x="2.5" y="401.8" width="1195.2" height="17.8" fill="url(#wt2)"/>
<path d="M14.8,406.8 L11.6,410 L11.6,413.2 L15.2,416.6" fill="none" stroke="#12127a" stroke-width="1.6"/><path d="M9,411.5 h2.5" stroke="#12127a" stroke-width="1"/>
<text x="20" y="415.6" font-size="8.6" fill="#44546a" text-anchor="start" textLength="93.5" lengthAdjust="spacingAndGlyphs" >SallenKey_TS912_publish.asc</text>
<rect x="1132" y="408" width="18" height="9.5" rx="2" fill="#e4ecf4" stroke="#9aa8b8" stroke-width="0.8"/>
<rect x="1153" y="408" width="18" height="9.5" rx="2" fill="#e4ecf4" stroke="#9aa8b8" stroke-width="0.8"/>
<rect x="1173.5" y="408" width="18.5" height="9.5" rx="2" fill="#e4ecf4" stroke="#9aa8b8" stroke-width="0.8"/>
<rect x="1138.3" y="412.2" width="5.5" height="2" rx="0.8" fill="#fff" stroke="#555" stroke-width="0.6"/>
<rect x="1159.3" y="410.8" width="5.5" height="4" rx="0.8" fill="#fff" stroke="#555" stroke-width="0.8"/>
<path d="M1180.2,410.2 l5.6,5 M1185.8,410.2 l-5.6,5" stroke="#707070" stroke-width="3.2"/><path d="M1180.2,410.2 l5.6,5 M1185.8,410.2 l-5.6,5" stroke="#fff" stroke-width="1.6"/>
<rect x="7" y="419.6" width="1185.5" height="311" fill="#c8c8c8"/>
<rect x="7" y="419.6" width="1185.5" height="311" fill="url(#dots)"/>
<rect x="6.2" y="419.6" width="1" height="311" fill="#7a8896"/>
<rect x="6.2" y="419.2" width="1186.3" height="0.8" fill="#7a8896"/>
<rect x="0" y="736" width="1200" height="1" fill="#7d7d7d"/>
<path d="M879.2,532.7 L879.2,444.5 L309.1,444.5 L309.1,568.2 M309.1,600.2 L309.1,645.2 L879.2,645.2 L879.2,548.2 M261.8,540.8 L309.1,540.8 M357.3,444.5 L357.3,472.3 M357.3,504.4 L357.3,576.7 M357.3,608.7 L357.3,645.2 M429.6,444.5 L429.6,480.8 M429.6,512.8 L429.6,584.7 M429.6,616.7 L429.6,645.2 M429.6,540.8 L461.7,540.8 L461.7,500.7 L546.5,500.7 M578.4,500.7 L598.2,500.7 L598.2,524.8 L606.2,524.8 M501.8,576.2 L501.8,524.8 L515.2,524.8 M520.2,524.8 L598.2,524.8 M501.8,608.2 L501.8,629.2 M622.3,444.5 L622.3,525.3 M622.3,540.4 L622.3,645.2 M606.2,540.8 L590.2,540.8 L590.2,589.0 L654.4,589.0 M637.6,532.8 L706.5,532.8 M739.5,532.8 L778.0,532.8 M811.0,532.8 L863.2,532.8 M654.4,532.8 L654.4,544.7 M654.4,577.7 L654.4,593.5 M654.4,625.4 L654.4,629.2 L734.7,629.2 M758.8,532.8 L758.8,511.0 M758.8,507.0 L758.8,476.6 L919.4,476.6 L919.4,605.1 L847.1,605.1 L847.1,548.9 L863.2,548.9 M823.0,532.8 L823.0,570.0 M823.0,574.6 L823.0,613.1 M895.0,540.8 L919.4,540.8" fill="none" stroke="#4d4dbc" stroke-width="1.25"/>
<path d="" fill="none" stroke="#4d4dbc" stroke-width="1.25"/>
<rect x="351.5" y="472.3" width="11.6" height="32" fill="none" stroke="#3a3a90" stroke-width="1"/>
<rect x="351.5" y="576.7" width="11.6" height="32" fill="none" stroke="#3a3a90" stroke-width="1"/>
<rect x="423.8" y="480.8" width="11.6" height="32" fill="none" stroke="#3a3a90" stroke-width="1"/>
<rect x="423.8" y="584.7" width="11.6" height="32" fill="none" stroke="#3a3a90" stroke-width="1"/>
<rect x="648.6" y="545.0" width="11.6" height="32" fill="none" stroke="#3a3a90" stroke-width="1"/>
<rect x="648.6" y="593.5" width="11.6" height="32" fill="none" stroke="#3a3a90" stroke-width="1"/>
<rect x="546.5" y="495.2" width="32.5" height="11" fill="none" stroke="#3a3a90" stroke-width="1"/>
<rect x="706.5" y="527.3" width="32.5" height="11" fill="none" stroke="#3a3a90" stroke-width="1"/>
<rect x="778.0" y="527.3" width="32.5" height="11" fill="none" stroke="#3a3a90" stroke-width="1"/>
<path d="M515.3,516.8 V532.8 M520.1,516.8 V532.8" stroke="#3a3a90" stroke-width="1.2"/>
<path d="M750.3,507 H767.3 M750.3,511.2 H767.3" stroke="#3a3a90" stroke-width="1.2"/>
<path d="M814.5,570 H831.5 M814.5,574.6 H831.5" stroke="#3a3a90" stroke-width="1.2"/>
<path d="M492.5,629.2 H511.1 L501.8,638.0 Z" fill="none" stroke="#3a3a90" stroke-width="1"/>
<path d="M813.7,613.1 H832.3 L823.0,621.9 Z" fill="none" stroke="#3a3a90" stroke-width="1"/>
<path d="M261.8,532.3 L252.3,540.8 L261.8,549.3 Z" fill="none" stroke="#3a3a90" stroke-width="1"/>
<path d="M734.7,620.7 L744.2,629.2 L734.7,637.7 Z" fill="none" stroke="#3a3a90" stroke-width="1"/>
<circle cx="309.1" cy="584.2" r="16" fill="none" stroke="#3a3a90" stroke-width="1"/>
<path d="M305.1,575.2 H313.1 M305.1,595.2 H313.1 M309.1,590.7 V600.2" stroke="#3a3a90" stroke-width="1"/>
<circle cx="501.8" cy="592.2" r="16" fill="none" stroke="#3a3a90" stroke-width="1"/>
<path d="M497.8,583.2 H505.8 M501.8,576.7 V586.7 M497.8,603.2 H505.8" stroke="#3a3a90" stroke-width="1"/>
<path d="M606.2,517.1 L637.6,532.9 L606.2,548.6 Z" fill="none" stroke="#3a3a90" stroke-width="1"/>
<path d="M863.2,524.9 L895.0,540.9 L863.2,556.9 Z" fill="none" stroke="#3a3a90" stroke-width="1"/>
<rect x="355.0" y="442.2" width="4.6" height="4.6" fill="#1010d0"/>
<rect x="427.3" y="442.2" width="4.6" height="4.6" fill="#1010d0"/>
<rect x="620.0" y="442.2" width="4.6" height="4.6" fill="#1010d0"/>
<rect x="306.8" y="538.5" width="4.6" height="4.6" fill="#1010d0"/>
<rect x="427.3" y="538.5" width="4.6" height="4.6" fill="#1010d0"/>
<rect x="595.9" y="522.5" width="4.6" height="4.6" fill="#1010d0"/>
<rect x="652.1" y="530.5" width="4.6" height="4.6" fill="#1010d0"/>
<rect x="652.1" y="586.7" width="4.6" height="4.6" fill="#1010d0"/>
<rect x="756.5" y="530.5" width="4.6" height="4.6" fill="#1010d0"/>
<rect x="820.7" y="530.5" width="4.6" height="4.6" fill="#1010d0"/>
<rect x="917.1" y="538.5" width="4.6" height="4.6" fill="#1010d0"/>
<rect x="355.0" y="642.9" width="4.6" height="4.6" fill="#1010d0"/>
<rect x="427.3" y="642.9" width="4.6" height="4.6" fill="#1010d0"/>
<rect x="620.0" y="642.9" width="4.6" height="4.6" fill="#1010d0"/>
<text x="365.4" y="484.09999999999997" font-size="12.2" font-weight="bold" fill="#000" text-anchor="start" textLength="13" lengthAdjust="spacingAndGlyphs" >R1</text>
<text x="365.4" y="502.09999999999997" font-size="12.2" font-weight="bold" fill="#000" text-anchor="start" textLength="31.2" lengthAdjust="spacingAndGlyphs" >2Meg</text>
<text x="365.4" y="590.1" font-size="12.2" font-weight="bold" fill="#000" text-anchor="start" textLength="13" lengthAdjust="spacingAndGlyphs" >R3</text>
<text x="365.4" y="607.8000000000001" font-size="12.2" font-weight="bold" fill="#000" text-anchor="start" textLength="31.2" lengthAdjust="spacingAndGlyphs" >1Meg</text>
<text x="437.5" y="492.59999999999997" font-size="12.2" font-weight="bold" fill="#000" text-anchor="start" textLength="13" lengthAdjust="spacingAndGlyphs" >R7</text>
<text x="437.5" y="511.8" font-size="12.2" font-weight="bold" fill="#000" text-anchor="start" textLength="20.5" lengthAdjust="spacingAndGlyphs" >47k</text>
<text x="437.5" y="598.2" font-size="12.2" font-weight="bold" fill="#000" text-anchor="start" textLength="13" lengthAdjust="spacingAndGlyphs" >R8</text>
<text x="437.5" y="616.8000000000001" font-size="12.2" font-weight="bold" fill="#000" text-anchor="start" textLength="31.2" lengthAdjust="spacingAndGlyphs" >1Meg</text>
<text x="555" y="492.5" font-size="12.2" font-weight="bold" fill="#000" text-anchor="start" textLength="14" lengthAdjust="spacingAndGlyphs" >R6</text>
<text x="548.7" y="518.2" font-size="12.2" font-weight="bold" fill="#000" text-anchor="start" textLength="27.3" lengthAdjust="spacingAndGlyphs" >170k</text>
<text x="510" y="514.4000000000001" font-size="12.2" font-weight="bold" fill="#000" text-anchor="start" textLength="15.7" lengthAdjust="spacingAndGlyphs" >C3</text>
<text x="512" y="542.2" font-size="12.2" font-weight="bold" fill="#000" text-anchor="start" textLength="13.5" lengthAdjust="spacingAndGlyphs" >1µ</text>
<text x="514.5" y="576.5" font-size="12.2" font-weight="bold" fill="#000" text-anchor="start" textLength="18.2" lengthAdjust="spacingAndGlyphs" >Vin</text>
<text x="280" y="569.2" font-size="12.2" font-weight="bold" fill="#000" text-anchor="start" textLength="16" lengthAdjust="spacingAndGlyphs" >4.3</text>
<text x="283" y="609.2" font-size="12.2" font-weight="bold" fill="#000" text-anchor="start" textLength="14" lengthAdjust="spacingAndGlyphs" >V2</text>
<text x="601.8" y="562.0" font-size="12.2" font-weight="bold" fill="#000" text-anchor="start" textLength="15" lengthAdjust="spacingAndGlyphs" >U1</text>
<text x="859.4" y="569.4000000000001" font-size="12.2" font-weight="bold" fill="#000" text-anchor="start" textLength="15" lengthAdjust="spacingAndGlyphs" >U2</text>
<text x="662.5" y="557.7" font-size="12.2" font-weight="bold" fill="#000" text-anchor="start" textLength="14.5" lengthAdjust="spacingAndGlyphs" >R9</text>
<text x="662.5" y="576.8000000000001" font-size="12.2" font-weight="bold" fill="#000" text-anchor="start" textLength="27.5" lengthAdjust="spacingAndGlyphs" >220k</text>
<text x="661.4" y="605.2" font-size="12.2" font-weight="bold" fill="#000" text-anchor="start" textLength="23" lengthAdjust="spacingAndGlyphs" >R10</text>
<text x="662" y="626.0" font-size="12.2" font-weight="bold" fill="#000" text-anchor="start" textLength="20.5" lengthAdjust="spacingAndGlyphs" >22k</text>
<text x="715" y="525.4000000000001" font-size="12.2" font-weight="bold" fill="#000" text-anchor="start" textLength="15.3" lengthAdjust="spacingAndGlyphs" >R2</text>
<text x="706.5" y="549.3000000000001" font-size="12.2" font-weight="bold" fill="#000" text-anchor="start" textLength="31.9" lengthAdjust="spacingAndGlyphs" >1.11k</text>
<text x="762" y="501.59999999999997" font-size="12.2" font-weight="bold" fill="#000" text-anchor="start" textLength="16" lengthAdjust="spacingAndGlyphs" >C1</text>
<text x="762" y="524.7" font-size="12.2" font-weight="bold" fill="#000" text-anchor="start" textLength="21.5" lengthAdjust="spacingAndGlyphs" >20n</text>
<text x="787" y="525.4000000000001" font-size="12.2" font-weight="bold" fill="#000" text-anchor="start" textLength="15" lengthAdjust="spacingAndGlyphs" >R5</text>
<text x="780" y="549.2" font-size="12.2" font-weight="bold" fill="#000" text-anchor="start" textLength="30" lengthAdjust="spacingAndGlyphs" >9.63k</text>
<text x="826.8" y="565.2" font-size="12.2" font-weight="bold" fill="#000" text-anchor="start" textLength="16.2" lengthAdjust="spacingAndGlyphs" >C2</text>
<text x="826.8" y="589.6" font-size="12.2" font-weight="bold" fill="#000" text-anchor="start" textLength="14.2" lengthAdjust="spacingAndGlyphs" >2n</text>
<text x="365.7" y="441.2" font-size="12.2" font-weight="bold" fill="#1818b0" text-anchor="start" textLength="15" lengthAdjust="spacingAndGlyphs" >0V</text>
<text x="615.5" y="529.8000000000001" font-size="12.2" font-weight="bold" fill="#1818b0" text-anchor="start" textLength="77" lengthAdjust="spacingAndGlyphs" >4.0305783mV</text>
<text x="921" y="544.5" font-size="12.2" font-weight="bold" fill="#1818b0" text-anchor="start" textLength="77" lengthAdjust="spacingAndGlyphs" >4.3969667mV</text>
<text x="609.5" y="527.5" font-size="10.5" font-weight="bold" fill="#000" text-anchor="start" >+</text>
<text x="610" y="545" font-size="10.5" font-weight="bold" fill="#000" text-anchor="start" >-</text>
<text x="626.5" y="520.5" font-size="10.5" font-weight="bold" fill="#000" text-anchor="start" >-</text>
<text x="626.5" y="551.5" font-size="10.5" font-weight="bold" fill="#000" text-anchor="start" >+</text>
<text x="866.5" y="535.8" font-size="10.5" font-weight="bold" fill="#000" text-anchor="start" >+</text>
<text x="867" y="553" font-size="10.5" font-weight="bold" fill="#000" text-anchor="start" >-</text>
<text x="883" y="527.8" font-size="10.5" font-weight="bold" fill="#000" text-anchor="start" >-</text>
<text x="883" y="559.5" font-size="10.5" font-weight="bold" fill="#000" text-anchor="start" >+</text>
<text transform="translate(354.3,530.4) rotate(-90)" font-size="12.2" font-weight="bold" fill="#1818b0" textLength="13" lengthAdjust="spacingAndGlyphs">0V</text>
<text transform="translate(425.6,539.2) rotate(-90)" font-size="12.2" font-weight="bold" fill="#1818b0" textLength="13" lengthAdjust="spacingAndGlyphs">0V</text>
<text x="309.8" y="685.8" font-size="12.2" font-weight="bold" fill="#000" text-anchor="start" textLength="117" lengthAdjust="spacingAndGlyphs" >.tran 1000ms startup</text>
<text x="437.6" y="685.8" font-size="12.2" font-weight="bold" fill="#000" text-anchor="start" textLength="109.4" lengthAdjust="spacingAndGlyphs" >;.ac dec 100 10 40k</text>
<text x="310.8" y="705.6" font-size="12.2" font-weight="bold" fill="#000" text-anchor="start" textLength="84.5" lengthAdjust="spacingAndGlyphs" >SINE(0 0.06 1k)</text>
<text x="310.8" y="720.3" font-size="12.2" font-weight="bold" fill="#000" text-anchor="start" textLength="42.9" lengthAdjust="spacingAndGlyphs" >AC 0.04</text>
<rect x="0" y="737" width="1200" height="13" fill="#f0f0f0"/>
<text x="2" y="747.5" font-size="8.4" fill="#1a1a1a" text-anchor="start" textLength="169" lengthAdjust="spacingAndGlyphs" stroke="#1a1a1a" stroke-width="0.2">Right-Click to manually enter Horizontal Axis Limits</text>
</svg></body></html>
